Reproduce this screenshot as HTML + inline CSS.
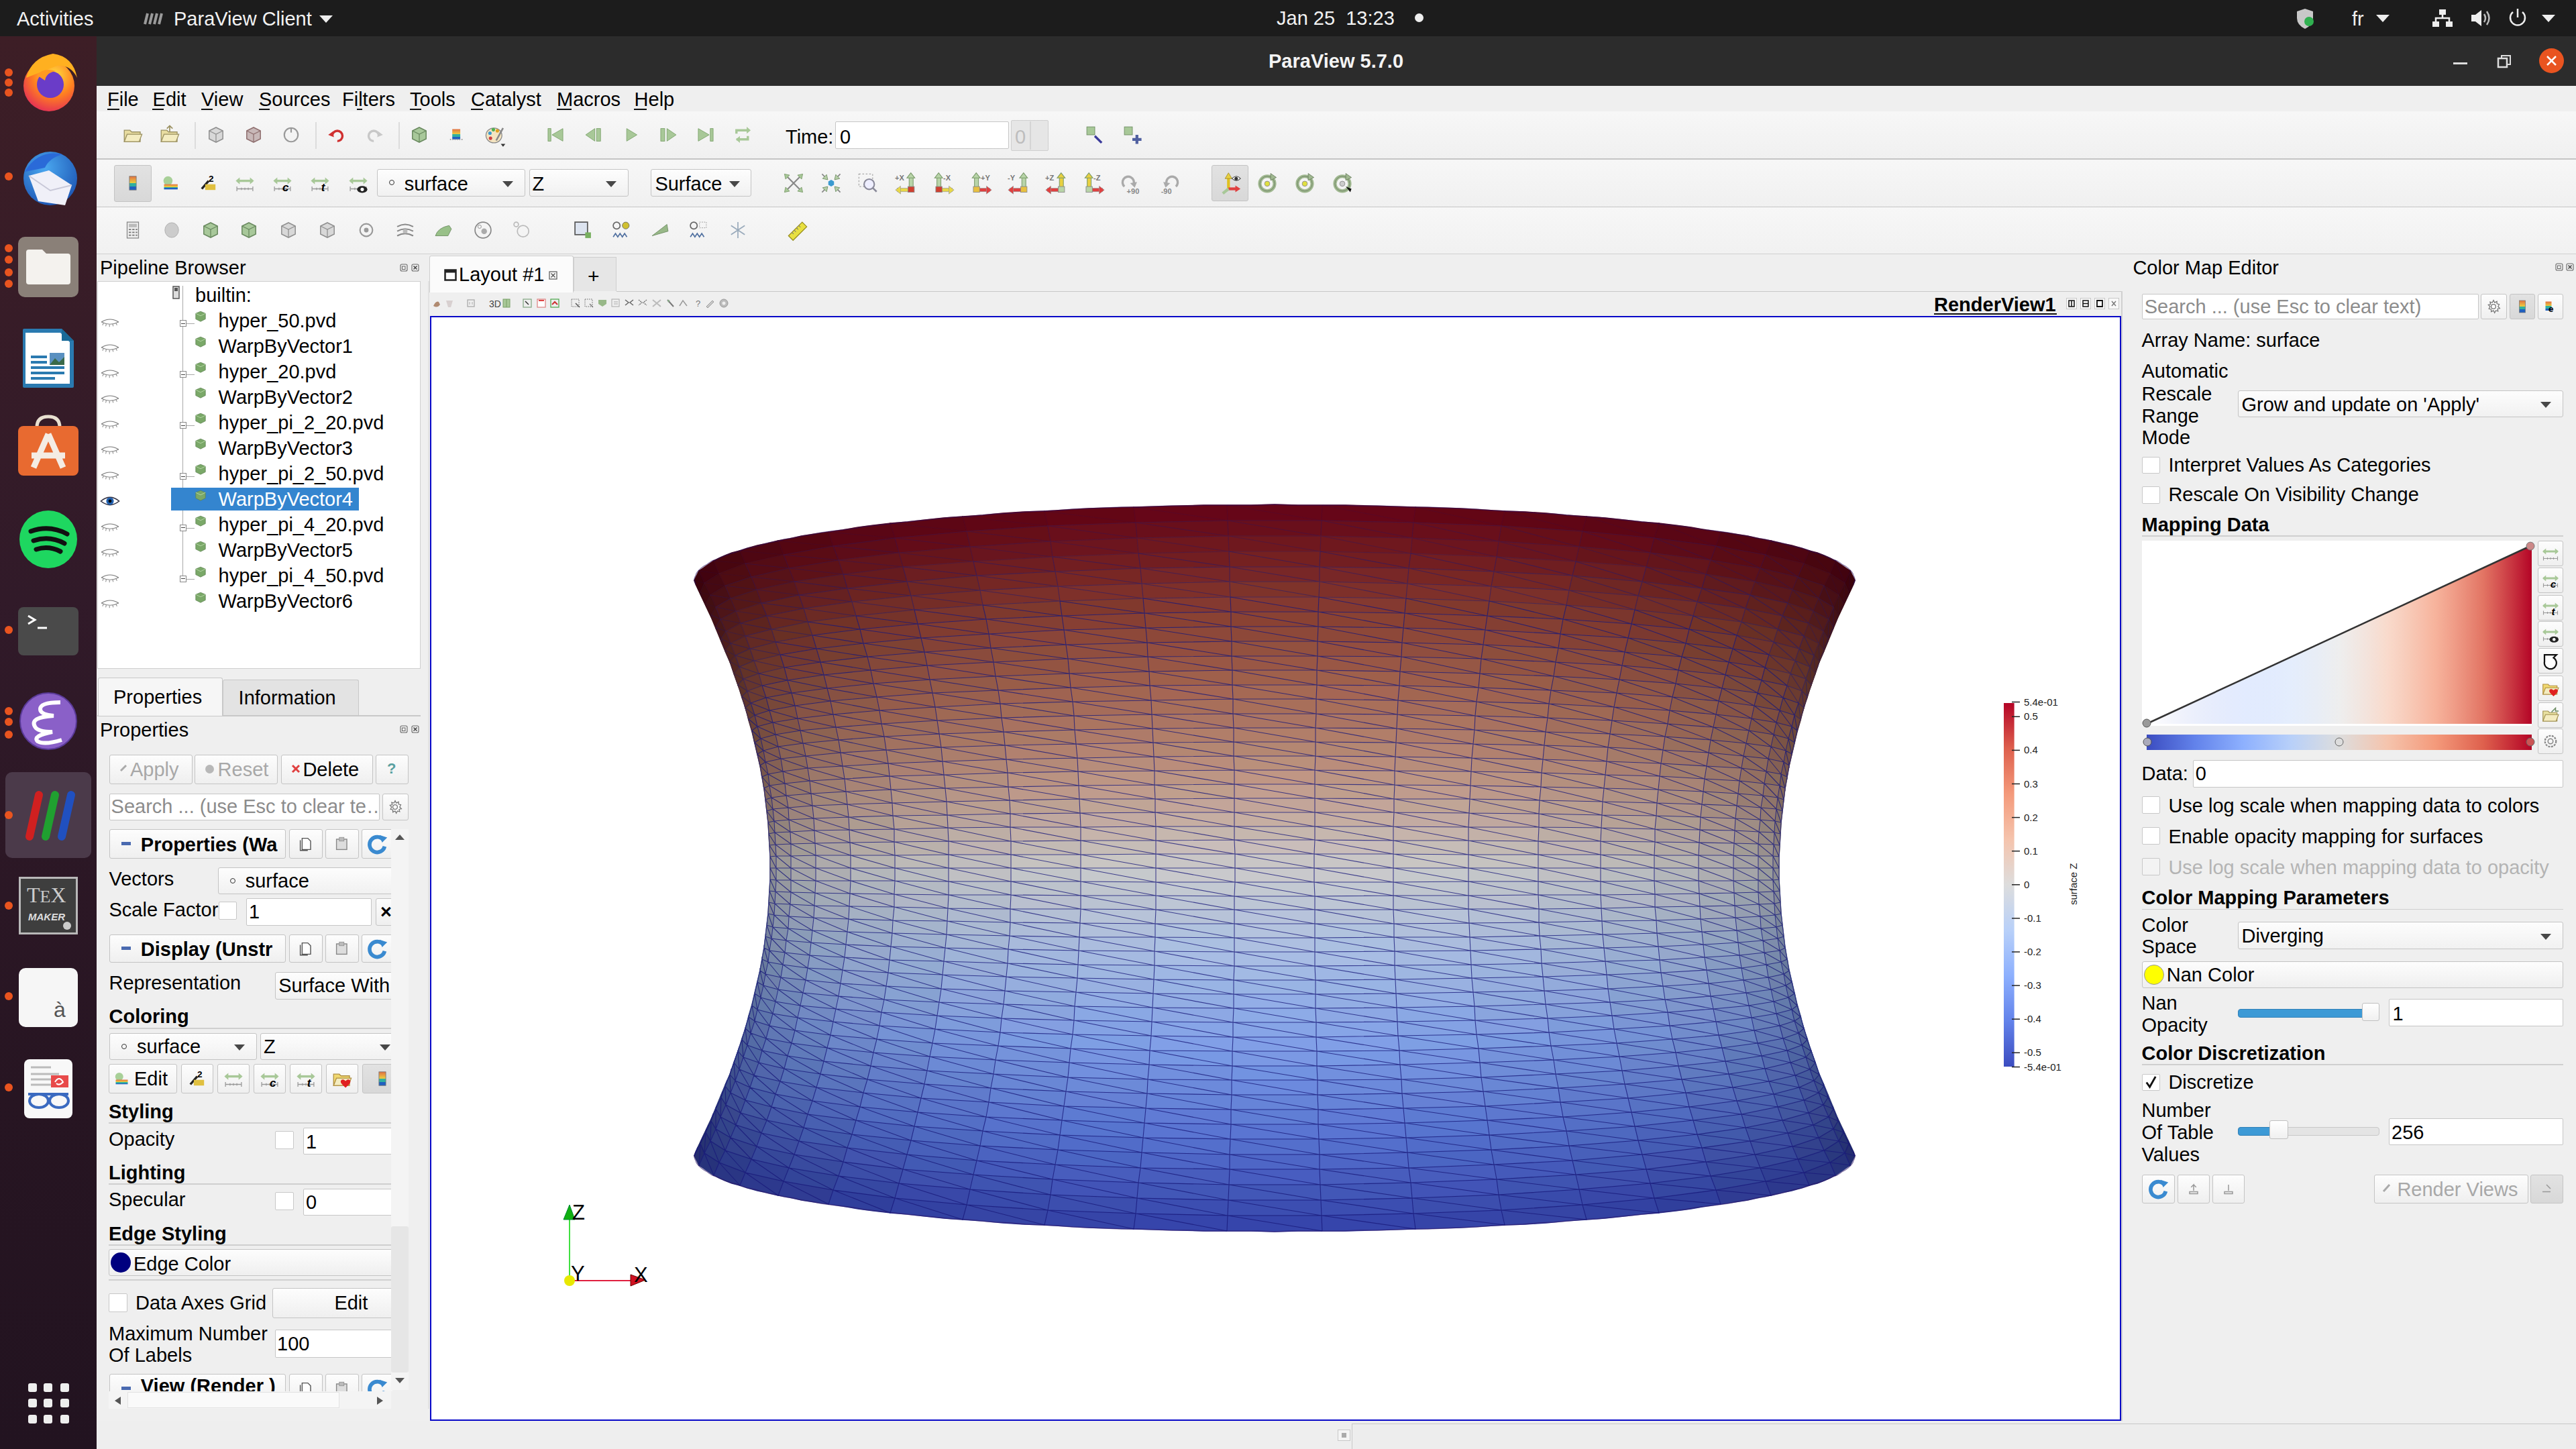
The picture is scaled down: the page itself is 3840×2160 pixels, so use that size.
<!DOCTYPE html>
<html><head><meta charset="utf-8">
<style>
*{box-sizing:border-box;margin:0;padding:0}
html,body{width:3840px;height:2160px;overflow:hidden;background:#efefef;font-family:"Liberation Sans",sans-serif;font-size:29px;color:#000}
.a{position:absolute}
.t{position:absolute;white-space:nowrap;line-height:1}
svg{overflow:visible}
</style></head><body>
<div class="a" style="left:0.0px;top:0.0px;width:3840.0px;height:54.0px;background:#1c1c1c"></div>
<div class="t" style="left:25.0px;top:13.5px;color:#f2f2f2">Activities</div>
<svg class="a" style="left:214.0px;top:18.0px" width="34" height="20" viewBox="0 0 34 20"><path d="M6 2 l-4 16 M13 2 l-4 16 M20 2 l-4 16 M27 2 l-4 16" stroke="#9a9a9a" stroke-width="4"/></svg>
<div class="t" style="left:259.0px;top:13.5px;color:#f2f2f2">ParaView Client</div>
<div class="a" style="left:476px;top:23px;border-left:10px solid transparent;border-right:10px solid transparent;border-top:11px solid #eee"></div>
<div class="t" style="left:1903.0px;top:12.5px;color:#f2f2f2">Jan 25&nbsp; 13:23</div>
<div class="a" style="left:2109.0px;top:20.0px;width:13.0px;height:13.0px;background:#eee;border-radius:50%"></div>
<svg class="a" style="left:3420.0px;top:10.0px" width="36" height="36" viewBox="0 0 36 36"><path d="M16 3 l12 4 v10 q0 10 -12 16 q-12 -6 -12 -16 v-10z" fill="#c8c8c8"/><circle cx="22" cy="22" r="7" fill="#30b050"/></svg>
<div class="t" style="left:3506.0px;top:13.5px;color:#eee">fr</div>
<div class="a" style="left:3542px;top:22px;border-left:10px solid transparent;border-right:10px solid transparent;border-top:11px solid #eee"></div>
<svg class="a" style="left:3625.0px;top:12.0px" width="32" height="30" viewBox="0 0 32 30"><rect x="11" y="2" width="10" height="8" fill="#eee"/><rect x="1" y="20" width="10" height="8" fill="#eee"/><rect x="21" y="20" width="10" height="8" fill="#eee"/><path d="M16 10 v5 M6 20 v-5 h20 v5" stroke="#eee" stroke-width="2.5" fill="none"/></svg>
<svg class="a" style="left:3682.0px;top:12.0px" width="32" height="30" viewBox="0 0 32 30"><path d="M2 10 h6 l9 -7 v24 l-9 -7 h-6z" fill="#eee"/><path d="M21 9 q4 6 0 12 M25 5 q7 10 0 20" fill="none" stroke="#bbb" stroke-width="2.5"/></svg>
<svg class="a" style="left:3737.0px;top:10.0px" width="32" height="32" viewBox="0 0 32 32"><path d="M9 8 a11 11 0 1 0 14 0" fill="none" stroke="#eee" stroke-width="2.5"/><path d="M16 3 v13" stroke="#eee" stroke-width="2.5"/></svg>
<div class="a" style="left:3789px;top:22px;border-left:10px solid transparent;border-right:10px solid transparent;border-top:11px solid #eee"></div>
<div class="a" style="left:0.0px;top:54.0px;width:144.0px;height:2106.0px;background:linear-gradient(180deg,#3d1e26 0%,#311a29 40%,#271522 75%,#221320 100%)"></div>
<div class="a" style="left:7.0px;top:102.0px;width:12.0px;height:12.0px;background:#e9541f;border-radius:50%"></div>
<div class="a" style="left:7.0px;top:116.5px;width:12.0px;height:12.0px;background:#e9541f;border-radius:50%"></div>
<div class="a" style="left:7.0px;top:132.0px;width:12.0px;height:12.0px;background:#e9541f;border-radius:50%"></div>
<svg class="a" style="left:29.0px;top:76.0px" width="88" height="92" viewBox="0 0 88 92"><defs><radialGradient id="ff1" cx="0.6" cy="0.3" r="0.8"><stop offset="0" stop-color="#ffe040"/><stop offset="0.5" stop-color="#ff8020"/><stop offset="1" stop-color="#e02060"/></radialGradient></defs><circle cx="44" cy="52" r="38" fill="url(#ff1)"/><path d="M10 40 q8 -30 40 -36 q30 4 36 36 q-10 -20 -30 -18" fill="#ffb020"/><circle cx="46" cy="50" r="20" fill="#6a3cc8"/><path d="M26 36 q10 -12 28 -6 q-14 2 -16 14z" fill="#ff9a20"/></svg>
<div class="a" style="left:7.0px;top:257.0px;width:12.0px;height:12.0px;background:#e9541f;border-radius:50%"></div>
<svg class="a" style="left:27.0px;top:216.0px" width="92" height="96" viewBox="0 0 92 96"><defs><radialGradient id="tb1" cx="0.4" cy="0.3" r="0.8"><stop offset="0" stop-color="#4aa8f0"/><stop offset="1" stop-color="#1a50b0"/></radialGradient></defs><circle cx="48" cy="50" r="40" fill="url(#tb1)"/><path d="M10 40 q20 -34 56 -26 q-20 6 -26 20z" fill="#2a6ad8"/><path d="M16 46 l30 -8 l34 22 l-10 30 l-40 -6z" fill="#f0f0f8"/><path d="M16 46 l32 22 l32 -8" fill="none" stroke="#c8c8d8" stroke-width="2"/></svg>
<div class="a" style="left:7.0px;top:364.0px;width:12.0px;height:12.0px;background:#e9541f;border-radius:50%"></div>
<div class="a" style="left:7.0px;top:381.0px;width:12.0px;height:12.0px;background:#e9541f;border-radius:50%"></div>
<div class="a" style="left:7.0px;top:400.0px;width:12.0px;height:12.0px;background:#e9541f;border-radius:50%"></div>
<div class="a" style="left:7.0px;top:417.0px;width:12.0px;height:12.0px;background:#e9541f;border-radius:50%"></div>
<div class="a" style="left:27.0px;top:353.0px;width:90.0px;height:90.0px;background:#8a8078;border-radius:10px"></div>
<svg class="a" style="left:37.0px;top:370.0px" width="70" height="56" viewBox="0 0 70 56"><path d="M2 6 q0 -4 4 -4 h20 l6 6 h32 q4 0 4 4 v38 q0 4 -4 4 h-58 q-4 0 -4 -4z" fill="#f4f2ee"/></svg>
<svg class="a" style="left:32.0px;top:488.0px" width="80" height="92" viewBox="0 0 80 92"><path d="M2 4 q0 -2 2 -2 h56 l18 18 v68 q0 2 -2 2 h-72 q-2 0 -2 -2z" fill="#2a7ab0"/><path d="M6 8 h52 l14 14 v62 h-66z" fill="#fff"/><path d="M60 2 l18 18 h-18z" fill="#1a6a98"/><path d="M14 44 h24 M14 52 h24 M14 60 h50 M14 68 h50 M14 76 h36" stroke="#2a7ab0" stroke-width="4"/><rect x="42" y="38" width="22" height="18" fill="#5a90c0"/><path d="M42 56 l8 -10 l6 6 l8 -8 v12z" fill="#3a6a4a"/></svg>
<svg class="a" style="left:27.0px;top:615.0px" width="90" height="96" viewBox="0 0 90 96"><path d="M28 22 q0 -16 17 -16 q17 0 17 16" fill="none" stroke="#e8e0d0" stroke-width="5"/><rect x="0" y="20" width="90" height="74" rx="8" fill="#e86a30"/><path d="M45 32 l-22 50 M45 32 l22 50 M20 64 h50" stroke="#f4ece4" stroke-width="9"/></svg>
<svg class="a" style="left:28.0px;top:760.0px" width="88" height="88" viewBox="0 0 88 88"><circle cx="44" cy="44" r="43" fill="#1ed760"/><path d="M18 32 q28 -10 54 4 M22 46 q24 -8 46 4 M26 59 q18 -6 36 3" fill="none" stroke="#111" stroke-width="7" stroke-linecap="round"/></svg>
<div class="a" style="left:7.0px;top:933.0px;width:12.0px;height:12.0px;background:#e9541f;border-radius:50%"></div>
<div class="a" style="left:27.0px;top:905.0px;width:90.0px;height:72.0px;background:#4a4a4a;border-radius:8px"></div>
<svg class="a" style="left:40.0px;top:914.0px" width="40" height="30" viewBox="0 0 40 30"><path d="M2 4 l10 6 l-10 6" fill="none" stroke="#fff" stroke-width="3"/><path d="M16 22 h14" stroke="#fff" stroke-width="3"/></svg>
<div class="a" style="left:7.0px;top:1054.0px;width:12.0px;height:12.0px;background:#e9541f;border-radius:50%"></div>
<div class="a" style="left:7.0px;top:1070.0px;width:12.0px;height:12.0px;background:#e9541f;border-radius:50%"></div>
<div class="a" style="left:7.0px;top:1089.0px;width:12.0px;height:12.0px;background:#e9541f;border-radius:50%"></div>
<svg class="a" style="left:28.0px;top:1031.0px" width="88" height="88" viewBox="0 0 88 88"><circle cx="44" cy="44" r="42" fill="#8a60c8"/><circle cx="44" cy="44" r="42" fill="none" stroke="#5a3a98" stroke-width="2"/><path d="M62 16 q-30 0 -30 10 q0 8 20 10 q-36 2 -28 16 q4 8 26 8 q-30 6 -22 14 q10 6 36 -2" fill="none" stroke="#fff" stroke-width="6"/></svg>
<div class="a" style="left:8.0px;top:1151.0px;width:128.0px;height:128.0px;background:#4b3a4a;border-radius:10px"></div>
<div class="a" style="left:7.0px;top:1209.0px;width:12.0px;height:12.0px;background:#e9541f;border-radius:50%"></div>
<svg class="a" style="left:30.0px;top:1175.0px" width="84" height="80" viewBox="0 0 84 80"><path d="M14 72 l14 -62" stroke="#d02020" stroke-width="12" stroke-linecap="round"/><path d="M38 72 l14 -62" stroke="#20a030" stroke-width="12" stroke-linecap="round"/><path d="M62 72 l14 -62" stroke="#2050c0" stroke-width="12" stroke-linecap="round"/></svg>
<div class="a" style="left:7.0px;top:1344.0px;width:12.0px;height:12.0px;background:#e9541f;border-radius:50%"></div>
<div class="a" style="left:28.0px;top:1307.0px;width:88.0px;height:86.0px;background:#3e3e3e;border:3px solid #b8b8b8"></div>
<div class="t" style="left:40.0px;top:1317.9px;font-size:32px;color:#ccc;font-family:Liberation Serif">T<span style="font-size:26px">E</span>X</div>
<div class="t" style="left:42.0px;top:1359.3px;font-size:15px;font-weight:bold;color:#ddd;font-style:italic">MAKER</div>
<div class="a" style="left:94.0px;top:1374.0px;width:12.0px;height:12.0px;background:#ccc;border-radius:50%"></div>
<div class="a" style="left:7.0px;top:1479.0px;width:12.0px;height:12.0px;background:#e9541f;border-radius:50%"></div>
<div class="a" style="left:28.0px;top:1443.0px;width:88.0px;height:88.0px;background:#f6f6f6;border-radius:10px"></div>
<div class="t" style="left:80.0px;top:1488.9px;font-size:32px;color:#555">à</div>
<div class="a" style="left:7.0px;top:1615.0px;width:12.0px;height:12.0px;background:#e9541f;border-radius:50%"></div>
<div class="a" style="left:36.0px;top:1579.0px;width:72.0px;height:88.0px;background:#f8f8f8;border-radius:8px"></div>
<svg class="a" style="left:36.0px;top:1579.0px" width="72" height="88" viewBox="0 0 72 88"><path d="M10 12 h30 M10 22 h42 M10 30 h30 M10 38 h30" stroke="#bbb" stroke-width="3"/><rect x="40" y="24" width="26" height="18" fill="#e84a4a"/><path d="M46 34 q6 -10 12 0 q-6 6 -10 2" fill="none" stroke="#fff" stroke-width="2"/><path d="M6 52 h60" stroke="#3a6ac0" stroke-width="4"/><ellipse cx="22" cy="62" rx="14" ry="10" fill="none" stroke="#3a6ac0" stroke-width="4"/><ellipse cx="52" cy="62" rx="14" ry="10" fill="none" stroke="#3a6ac0" stroke-width="4"/></svg>
<div class="a" style="left:41.8px;top:2061.5px;width:13.0px;height:13.0px;background:#eee;border-radius:3px"></div>
<div class="a" style="left:65.3px;top:2061.5px;width:13.0px;height:13.0px;background:#eee;border-radius:3px"></div>
<div class="a" style="left:89.5px;top:2061.5px;width:13.0px;height:13.0px;background:#eee;border-radius:3px"></div>
<div class="a" style="left:41.8px;top:2085.1px;width:13.0px;height:13.0px;background:#eee;border-radius:3px"></div>
<div class="a" style="left:65.3px;top:2085.1px;width:13.0px;height:13.0px;background:#eee;border-radius:3px"></div>
<div class="a" style="left:89.5px;top:2085.1px;width:13.0px;height:13.0px;background:#eee;border-radius:3px"></div>
<div class="a" style="left:41.8px;top:2109.0px;width:13.0px;height:13.0px;background:#eee;border-radius:3px"></div>
<div class="a" style="left:65.3px;top:2109.0px;width:13.0px;height:13.0px;background:#eee;border-radius:3px"></div>
<div class="a" style="left:89.5px;top:2109.0px;width:13.0px;height:13.0px;background:#eee;border-radius:3px"></div>
<div class="a" style="left:144.0px;top:54.0px;width:3696.0px;height:74.0px;background:#2c2c2c"></div>
<div class="t" style="left:1891.0px;top:76.5px;font-weight:bold;color:#f4f4f4">ParaView 5.7.0</div>
<div class="a" style="left:3657.0px;top:93.0px;width:21.0px;height:3.0px;background:#ddd"></div>
<svg class="a" style="left:3722.0px;top:80.0px" width="24" height="24" viewBox="0 0 24 24"><rect x="2" y="7" width="13" height="13" fill="none" stroke="#ddd" stroke-width="2.5"/><path d="M7 7 v-4 h13 v13 h-5" fill="none" stroke="#ddd" stroke-width="2"/></svg>
<div class="a" style="left:3785.0px;top:72.0px;width:37.0px;height:37.0px;background:#e95420;border-radius:50%"></div>
<svg class="a" style="left:3792.0px;top:79.0px" width="23" height="23" viewBox="0 0 23 23"><path d="M5 5 l13 13 M18 5 l-13 13" stroke="#fff" stroke-width="2.5"/></svg>
<div class="a" style="left:144.0px;top:128.0px;width:3696.0px;height:2032.0px;background:#efefef"></div>
<div class="a" style="left:144.0px;top:128.0px;width:3696.0px;height:38.0px;background:#efefef"></div>
<div class="t" style="left:160.0px;top:133.5px">File</div>
<div class="t" style="left:227.6px;top:133.5px">Edit</div>
<div class="t" style="left:300.0px;top:133.5px">View</div>
<div class="t" style="left:386.0px;top:133.5px">Sources</div>
<div class="t" style="left:510.0px;top:133.5px">Filters</div>
<div class="t" style="left:611.0px;top:133.5px">Tools</div>
<div class="t" style="left:702.0px;top:133.5px">Catalyst</div>
<div class="t" style="left:830.0px;top:133.5px">Macros</div>
<div class="t" style="left:945.6px;top:133.5px">Help</div>
<div class="a" style="left:160.0px;top:162.0px;width:18.0px;height:1.8px;background:#111"></div>
<div class="a" style="left:227.0px;top:162.0px;width:17.0px;height:1.8px;background:#111"></div>
<div class="a" style="left:300.0px;top:162.0px;width:17.0px;height:1.8px;background:#111"></div>
<div class="a" style="left:386.0px;top:162.0px;width:16.0px;height:1.8px;background:#111"></div>
<div class="a" style="left:532.0px;top:162.0px;width:8.0px;height:1.8px;background:#111"></div>
<div class="a" style="left:611.0px;top:162.0px;width:17.0px;height:1.8px;background:#111"></div>
<div class="a" style="left:702.0px;top:162.0px;width:18.0px;height:1.8px;background:#111"></div>
<div class="a" style="left:830.0px;top:162.0px;width:22.0px;height:1.8px;background:#111"></div>
<div class="a" style="left:945.0px;top:162.0px;width:19.0px;height:1.8px;background:#111"></div>
<div class="a" style="left:144.0px;top:166.0px;width:3696.0px;height:71.0px;background:linear-gradient(#f7f7f7,#f0f0f0)"></div>
<div class="a" style="left:144.0px;top:236.0px;width:3696.0px;height:1.5px;background:#c5c5c5"></div>
<div class="a" style="left:144.0px;top:237.5px;width:3696.0px;height:70.5px;background:linear-gradient(#f7f7f7,#f0f0f0)"></div>
<div class="a" style="left:144.0px;top:307.5px;width:3696.0px;height:1.5px;background:#c5c5c5"></div>
<div class="a" style="left:144.0px;top:309.0px;width:3696.0px;height:69.0px;background:linear-gradient(#f7f7f7,#f1f1f1)"></div>
<svg width="0" height="0" style="position:absolute"><defs><linearGradient id="cbg" x1="0" y1="1" x2="0" y2="0"><stop offset="0" stop-color="#2060c0"/><stop offset="0.25" stop-color="#2060c0"/><stop offset="0.25" stop-color="#30b0a0"/><stop offset="0.5" stop-color="#30b0a0"/><stop offset="0.5" stop-color="#e8d040"/><stop offset="0.75" stop-color="#e8a040"/><stop offset="1" stop-color="#e07040"/></linearGradient></defs></svg>
<svg class="a" style="left:180.5px;top:184.0px" width="34" height="34" viewBox="0 0 40 40"><path d="M5 12 h10 l3 3 h15 v17 h-28z" fill="#e8dca0" stroke="#9a9060" stroke-width="1.5"/><path d="M5 32 l5 -13 h26 l-5 13z" fill="#f4ecc0" stroke="#9a9060" stroke-width="1.5"/></svg>
<svg class="a" style="left:236.0px;top:184.0px" width="34" height="34" viewBox="0 0 40 40"><path d="M5 12 h10 l3 3 h15 v17 h-28z" fill="#e8dca0" stroke="#9a9060" stroke-width="1.5"/><path d="M5 32 l5 -13 h26 l-5 13z" fill="#f4ecc0" stroke="#9a9060" stroke-width="1.5"/><path d="M20 4 v10 M15 9 l5 -5 l5 5" stroke="#9a9060" stroke-width="2" fill="none"/></svg>
<div class="a" style="left:290.0px;top:182.0px;width:1.5px;height:40.0px;background:#dcdcdc"></div>
<svg class="a" style="left:305.0px;top:184.0px" width="34" height="34" viewBox="0 0 40 40"><path d="M8 13 l12 -6 l12 6 v14 l-12 6 l-12 -6z" fill="#d8d8d8" stroke="#909090" stroke-width="1.8"/><path d="M8 13 l12 6 l12 -6 M20 19 v14" fill="none" stroke="#909090" stroke-width="1.5"/></svg>
<svg class="a" style="left:361.0px;top:184.0px" width="34" height="34" viewBox="0 0 40 40"><path d="M8 13 l12 -6 l12 6 v14 l-12 6 l-12 -6z" fill="#c8b8b8" stroke="#907070" stroke-width="1.8"/><path d="M8 13 l12 6 l12 -6 M20 19 v14" fill="none" stroke="#907070" stroke-width="1.5"/></svg>
<svg class="a" style="left:416.5px;top:184.0px" width="34" height="34" viewBox="0 0 40 40"><circle cx="20" cy="20" r="12" fill="none" stroke="#999" stroke-width="2.5"/><path d="M20 8 v8" stroke="#999" stroke-width="2.5"/></svg>
<div class="a" style="left:470.0px;top:182.0px;width:1.5px;height:40.0px;background:#dcdcdc"></div>
<svg class="a" style="left:485.0px;top:184.0px" width="34" height="34" viewBox="0 0 40 40"><path d="M12 22 a9 9 0 1 1 9 9" fill="none" stroke="#d03030" stroke-width="4"/><path d="M5 20 l8 -6 l2 10z" fill="#d03030"/></svg>
<svg class="a" style="left:541.0px;top:184.0px" width="34" height="34" viewBox="0 0 40 40"><path d="M28 22 a9 9 0 1 0 -9 9" fill="none" stroke="#c8c8c8" stroke-width="4"/><path d="M35 20 l-8 -6 l-2 10z" fill="#c8c8c8"/></svg>
<div class="a" style="left:594.0px;top:182.0px;width:1.5px;height:40.0px;background:#dcdcdc"></div>
<svg class="a" style="left:608.0px;top:184.0px" width="34" height="34" viewBox="0 0 40 40"><path d="M8 13 l12 -6 l12 6 v14 l-12 6 l-12 -6z" fill="#a8c89a" stroke="#6a8a60" stroke-width="1.8"/><path d="M8 13 l12 6 l12 -6 M20 19 v14" fill="none" stroke="#6a8a60" stroke-width="1.5"/></svg>
<svg class="a" style="left:664.0px;top:184.0px" width="34" height="34" viewBox="0 0 40 40"><rect x="12" y="10" width="14" height="18" fill="url(#cbg)"/><path d="M8 28 h22" stroke="#999" stroke-dasharray="2 2" stroke-width="2"/></svg>
<svg class="a" style="left:721.0px;top:184.0px" width="34" height="34" viewBox="0 0 40 40"><ellipse cx="18" cy="21" rx="14" ry="13" fill="#f4e4c0" stroke="#888" stroke-width="1.5"/><circle cx="11" cy="17" r="3" fill="#3a9ad0"/><circle cx="17" cy="11" r="3" fill="#50b050"/><circle cx="24" cy="13" r="3" fill="#e0a020"/><circle cx="12" cy="26" r="3" fill="#d04040"/><path d="M22 30 l12 -22" stroke="#888" stroke-width="3"/><path d="M30 36 l8 0 l-4 5z" fill="#333"/></svg>
<svg class="a" style="left:811.0px;top:184.0px" width="34" height="34" viewBox="0 0 40 40"><rect x="7" y="9" width="5" height="22" fill="#a8c898" stroke="#78a068"/><path d="M33 9 v22 l-19 -11z" fill="#a8c898" stroke="#78a068"/></svg>
<svg class="a" style="left:867.5px;top:184.0px" width="34" height="34" viewBox="0 0 40 40"><path d="M22 9 v22 l-16 -11z" fill="#a8c898" stroke="#78a068"/><rect x="25" y="9" width="7" height="22" fill="#a8c898" stroke="#78a068"/></svg>
<svg class="a" style="left:923.6px;top:184.0px" width="34" height="34" viewBox="0 0 40 40"><path d="M12 9 v22 l18 -11z" fill="#a8c898" stroke="#78a068"/></svg>
<svg class="a" style="left:979.0px;top:184.0px" width="34" height="34" viewBox="0 0 40 40"><rect x="7" y="9" width="7" height="22" fill="#a8c898" stroke="#78a068"/><path d="M18 9 v22 l16 -11z" fill="#a8c898" stroke="#78a068"/></svg>
<svg class="a" style="left:1035.0px;top:184.0px" width="34" height="34" viewBox="0 0 40 40"><path d="M7 9 v22 l19 -11z" fill="#a8c898" stroke="#78a068"/><rect x="28" y="9" width="5" height="22" fill="#a8c898" stroke="#78a068"/></svg>
<svg class="a" style="left:1090.6px;top:184.0px" width="34" height="34" viewBox="0 0 40 40"><path d="M8 18 v-6 h20 M28 22 v6 h-20" fill="none" stroke="#a8c898" stroke-width="4"/><path d="M26 6 l7 6 l-7 6z M14 22 l-7 6 l7 6z" fill="#a8c898"/></svg>
<div class="t" style="left:1171.0px;top:189.5px">Time:</div>
<div class="a" style="left:1244.5px;top:181.4px;width:259.5px;height:41.0px;background:#fff;border:1.5px solid #c6c6c6;border-radius:2px"></div>
<div class="t" style="left:1252.0px;top:189.5px">0</div>
<div class="a" style="left:1507.0px;top:179.0px;width:56.0px;height:46.0px;background:#e6e6e6;border:1.5px solid #cfcfcf;border-radius:2px"></div>
<div class="a" style="left:1535.0px;top:181.0px;width:1.5px;height:42.0px;background:#d5d5d5"></div>
<div class="t" style="left:1513.0px;top:189.5px;color:#bdbdbd">0</div>
<svg class="a" style="left:1615.0px;top:184.0px" width="34" height="34" viewBox="0 0 40 40"><rect x="6" y="6" width="14" height="14" fill="#a8c898" stroke="#6a8a60"/><path d="M20 22 l12 12" stroke="#3a3a9a" stroke-width="4"/></svg>
<svg class="a" style="left:1671.0px;top:184.0px" width="34" height="34" viewBox="0 0 40 40"><rect x="6" y="6" width="14" height="14" fill="#a8c898" stroke="#6a8a60"/><path d="M28 20 v16 M20 28 h16" stroke="#5060a0" stroke-width="5"/></svg>
<div class="a" style="left:170.0px;top:246.0px;width:55.6px;height:54.6px;background:linear-gradient(#e2e2e2,#d8d8d8);border:1.5px solid #c4c4c4;border-radius:3px"></div>
<svg class="a" style="left:180.5px;top:256.0px" width="34" height="34" viewBox="0 0 40 40"><rect x="14" y="8" width="12" height="24" fill="url(#cbg)" stroke="#777" stroke-width="1"/></svg>
<svg class="a" style="left:236.0px;top:256.0px" width="34" height="34" viewBox="0 0 40 40"><circle cx="17" cy="16" r="8" fill="#a8d098"/><rect x="10" y="22" width="24" height="9" fill="url(#cbg)"/></svg>
<svg class="a" style="left:293.6px;top:256.0px" width="34" height="34" viewBox="0 0 40 40"><path d="M8 30 l12 -14" stroke="#222" stroke-width="4"/><rect x="14" y="22" width="18" height="10" fill="#e0c040"/><text x="20" y="18" font-size="16" font-weight="bold" font-family="Liberation Sans">2</text></svg>
<svg class="a" style="left:348.0px;top:256.0px" width="34" height="34" viewBox="0 0 40 40"><path d="M6 16 h28" stroke="#a8c898" stroke-width="4"/><path d="M4 16 l7 -6 v12z M36 16 l-7 -6 v12z" fill="#a8c898"/><path d="M6 30 h28 M6 26 v8 M34 26 v8 M14 28 v4 M20 28 v4 M26 28 v4" stroke="#999" stroke-width="1.5"/></svg>
<svg class="a" style="left:404.0px;top:256.0px" width="34" height="34" viewBox="0 0 40 40"><path d="M6 16 h28" stroke="#a8c898" stroke-width="4"/><path d="M4 16 l7 -6 v12z M36 16 l-7 -6 v12z" fill="#a8c898"/><path d="M6 30 h28 M6 26 v8 M34 26 v8 M14 28 v4 M20 28 v4 M26 28 v4" stroke="#999" stroke-width="1.5"/><text x="20" y="34" font-size="20" font-weight="bold" font-style="italic" font-family="Liberation Sans">c</text></svg>
<svg class="a" style="left:460.0px;top:256.0px" width="34" height="34" viewBox="0 0 40 40"><path d="M6 16 h28" stroke="#a8c898" stroke-width="4"/><path d="M4 16 l7 -6 v12z M36 16 l-7 -6 v12z" fill="#a8c898"/><path d="M6 30 h28 M6 26 v8 M34 26 v8 M14 28 v4 M20 28 v4 M26 28 v4" stroke="#999" stroke-width="1.5"/><text x="22" y="34" font-size="20" font-weight="bold" font-style="italic" font-family="Liberation Sans">t</text></svg>
<svg class="a" style="left:517.0px;top:256.0px" width="34" height="34" viewBox="0 0 40 40"><path d="M6 16 h28" stroke="#a8c898" stroke-width="4"/><path d="M4 16 l7 -6 v12z M36 16 l-7 -6 v12z" fill="#a8c898"/><path d="M6 30 h28 M6 26 v8 M34 26 v8 M14 28 v4 M20 28 v4 M26 28 v4" stroke="#999" stroke-width="1.5"/><ellipse cx="27" cy="31" rx="9" ry="6" fill="#222"/><circle cx="27" cy="31" r="3" fill="#fff"/></svg>
<div class="a" style="left:562.0px;top:252.0px;width:220.6px;height:41.0px;background:linear-gradient(#fdfdfd,#f1f1f1);border:1.5px solid #c4c4c4;border-radius:3px"></div>
<div class="a" style="left:748.6px;top:269.5px;border-left:8px solid transparent;border-right:8px solid transparent;border-top:9px solid #484848"></div>
<div class="a" style="left:580.0px;top:268.0px;width:8.0px;height:8.0px;border:1.5px solid #333;border-radius:50%"></div>
<div class="t" style="left:602.7px;top:259.5px">surface</div>
<div class="a" style="left:788.6px;top:252.0px;width:148.0px;height:41.0px;background:linear-gradient(#fdfdfd,#f1f1f1);border:1.5px solid #c4c4c4;border-radius:3px"></div>
<div class="a" style="left:902.6px;top:269.5px;border-left:8px solid transparent;border-right:8px solid transparent;border-top:9px solid #484848"></div>
<div class="t" style="left:793.5px;top:259.5px">Z</div>
<div class="a" style="left:970.4px;top:252.0px;width:150.1px;height:41.0px;background:linear-gradient(#fdfdfd,#f1f1f1);border:1.5px solid #c4c4c4;border-radius:3px"></div>
<div class="a" style="left:1086.5px;top:269.5px;border-left:8px solid transparent;border-right:8px solid transparent;border-top:9px solid #484848"></div>
<div class="t" style="left:976.4px;top:259.5px">Surface</div>
<svg class="a" style="left:1166.0px;top:256.0px" width="34" height="34" viewBox="0 0 40 40"><path d="M8 8 l24 24 M32 8 l-24 24" stroke="#888" stroke-width="2.5"/><path d="M4 4 l9 2 l-7 7z M36 4 l-9 2 l7 7z M4 36 l2 -9 l7 7z M36 36 l-2 -9 l-7 7z" fill="#a8c898" stroke="#789868"/></svg>
<svg class="a" style="left:1222.0px;top:256.0px" width="34" height="34" viewBox="0 0 40 40"><path d="M20 20 L20 20" /><polygon points="20,14 25,17 25,23 20,26 15,23 15,17" fill="#3a9ad0"/><path d="M4 4 L13 13 M36 4 L27 13 M4 36 L13 27 M36 36 L27 27" stroke="#888" stroke-width="2"/><path d="M14 14 L5 12 L12 5z M26 14 L35 12 L28 5z M14 26 L5 28 L12 35z M26 26 L35 28 L28 35z" fill="#b8d0a8" stroke="#6a8a60" stroke-width="1"/></svg>
<svg class="a" style="left:1277.0px;top:256.0px" width="34" height="34" viewBox="0 0 40 40"><rect x="4" y="4" width="24" height="22" fill="none" stroke="#aaa" stroke-dasharray="3 3" stroke-width="1.5"/><circle cx="22" cy="22" r="9" fill="#eef" stroke="#8a8a9a" stroke-width="2.5"/><path d="M28 28 l7 7" stroke="#8a8a9a" stroke-width="3"/></svg>
<svg class="a" style="left:1334.0px;top:256.0px" width="34" height="34" viewBox="0 0 40 40"><rect x="25" y="9" width="7" height="19" fill="#b8d4a8" stroke="#7a9a6a" stroke-width="1.2"/><path d="M21 11 L28 2 L35 11z" fill="#b8d4a8" stroke="#7a9a6a" stroke-width="1.2"/><rect x="4" y="29" width="20" height="6" fill="#e8d848" stroke="#999" stroke-width="0.8"/><path d="M1 32 L10 25 L10 39z" fill="#e8d848" stroke="#999" stroke-width="0.8"/><rect x="23" y="26" width="11" height="10" fill="#d04030" stroke="#888" stroke-width="1"/><text x="0" y="15" font-size="13" font-family="Liberation Sans" font-weight="bold" fill="#777">+X</text></svg>
<svg class="a" style="left:1389.0px;top:256.0px" width="34" height="34" viewBox="0 0 40 40"><rect x="9" y="9" width="7" height="19" fill="#b8d4a8" stroke="#7a9a6a" stroke-width="1.2"/><path d="M5 11 L12 2 L19 11z" fill="#b8d4a8" stroke="#7a9a6a" stroke-width="1.2"/><rect x="16" y="29" width="20" height="6" fill="#e8d848" stroke="#999" stroke-width="0.8"/><path d="M39 32 L30 25 L30 39z" fill="#e8d848" stroke="#999" stroke-width="0.8"/><rect x="7" y="26" width="11" height="10" fill="#d04030" stroke="#888" stroke-width="1"/><text x="20" y="15" font-size="13" font-family="Liberation Sans" font-weight="bold" fill="#777">-X</text></svg>
<svg class="a" style="left:1445.0px;top:256.0px" width="34" height="34" viewBox="0 0 40 40"><rect x="9" y="9" width="7" height="19" fill="#b8d4a8" stroke="#7a9a6a" stroke-width="1.2"/><path d="M5 11 L12 2 L19 11z" fill="#b8d4a8" stroke="#7a9a6a" stroke-width="1.2"/><rect x="16" y="29" width="20" height="6" fill="#e04040" stroke="#999" stroke-width="0.8"/><path d="M39 32 L30 25 L30 39z" fill="#e04040" stroke="#999" stroke-width="0.8"/><rect x="7" y="26" width="11" height="10" fill="#e8c040" stroke="#888" stroke-width="1"/><text x="20" y="15" font-size="13" font-family="Liberation Sans" font-weight="bold" fill="#777">+Y</text></svg>
<svg class="a" style="left:1502.0px;top:256.0px" width="34" height="34" viewBox="0 0 40 40"><rect x="25" y="9" width="7" height="19" fill="#b8d4a8" stroke="#7a9a6a" stroke-width="1.2"/><path d="M21 11 L28 2 L35 11z" fill="#b8d4a8" stroke="#7a9a6a" stroke-width="1.2"/><rect x="4" y="29" width="20" height="6" fill="#e04040" stroke="#999" stroke-width="0.8"/><path d="M1 32 L10 25 L10 39z" fill="#e04040" stroke="#999" stroke-width="0.8"/><rect x="23" y="26" width="11" height="10" fill="#e8c040" stroke="#888" stroke-width="1"/><text x="0" y="15" font-size="13" font-family="Liberation Sans" font-weight="bold" fill="#777">-Y</text></svg>
<svg class="a" style="left:1558.0px;top:256.0px" width="34" height="34" viewBox="0 0 40 40"><rect x="25" y="9" width="7" height="19" fill="#e8d040" stroke="#7a9a6a" stroke-width="1.2"/><path d="M21 11 L28 2 L35 11z" fill="#e8d040" stroke="#7a9a6a" stroke-width="1.2"/><rect x="4" y="29" width="20" height="6" fill="#e04040" stroke="#999" stroke-width="0.8"/><path d="M1 32 L10 25 L10 39z" fill="#e04040" stroke="#999" stroke-width="0.8"/><rect x="23" y="26" width="11" height="10" fill="#b8d4a8" stroke="#888" stroke-width="1"/><text x="0" y="15" font-size="13" font-family="Liberation Sans" font-weight="bold" fill="#777">+Z</text></svg>
<svg class="a" style="left:1612.6px;top:256.0px" width="34" height="34" viewBox="0 0 40 40"><rect x="9" y="9" width="7" height="19" fill="#e8d040" stroke="#7a9a6a" stroke-width="1.2"/><path d="M5 11 L12 2 L19 11z" fill="#e8d040" stroke="#7a9a6a" stroke-width="1.2"/><rect x="16" y="29" width="20" height="6" fill="#e04040" stroke="#999" stroke-width="0.8"/><path d="M39 32 L30 25 L30 39z" fill="#e04040" stroke="#999" stroke-width="0.8"/><rect x="7" y="26" width="11" height="10" fill="#b8d4a8" stroke="#888" stroke-width="1"/><text x="20" y="15" font-size="13" font-family="Liberation Sans" font-weight="bold" fill="#777">-Z</text></svg>
<svg class="a" style="left:1666.0px;top:256.0px" width="34" height="34" viewBox="0 0 40 40"><path d="M12 26 a10 10 0 1 1 16 -4" fill="none" stroke="#aaa" stroke-width="4"/><path d="M22 20 L34 18 L30 28z" fill="#aaa"/><text x="16" y="39" font-size="13" font-family="Liberation Sans" font-weight="bold" fill="#888">+90</text></svg>
<svg class="a" style="left:1729.0px;top:256.0px" width="34" height="34" viewBox="0 0 40 40"><path d="M28 26 a10 10 0 1 0 -16 -4" fill="none" stroke="#aaa" stroke-width="4"/><path d="M18 20 L6 18 L10 28z" fill="#aaa"/><text x="2" y="39" font-size="13" font-family="Liberation Sans" font-weight="bold" fill="#888">-90</text></svg>
<div class="a" style="left:1805.7px;top:246.0px;width:55.1px;height:54.0px;background:linear-gradient(#e2e2e2,#d8d8d8);border:1.5px solid #c4c4c4;border-radius:3px"></div>
<svg class="a" style="left:1816.0px;top:256.0px" width="34" height="34" viewBox="0 0 40 40"><path d="M18 30 V10" stroke="#e0c020" stroke-width="5"/><path d="M12 12 L18 2 L24 12z" fill="#e8d040" stroke="#a08a20"/><path d="M18 30 H32" stroke="#e04040" stroke-width="5"/><path d="M30 24 L39 30 L30 36z" fill="#e04040"/><path d="M18 30 L8 38" stroke="#a8c898" stroke-width="5"/><path d="M24 12 q8 -8 15 0 q-7 7 -15 0z" fill="#fff" stroke="#444" stroke-width="1.2"/><circle cx="31.5" cy="12" r="3" fill="#333"/></svg>
<svg class="a" style="left:1871.8px;top:256.0px" width="34" height="34" viewBox="0 0 40 40"><circle cx="20" cy="21" r="13" fill="none" stroke="#a0b890" stroke-width="6"/><circle cx="20" cy="21" r="13" fill="none" stroke="#6a8060" stroke-width="1"/><path d="M26 3 L36 10 L26 15z" fill="#a0b890" stroke="#6a8060"/><circle cx="20" cy="21" r="4.5" fill="#e0e040" stroke="#888"/></svg>
<svg class="a" style="left:1927.7px;top:256.0px" width="34" height="34" viewBox="0 0 40 40"><circle cx="20" cy="21" r="13" fill="none" stroke="#a0b890" stroke-width="6"/><circle cx="20" cy="21" r="13" fill="none" stroke="#6a8060" stroke-width="1"/><path d="M26 3 L36 10 L26 15z" fill="#a0b890" stroke="#6a8060"/><circle cx="20" cy="21" r="4.5" fill="#e0e040" stroke="#888"/></svg>
<svg class="a" style="left:1983.6px;top:256.0px" width="34" height="34" viewBox="0 0 40 40"><circle cx="20" cy="21" r="13" fill="none" stroke="#a0b890" stroke-width="6"/><circle cx="20" cy="21" r="13" fill="none" stroke="#6a8060" stroke-width="1"/><path d="M26 3 L36 10 L26 15z" fill="#a0b890" stroke="#6a8060"/><circle cx="20" cy="21" r="4.5" fill="#ccc" stroke="#888"/><path d="M26 26 l8 10 l2 -6z" fill="#111"/></svg>
<svg class="a" style="left:180.5px;top:326.0px" width="34" height="34" viewBox="0 0 40 40"><rect x="10" y="6" width="20" height="28" fill="#eee" stroke="#888" stroke-width="1.5"/><rect x="13" y="9" width="14" height="6" fill="#bbb"/><path d="M13 19 h4 M19 19 h4 M25 19 h3 M13 24 h4 M19 24 h4 M25 24 h3 M13 29 h4 M19 29 h4 M25 29 h3" stroke="#777" stroke-width="2"/></svg>
<svg class="a" style="left:239.0px;top:326.0px" width="34" height="34" viewBox="0 0 40 40"><ellipse cx="20" cy="20" rx="12" ry="13" fill="#ccc" stroke="#aaa"/></svg>
<svg class="a" style="left:296.5px;top:326.0px" width="34" height="34" viewBox="0 0 40 40"><path d="M8 13 l12 -6 l12 6 v14 l-12 6 l-12 -6z" fill="#a8c89a" stroke="#6a8a60" stroke-width="1.8"/><path d="M8 13 l12 6 l12 -6 M20 19 v14" fill="none" stroke="#6a8a60" stroke-width="1.5"/></svg>
<svg class="a" style="left:354.0px;top:326.0px" width="34" height="34" viewBox="0 0 40 40"><path d="M8 13 l12 -6 l12 6 v14 l-12 6 l-12 -6z" fill="#a8c89a" stroke="#6a8a60" stroke-width="1.8"/><path d="M8 13 l12 6 l12 -6 M20 19 v14" fill="none" stroke="#6a8a60" stroke-width="1.5"/></svg>
<svg class="a" style="left:413.0px;top:326.0px" width="34" height="34" viewBox="0 0 40 40"><path d="M8 13 l12 -6 l12 6 v14 l-12 6 l-12 -6z" fill="#d8d8d8" stroke="#909090" stroke-width="1.8"/><path d="M8 13 l12 6 l12 -6 M20 19 v14" fill="none" stroke="#909090" stroke-width="1.5"/></svg>
<svg class="a" style="left:470.5px;top:326.0px" width="34" height="34" viewBox="0 0 40 40"><path d="M8 13 l12 -6 l12 6 v14 l-12 6 l-12 -6z" fill="#d8d8d8" stroke="#909090" stroke-width="1.8"/><path d="M8 13 l12 6 l12 -6 M20 19 v14" fill="none" stroke="#909090" stroke-width="1.5"/></svg>
<svg class="a" style="left:529.0px;top:326.0px" width="34" height="34" viewBox="0 0 40 40"><circle cx="20" cy="20" r="11" fill="none" stroke="#999" stroke-width="2.5"/><circle cx="20" cy="20" r="4" fill="#999"/></svg>
<svg class="a" style="left:587.0px;top:326.0px" width="34" height="34" viewBox="0 0 40 40"><path d="M6 14 q14 -8 28 0 M6 22 q14 -8 28 0 M6 30 q14 -8 28 0" fill="none" stroke="#888" stroke-width="2.5"/><circle cx="20" cy="22" r="4" fill="#bbb"/></svg>
<svg class="a" style="left:644.0px;top:326.0px" width="34" height="34" viewBox="0 0 40 40"><path d="M6 30 q4 -14 24 -18 l4 6 l-6 12z" fill="#98c088" stroke="#6a8a60"/></svg>
<svg class="a" style="left:702.5px;top:326.0px" width="34" height="34" viewBox="0 0 40 40"><circle cx="20" cy="20" r="14" fill="none" stroke="#888" stroke-width="2"/><circle cx="22" cy="22" r="5" fill="#aaa"/><circle cx="14" cy="14" r="3" fill="none" stroke="#888"/></svg>
<svg class="a" style="left:761.0px;top:326.0px" width="34" height="34" viewBox="0 0 40 40"><circle cx="22" cy="22" r="10" fill="none" stroke="#bbb" stroke-width="2"/><circle cx="10" cy="10" r="4" fill="none" stroke="#bbb" stroke-width="2"/></svg>
<svg class="a" style="left:851.6px;top:326.0px" width="34" height="34" viewBox="0 0 40 40"><rect x="6" y="6" width="22" height="22" fill="#dde4f0" stroke="#555" stroke-width="2"/><rect x="24" y="24" width="10" height="10" fill="#78b060"/></svg>
<svg class="a" style="left:908.7px;top:326.0px" width="34" height="34" viewBox="0 0 40 40"><circle cx="12" cy="12" r="6" fill="none" stroke="#666" stroke-width="2"/><circle cx="28" cy="12" r="6" fill="#d0c030" stroke="#666"/><path d="M6 32 l4 -6 l4 6 l4 -6 l4 6 l4 -6 l4 6" fill="none" stroke="#5070a0" stroke-width="2"/></svg>
<svg class="a" style="left:967.0px;top:326.0px" width="34" height="34" viewBox="0 0 40 40"><path d="M6 30 l26 -20 l2 12z" fill="#98b888" stroke="#6a8a60"/></svg>
<svg class="a" style="left:1024.0px;top:326.0px" width="34" height="34" viewBox="0 0 40 40"><circle cx="12" cy="12" r="6" fill="none" stroke="#666" stroke-width="2"/><rect x="22" y="6" width="12" height="10" fill="none" stroke="#888" stroke-dasharray="2 2"/><path d="M6 32 l4 -6 l4 6 l4 -6 l4 6 l4 -6 l4 6" fill="none" stroke="#5070a0" stroke-width="2"/></svg>
<svg class="a" style="left:1082.6px;top:326.0px" width="34" height="34" viewBox="0 0 40 40"><path d="M20 6 v28 M8 12 l24 16 M8 28 l24 -16" stroke="#9ab" stroke-width="2"/></svg>
<svg class="a" style="left:1172.0px;top:326.0px" width="34" height="34" viewBox="0 0 40 40"><path d="M4 30 l24 -24 l8 8 l-24 24z" fill="#e8e040" stroke="#9a9020" stroke-width="1.5"/><path d="M10 24 l3 3 M14 20 l3 3 M18 16 l3 3 M22 12 l3 3" stroke="#777" stroke-width="1.2"/></svg>
<div class="t" style="left:149.0px;top:385.0px">Pipeline Browser</div>
<svg class="a" style="left:596.0px;top:393.0px" width="12" height="12" viewBox="0 0 12 12"><rect x="1" y="1" width="10" height="10" rx="2" fill="none" stroke="#666" stroke-width="1.1"/><rect x="3.5" y="4" width="4.5" height="4.5" fill="none" stroke="#666" stroke-width="1"/></svg>
<svg class="a" style="left:613.0px;top:393.0px" width="12" height="12" viewBox="0 0 12 12"><rect x="1" y="1" width="10" height="10" rx="2" fill="none" stroke="#666" stroke-width="1.1"/><path d="M3.5 3.5 l5 5 M8.5 3.5 l-5 5" stroke="#444" stroke-width="1.5"/></svg>
<div class="a" style="left:145.0px;top:419.0px;width:482.0px;height:578.0px;background:#fff;border:1.5px solid #cfcfcf"></div>
<div class="a" style="left:272.0px;top:426.0px;width:1.0px;height:436.0px;background:#a9a9a9"></div>
<svg class="a" style="left:256.0px;top:425.0px" width="14" height="24" viewBox="0 0 14 24"><rect x="2" y="2" width="9" height="18" fill="#ddd" stroke="#555" stroke-width="1.5"/><rect x="4" y="4" width="5" height="5" fill="#555"/></svg>
<div class="t" style="left:291.0px;top:426.0px">builtin:</div>
<div class="t" style="left:325.6px;top:463.5px">hyper_50.pvd</div>
<svg class="a" style="left:148.0px;top:464.0px" width="32" height="32" viewBox="0 0 40 40"><path d="M4 20 q16 -10 32 0" fill="none" stroke="#777" stroke-width="1.5"/><path d="M4 20 q16 8 32 0 M8 22 l-2 4 M13 24 l-1 4 M19 25 v4 M25 24 l1 4 M31 22 l2 4" fill="none" stroke="#888" stroke-width="1.3"/></svg>
<div class="a" style="left:268.0px;top:477.0px;width:10.0px;height:10.0px;background:#fff;border:1px solid #888"></div>
<div class="a" style="left:270.0px;top:481.5px;width:6.0px;height:1.2px;background:#444"></div>
<div class="a" style="left:278.0px;top:482.0px;width:12.0px;height:1.0px;background:#a9a9a9"></div>
<svg class="a" style="left:287.0px;top:460.0px" width="24" height="24" viewBox="0 0 40 40"><path d="M8 12 l12 -5 l12 5 v14 l-12 6 l-12 -6z" fill="#7aa868" stroke="#5a8050" stroke-width="1.2"/><path d="M8 12 l12 6 l12 -6" fill="none" stroke="#b8d8a8" stroke-width="1.5"/></svg>
<div class="t" style="left:325.6px;top:501.5px">WarpByVector1</div>
<svg class="a" style="left:148.0px;top:502.1px" width="32" height="32" viewBox="0 0 40 40"><path d="M4 20 q16 -10 32 0" fill="none" stroke="#777" stroke-width="1.5"/><path d="M4 20 q16 8 32 0 M8 22 l-2 4 M13 24 l-1 4 M19 25 v4 M25 24 l1 4 M31 22 l2 4" fill="none" stroke="#888" stroke-width="1.3"/></svg>
<svg class="a" style="left:287.0px;top:498.1px" width="24" height="24" viewBox="0 0 40 40"><path d="M8 12 l12 -5 l12 5 v14 l-12 6 l-12 -6z" fill="#7aa868" stroke="#5a8050" stroke-width="1.2"/><path d="M8 12 l12 6 l12 -6" fill="none" stroke="#b8d8a8" stroke-width="1.5"/></svg>
<div class="t" style="left:325.6px;top:539.6px">hyper_20.pvd</div>
<svg class="a" style="left:148.0px;top:540.1px" width="32" height="32" viewBox="0 0 40 40"><path d="M4 20 q16 -10 32 0" fill="none" stroke="#777" stroke-width="1.5"/><path d="M4 20 q16 8 32 0 M8 22 l-2 4 M13 24 l-1 4 M19 25 v4 M25 24 l1 4 M31 22 l2 4" fill="none" stroke="#888" stroke-width="1.3"/></svg>
<div class="a" style="left:268.0px;top:553.1px;width:10.0px;height:10.0px;background:#fff;border:1px solid #888"></div>
<div class="a" style="left:270.0px;top:557.6px;width:6.0px;height:1.2px;background:#444"></div>
<div class="a" style="left:278.0px;top:558.1px;width:12.0px;height:1.0px;background:#a9a9a9"></div>
<svg class="a" style="left:287.0px;top:536.1px" width="24" height="24" viewBox="0 0 40 40"><path d="M8 12 l12 -5 l12 5 v14 l-12 6 l-12 -6z" fill="#7aa868" stroke="#5a8050" stroke-width="1.2"/><path d="M8 12 l12 6 l12 -6" fill="none" stroke="#b8d8a8" stroke-width="1.5"/></svg>
<div class="t" style="left:325.6px;top:577.7px">WarpByVector2</div>
<svg class="a" style="left:148.0px;top:578.2px" width="32" height="32" viewBox="0 0 40 40"><path d="M4 20 q16 -10 32 0" fill="none" stroke="#777" stroke-width="1.5"/><path d="M4 20 q16 8 32 0 M8 22 l-2 4 M13 24 l-1 4 M19 25 v4 M25 24 l1 4 M31 22 l2 4" fill="none" stroke="#888" stroke-width="1.3"/></svg>
<svg class="a" style="left:287.0px;top:574.2px" width="24" height="24" viewBox="0 0 40 40"><path d="M8 12 l12 -5 l12 5 v14 l-12 6 l-12 -6z" fill="#7aa868" stroke="#5a8050" stroke-width="1.2"/><path d="M8 12 l12 6 l12 -6" fill="none" stroke="#b8d8a8" stroke-width="1.5"/></svg>
<div class="t" style="left:325.6px;top:615.7px">hyper_pi_2_20.pvd</div>
<svg class="a" style="left:148.0px;top:616.3px" width="32" height="32" viewBox="0 0 40 40"><path d="M4 20 q16 -10 32 0" fill="none" stroke="#777" stroke-width="1.5"/><path d="M4 20 q16 8 32 0 M8 22 l-2 4 M13 24 l-1 4 M19 25 v4 M25 24 l1 4 M31 22 l2 4" fill="none" stroke="#888" stroke-width="1.3"/></svg>
<div class="a" style="left:268.0px;top:629.3px;width:10.0px;height:10.0px;background:#fff;border:1px solid #888"></div>
<div class="a" style="left:270.0px;top:633.8px;width:6.0px;height:1.2px;background:#444"></div>
<div class="a" style="left:278.0px;top:634.3px;width:12.0px;height:1.0px;background:#a9a9a9"></div>
<svg class="a" style="left:287.0px;top:612.3px" width="24" height="24" viewBox="0 0 40 40"><path d="M8 12 l12 -5 l12 5 v14 l-12 6 l-12 -6z" fill="#7aa868" stroke="#5a8050" stroke-width="1.2"/><path d="M8 12 l12 6 l12 -6" fill="none" stroke="#b8d8a8" stroke-width="1.5"/></svg>
<div class="t" style="left:325.6px;top:653.8px">WarpByVector3</div>
<svg class="a" style="left:148.0px;top:654.4px" width="32" height="32" viewBox="0 0 40 40"><path d="M4 20 q16 -10 32 0" fill="none" stroke="#777" stroke-width="1.5"/><path d="M4 20 q16 8 32 0 M8 22 l-2 4 M13 24 l-1 4 M19 25 v4 M25 24 l1 4 M31 22 l2 4" fill="none" stroke="#888" stroke-width="1.3"/></svg>
<svg class="a" style="left:287.0px;top:650.4px" width="24" height="24" viewBox="0 0 40 40"><path d="M8 12 l12 -5 l12 5 v14 l-12 6 l-12 -6z" fill="#7aa868" stroke="#5a8050" stroke-width="1.2"/><path d="M8 12 l12 6 l12 -6" fill="none" stroke="#b8d8a8" stroke-width="1.5"/></svg>
<div class="t" style="left:325.6px;top:691.9px">hyper_pi_2_50.pvd</div>
<svg class="a" style="left:148.0px;top:692.4px" width="32" height="32" viewBox="0 0 40 40"><path d="M4 20 q16 -10 32 0" fill="none" stroke="#777" stroke-width="1.5"/><path d="M4 20 q16 8 32 0 M8 22 l-2 4 M13 24 l-1 4 M19 25 v4 M25 24 l1 4 M31 22 l2 4" fill="none" stroke="#888" stroke-width="1.3"/></svg>
<div class="a" style="left:268.0px;top:705.4px;width:10.0px;height:10.0px;background:#fff;border:1px solid #888"></div>
<div class="a" style="left:270.0px;top:709.9px;width:6.0px;height:1.2px;background:#444"></div>
<div class="a" style="left:278.0px;top:710.4px;width:12.0px;height:1.0px;background:#a9a9a9"></div>
<svg class="a" style="left:287.0px;top:688.4px" width="24" height="24" viewBox="0 0 40 40"><path d="M8 12 l12 -5 l12 5 v14 l-12 6 l-12 -6z" fill="#7aa868" stroke="#5a8050" stroke-width="1.2"/><path d="M8 12 l12 6 l12 -6" fill="none" stroke="#b8d8a8" stroke-width="1.5"/></svg>
<div class="a" style="left:255.0px;top:727.0px;width:280.0px;height:33.6px;background:#3485cf"></div>
<div class="t" style="left:325.6px;top:729.9px;color:#fff">WarpByVector4</div>
<svg class="a" style="left:148.0px;top:730.5px" width="32" height="32" viewBox="0 0 40 40"><path d="M3 20 q17 -14 34 0 q-17 14 -34 0z" fill="#fff" stroke="#334" stroke-width="2"/><circle cx="20" cy="20" r="7" fill="#2060b0"/><circle cx="20" cy="20" r="3" fill="#000"/></svg>
<svg class="a" style="left:287.0px;top:726.5px" width="24" height="24" viewBox="0 0 40 40"><path d="M8 12 l12 -5 l12 5 v14 l-12 6 l-12 -6z" fill="#7aa868" stroke="#5a8050" stroke-width="1.2"/><path d="M8 12 l12 6 l12 -6" fill="none" stroke="#b8d8a8" stroke-width="1.5"/></svg>
<div class="t" style="left:325.6px;top:768.0px">hyper_pi_4_20.pvd</div>
<svg class="a" style="left:148.0px;top:768.6px" width="32" height="32" viewBox="0 0 40 40"><path d="M4 20 q16 -10 32 0" fill="none" stroke="#777" stroke-width="1.5"/><path d="M4 20 q16 8 32 0 M8 22 l-2 4 M13 24 l-1 4 M19 25 v4 M25 24 l1 4 M31 22 l2 4" fill="none" stroke="#888" stroke-width="1.3"/></svg>
<div class="a" style="left:268.0px;top:781.6px;width:10.0px;height:10.0px;background:#fff;border:1px solid #888"></div>
<div class="a" style="left:270.0px;top:786.1px;width:6.0px;height:1.2px;background:#444"></div>
<div class="a" style="left:278.0px;top:786.6px;width:12.0px;height:1.0px;background:#a9a9a9"></div>
<svg class="a" style="left:287.0px;top:764.6px" width="24" height="24" viewBox="0 0 40 40"><path d="M8 12 l12 -5 l12 5 v14 l-12 6 l-12 -6z" fill="#7aa868" stroke="#5a8050" stroke-width="1.2"/><path d="M8 12 l12 6 l12 -6" fill="none" stroke="#b8d8a8" stroke-width="1.5"/></svg>
<div class="t" style="left:325.6px;top:806.1px">WarpByVector5</div>
<svg class="a" style="left:148.0px;top:806.6px" width="32" height="32" viewBox="0 0 40 40"><path d="M4 20 q16 -10 32 0" fill="none" stroke="#777" stroke-width="1.5"/><path d="M4 20 q16 8 32 0 M8 22 l-2 4 M13 24 l-1 4 M19 25 v4 M25 24 l1 4 M31 22 l2 4" fill="none" stroke="#888" stroke-width="1.3"/></svg>
<svg class="a" style="left:287.0px;top:802.6px" width="24" height="24" viewBox="0 0 40 40"><path d="M8 12 l12 -5 l12 5 v14 l-12 6 l-12 -6z" fill="#7aa868" stroke="#5a8050" stroke-width="1.2"/><path d="M8 12 l12 6 l12 -6" fill="none" stroke="#b8d8a8" stroke-width="1.5"/></svg>
<div class="t" style="left:325.6px;top:844.2px">hyper_pi_4_50.pvd</div>
<svg class="a" style="left:148.0px;top:844.7px" width="32" height="32" viewBox="0 0 40 40"><path d="M4 20 q16 -10 32 0" fill="none" stroke="#777" stroke-width="1.5"/><path d="M4 20 q16 8 32 0 M8 22 l-2 4 M13 24 l-1 4 M19 25 v4 M25 24 l1 4 M31 22 l2 4" fill="none" stroke="#888" stroke-width="1.3"/></svg>
<div class="a" style="left:268.0px;top:857.7px;width:10.0px;height:10.0px;background:#fff;border:1px solid #888"></div>
<div class="a" style="left:270.0px;top:862.2px;width:6.0px;height:1.2px;background:#444"></div>
<div class="a" style="left:278.0px;top:862.7px;width:12.0px;height:1.0px;background:#a9a9a9"></div>
<svg class="a" style="left:287.0px;top:840.7px" width="24" height="24" viewBox="0 0 40 40"><path d="M8 12 l12 -5 l12 5 v14 l-12 6 l-12 -6z" fill="#7aa868" stroke="#5a8050" stroke-width="1.2"/><path d="M8 12 l12 6 l12 -6" fill="none" stroke="#b8d8a8" stroke-width="1.5"/></svg>
<div class="t" style="left:325.6px;top:882.2px">WarpByVector6</div>
<svg class="a" style="left:148.0px;top:882.8px" width="32" height="32" viewBox="0 0 40 40"><path d="M4 20 q16 -10 32 0" fill="none" stroke="#777" stroke-width="1.5"/><path d="M4 20 q16 8 32 0 M8 22 l-2 4 M13 24 l-1 4 M19 25 v4 M25 24 l1 4 M31 22 l2 4" fill="none" stroke="#888" stroke-width="1.3"/></svg>
<svg class="a" style="left:287.0px;top:878.8px" width="24" height="24" viewBox="0 0 40 40"><path d="M8 12 l12 -5 l12 5 v14 l-12 6 l-12 -6z" fill="#7aa868" stroke="#5a8050" stroke-width="1.2"/><path d="M8 12 l12 6 l12 -6" fill="none" stroke="#b8d8a8" stroke-width="1.5"/></svg>
<div class="a" style="left:145.0px;top:1066.0px;width:482.0px;height:1.5px;background:#c8c8c8"></div>
<div class="a" style="left:145.8px;top:1010.0px;width:186.2px;height:57.0px;background:#f6f6f6;border:1.5px solid #c8c8c8;border-bottom:none;border-radius:3px 3px 0 0"></div>
<div class="a" style="left:332.0px;top:1013.0px;width:203.0px;height:53.0px;background:#e3e3e3;border:1.5px solid #c8c8c8;border-bottom:none;border-radius:3px 3px 0 0"></div>
<div class="t" style="left:169.0px;top:1025.3px">Properties</div>
<div class="t" style="left:355.6px;top:1025.5px">Information</div>
<div class="t" style="left:149.0px;top:1073.5px">Properties</div>
<svg class="a" style="left:596.0px;top:1081.0px" width="12" height="12" viewBox="0 0 12 12"><rect x="1" y="1" width="10" height="10" rx="2" fill="none" stroke="#666" stroke-width="1.1"/><rect x="3.5" y="4" width="4.5" height="4.5" fill="none" stroke="#666" stroke-width="1"/></svg>
<svg class="a" style="left:613.0px;top:1081.0px" width="12" height="12" viewBox="0 0 12 12"><rect x="1" y="1" width="10" height="10" rx="2" fill="none" stroke="#666" stroke-width="1.1"/><path d="M3.5 3.5 l5 5 M8.5 3.5 l-5 5" stroke="#444" stroke-width="1.5"/></svg>
<div class="a" style="left:162.5px;top:1125.0px;width:124.5px;height:44.0px;background:linear-gradient(#fdfdfd,#efefef);border:1.5px solid #c4c4c4;border-radius:3px"></div>
<div class="a" style="left:290.0px;top:1125.0px;width:124.0px;height:44.0px;background:linear-gradient(#fdfdfd,#efefef);border:1.5px solid #c4c4c4;border-radius:3px"></div>
<div class="a" style="left:418.7px;top:1125.0px;width:136.9px;height:44.0px;background:linear-gradient(#fdfdfd,#efefef);border:1.5px solid #c4c4c4;border-radius:3px"></div>
<div class="a" style="left:560.0px;top:1125.0px;width:48.6px;height:44.0px;background:linear-gradient(#fdfdfd,#efefef);border:1.5px solid #c4c4c4;border-radius:3px"></div>
<div class="t" style="left:194.0px;top:1132.5px;color:#a8a8a8">Apply</div>
<div class="t" style="left:324.6px;top:1132.5px;color:#a8a8a8">Reset</div>
<div class="t" style="left:451.4px;top:1132.5px">Delete</div>
<svg class="a" style="left:178.0px;top:1137.0px" width="14" height="16" viewBox="0 0 14 16"><path d="M2 12 l8 -8" stroke="#aaa" stroke-width="3"/></svg>
<div class="a" style="left:306.0px;top:1140.0px;width:13.0px;height:13.0px;background:#b8b8b8;border-radius:50%"></div>
<svg class="a" style="left:434.0px;top:1139.0px" width="14" height="14" viewBox="0 0 14 14"><path d="M2 2 l10 10 M12 2 l-10 10" stroke="#e04040" stroke-width="3"/></svg>
<div class="t" style="left:577.0px;top:1135.4px;font-size:22px;font-weight:bold;color:#5aa0a0">?</div>
<div class="a" style="left:162.5px;top:1183.0px;width:403.5px;height:40.0px;background:#fff;border:1.5px solid #c6c6c6;border-radius:2px"></div>
<div class="a" style="left:164px;top:1185px;width:400px;height:36px;overflow:hidden">
<div class="t" style="left:1.6px;top:2.5px;color:#8c8c8c">Search ... (use Esc to clear te…</div>
</div>
<div class="a" style="left:570.0px;top:1183.0px;width:38.6px;height:40.0px;background:linear-gradient(#fdfdfd,#efefef);border:1.5px solid #c4c4c4;border-radius:3px"></div>
<svg class="a" style="left:572.0px;top:1186.0px" width="34" height="34" viewBox="0 0 40 40"><path d="M20 9 l2 4 l4 -2 l0 4 l4 1 l-2 4 l3 3 l-4 1 l1 4 l-4 -1 l-2 4 l-2 -4 l-4 2 l0 -4 l-4 -1 l2 -4 l-3 -3 l4 -1 l-1 -4 l4 1z" fill="#fff" stroke="#777" stroke-width="1.5"/><circle cx="20" cy="20" r="4" fill="#fff" stroke="#777" stroke-width="1.5"/></svg>
<div class="a" style="left:145px;top:1228px;width:440px;height:846px;overflow:hidden">
<div class="a" style="left:-145px;top:-1228px;width:700px;height:2200px">
<div class="a" style="left:162.5px;top:1236.0px;width:263.5px;height:43.5px;background:linear-gradient(#fdfdfd,#efefef);border:1.5px solid #c4c4c4;border-radius:3px"></div>
<div class="a" style="left:181.0px;top:1254.8px;width:14.0px;height:5.0px;background:#4a6ab0"></div>
<div class="t" style="left:209.8px;top:1244.5px;font-weight:bold">Properties (Wa</div>
<div class="a" style="left:430.6px;top:1236.0px;width:50.0px;height:43.5px;background:linear-gradient(#fdfdfd,#efefef);border:1.5px solid #c4c4c4;border-radius:3px"></div>
<div class="a" style="left:485.0px;top:1236.0px;width:49.5px;height:43.5px;background:linear-gradient(#fdfdfd,#efefef);border:1.5px solid #c4c4c4;border-radius:3px"></div>
<div class="a" style="left:539.0px;top:1236.0px;width:61.0px;height:43.5px;background:linear-gradient(#fdfdfd,#efefef);border:1.5px solid #c4c4c4;border-radius:3px"></div>
<svg class="a" style="left:441.6px;top:1243.8px" width="28" height="28" viewBox="0 0 40 40"><path d="M12 8 h12 l6 6 v18 h-18z" fill="#fff" stroke="#555" stroke-width="2"/><path d="M8 12 v22 h16" fill="none" stroke="#555" stroke-width="2"/></svg>
<svg class="a" style="left:495.8px;top:1243.8px" width="28" height="28" viewBox="0 0 40 40"><rect x="8" y="10" width="22" height="22" fill="#ddd" stroke="#888" stroke-width="2"/><rect x="14" y="6" width="10" height="8" fill="#bbb" stroke="#888"/></svg>
<svg class="a" style="left:543.0px;top:1238.8px" width="38" height="38" viewBox="0 0 40 40"><path d="M30 14 a12 12 0 1 0 2 10" fill="none" stroke="#3a8ad0" stroke-width="6"/><path d="M24 6 l12 4 l-8 8z" fill="#3a8ad0"/></svg>
<div class="t" style="left:162.5px;top:1295.5px">Vectors</div>
<div class="a" style="left:324.6px;top:1292.7px;width:275.4px;height:40.3px;background:linear-gradient(#fdfdfd,#f1f1f1);border:1.5px solid #c4c4c4;border-radius:3px"></div>
<div class="a" style="left:343.0px;top:1309.0px;width:8.0px;height:8.0px;border:1.5px solid #333;border-radius:50%"></div>
<div class="t" style="left:365.7px;top:1299.1px">surface</div>
<div class="t" style="left:162.5px;top:1342.0px">Scale Factor</div>
<div class="a" style="left:325.5px;top:1344.0px;width:27.5px;height:27.0px;background:#fff;border:1.5px solid #c8c8c8;border-radius:2px"></div>
<div class="a" style="left:366.6px;top:1338.6px;width:187.4px;height:41.1px;background:#fff;border:1.5px solid #c6c6c6;border-radius:2px"></div>
<div class="t" style="left:371.0px;top:1345.1px">1</div>
<div class="a" style="left:560.0px;top:1338.6px;width:40.0px;height:41.1px;background:linear-gradient(#fdfdfd,#efefef);border:1.5px solid #c4c4c4;border-radius:3px"></div>
<div class="t" style="left:567.0px;top:1344.5px;font-weight:bold">×</div>
<div class="a" style="left:162.5px;top:1393.0px;width:263.5px;height:42.0px;background:linear-gradient(#fdfdfd,#efefef);border:1.5px solid #c4c4c4;border-radius:3px"></div>
<div class="a" style="left:181.0px;top:1411.0px;width:14.0px;height:5.0px;background:#4a6ab0"></div>
<div class="t" style="left:209.8px;top:1400.5px;font-weight:bold">Display (Unstr</div>
<div class="a" style="left:430.6px;top:1393.0px;width:50.0px;height:42.0px;background:linear-gradient(#fdfdfd,#efefef);border:1.5px solid #c4c4c4;border-radius:3px"></div>
<div class="a" style="left:485.0px;top:1393.0px;width:49.5px;height:42.0px;background:linear-gradient(#fdfdfd,#efefef);border:1.5px solid #c4c4c4;border-radius:3px"></div>
<div class="a" style="left:539.0px;top:1393.0px;width:61.0px;height:42.0px;background:linear-gradient(#fdfdfd,#efefef);border:1.5px solid #c4c4c4;border-radius:3px"></div>
<svg class="a" style="left:441.6px;top:1400.0px" width="28" height="28" viewBox="0 0 40 40"><path d="M12 8 h12 l6 6 v18 h-18z" fill="#fff" stroke="#555" stroke-width="2"/><path d="M8 12 v22 h16" fill="none" stroke="#555" stroke-width="2"/></svg>
<svg class="a" style="left:495.8px;top:1400.0px" width="28" height="28" viewBox="0 0 40 40"><rect x="8" y="10" width="22" height="22" fill="#ddd" stroke="#888" stroke-width="2"/><rect x="14" y="6" width="10" height="8" fill="#bbb" stroke="#888"/></svg>
<svg class="a" style="left:543.0px;top:1395.0px" width="38" height="38" viewBox="0 0 40 40"><path d="M30 14 a12 12 0 1 0 2 10" fill="none" stroke="#3a8ad0" stroke-width="6"/><path d="M24 6 l12 4 l-8 8z" fill="#3a8ad0"/></svg>
<div class="t" style="left:162.5px;top:1451.1px">Representation</div>
<div class="a" style="left:410.0px;top:1449.0px;width:190.0px;height:41.0px;background:linear-gradient(#fdfdfd,#f1f1f1);border:1.5px solid #c4c4c4;border-radius:3px"></div>
<div class="t" style="left:415.2px;top:1454.5px">Surface With</div>
<div class="t" style="left:162.5px;top:1501.0px;font-weight:bold">Coloring</div>
<div class="a" style="left:162.5px;top:1532.0px;width:437.5px;height:1.5px;background:#cfcfcf"></div>
<div class="a" style="left:162.5px;top:1540.0px;width:220.9px;height:40.0px;background:linear-gradient(#fdfdfd,#f1f1f1);border:1.5px solid #c4c4c4;border-radius:3px"></div>
<div class="a" style="left:349.4px;top:1557.0px;border-left:8px solid transparent;border-right:8px solid transparent;border-top:9px solid #484848"></div>
<div class="a" style="left:181.0px;top:1556.0px;width:8.0px;height:8.0px;border:1.5px solid #333;border-radius:50%"></div>
<div class="t" style="left:204.0px;top:1546.0px">surface</div>
<div class="a" style="left:387.8px;top:1540.0px;width:212.2px;height:40.0px;background:linear-gradient(#fdfdfd,#f1f1f1);border:1.5px solid #c4c4c4;border-radius:3px"></div>
<div class="a" style="left:566.0px;top:1557.0px;border-left:8px solid transparent;border-right:8px solid transparent;border-top:9px solid #484848"></div>
<div class="t" style="left:393.0px;top:1546.0px">Z</div>
<div class="a" style="left:162.0px;top:1586.0px;width:102.0px;height:44.0px;background:linear-gradient(#fdfdfd,#efefef);border:1.5px solid #c4c4c4;border-radius:3px"></div>
<svg class="a" style="left:165.0px;top:1593.0px" width="30" height="30" viewBox="0 0 40 40"><circle cx="17" cy="16" r="8" fill="#a8d098"/><rect x="10" y="22" width="24" height="9" fill="url(#cbg)"/></svg>
<div class="t" style="left:200.0px;top:1593.5px">Edit</div>
<div class="a" style="left:270.0px;top:1586.0px;width:48.0px;height:44.0px;background:linear-gradient(#fdfdfd,#efefef);border:1.5px solid #c4c4c4;border-radius:3px"></div>
<svg class="a" style="left:277.0px;top:1591.0px" width="34" height="34" viewBox="0 0 40 40"><path d="M8 30 l12 -14" stroke="#222" stroke-width="4"/><rect x="14" y="22" width="18" height="10" fill="#e0c040"/><text x="20" y="18" font-size="16" font-weight="bold" font-family="Liberation Sans">2</text></svg>
<div class="a" style="left:323.5px;top:1586.0px;width:48.5px;height:44.0px;background:linear-gradient(#fdfdfd,#efefef);border:1.5px solid #c4c4c4;border-radius:3px"></div>
<svg class="a" style="left:330.8px;top:1591.0px" width="34" height="34" viewBox="0 0 40 40"><path d="M6 16 h28" stroke="#a8c898" stroke-width="4"/><path d="M4 16 l7 -6 v12z M36 16 l-7 -6 v12z" fill="#a8c898"/><path d="M6 30 h28 M6 26 v8 M34 26 v8 M14 28 v4 M20 28 v4 M26 28 v4" stroke="#999" stroke-width="1.5"/></svg>
<div class="a" style="left:377.5px;top:1586.0px;width:48.5px;height:44.0px;background:linear-gradient(#fdfdfd,#efefef);border:1.5px solid #c4c4c4;border-radius:3px"></div>
<svg class="a" style="left:384.8px;top:1591.0px" width="34" height="34" viewBox="0 0 40 40"><path d="M6 16 h28" stroke="#a8c898" stroke-width="4"/><path d="M4 16 l7 -6 v12z M36 16 l-7 -6 v12z" fill="#a8c898"/><path d="M6 30 h28 M6 26 v8 M34 26 v8 M14 28 v4 M20 28 v4 M26 28 v4" stroke="#999" stroke-width="1.5"/><text x="20" y="34" font-size="20" font-weight="bold" font-style="italic" font-family="Liberation Sans">c</text></svg>
<div class="a" style="left:431.5px;top:1586.0px;width:48.5px;height:44.0px;background:linear-gradient(#fdfdfd,#efefef);border:1.5px solid #c4c4c4;border-radius:3px"></div>
<svg class="a" style="left:438.8px;top:1591.0px" width="34" height="34" viewBox="0 0 40 40"><path d="M6 16 h28" stroke="#a8c898" stroke-width="4"/><path d="M4 16 l7 -6 v12z M36 16 l-7 -6 v12z" fill="#a8c898"/><path d="M6 30 h28 M6 26 v8 M34 26 v8 M14 28 v4 M20 28 v4 M26 28 v4" stroke="#999" stroke-width="1.5"/><text x="22" y="34" font-size="20" font-weight="bold" font-style="italic" font-family="Liberation Sans">t</text></svg>
<div class="a" style="left:485.6px;top:1586.0px;width:48.8px;height:44.0px;background:linear-gradient(#fdfdfd,#efefef);border:1.5px solid #c4c4c4;border-radius:3px"></div>
<svg class="a" style="left:493.0px;top:1591.0px" width="34" height="34" viewBox="0 0 40 40"><path d="M5 12 h10 l3 3 h15 v17 h-28z" fill="#f0d870" stroke="#b09040" stroke-width="1.5"/><path d="M5 32 l5 -13 h26 l-5 13z" fill="#f4ecc0" stroke="#b09040" stroke-width="1.5"/><path d="M26 24 c-6 -6 -12 0 -6 6 l6 6 l6 -6 c6 -6 0 -12 -6 -6z" fill="#e02020"/></svg>
<div class="a" style="left:539.6px;top:1586.0px;width:60.4px;height:44.0px;background:linear-gradient(#e2e2e2,#d8d8d8);border:1.5px solid #c4c4c4;border-radius:3px"></div>
<svg class="a" style="left:553.0px;top:1591.0px" width="34" height="34" viewBox="0 0 40 40"><rect x="14" y="8" width="12" height="24" fill="url(#cbg)" stroke="#777" stroke-width="1"/></svg>
<div class="t" style="left:162.0px;top:1642.8px;font-weight:bold">Styling</div>
<div class="a" style="left:162.0px;top:1673.0px;width:438.0px;height:1.5px;background:#cfcfcf"></div>
<div class="t" style="left:162.0px;top:1683.5px">Opacity</div>
<div class="a" style="left:410.0px;top:1686.0px;width:27.5px;height:27.0px;background:#fff;border:1.5px solid #c8c8c8;border-radius:2px"></div>
<div class="a" style="left:451.6px;top:1681.0px;width:148.4px;height:40.0px;background:#fff;border:1.5px solid #c6c6c6;border-radius:2px"></div>
<div class="t" style="left:456.0px;top:1687.5px">1</div>
<div class="t" style="left:162.0px;top:1733.5px;font-weight:bold">Lighting</div>
<div class="a" style="left:162.0px;top:1764.0px;width:438.0px;height:1.5px;background:#cfcfcf"></div>
<div class="t" style="left:162.0px;top:1773.5px">Specular</div>
<div class="a" style="left:410.0px;top:1777.0px;width:27.5px;height:27.0px;background:#fff;border:1.5px solid #c8c8c8;border-radius:2px"></div>
<div class="a" style="left:451.6px;top:1772.0px;width:148.4px;height:40.0px;background:#fff;border:1.5px solid #c6c6c6;border-radius:2px"></div>
<div class="t" style="left:456.0px;top:1777.5px">0</div>
<div class="t" style="left:162.0px;top:1824.5px;font-weight:bold">Edge Styling</div>
<div class="a" style="left:162.0px;top:1855.0px;width:438.0px;height:1.5px;background:#cfcfcf"></div>
<div class="a" style="left:162.0px;top:1862.0px;width:438.0px;height:40.0px;background:linear-gradient(#fdfdfd,#efefef);border:1.5px solid #c4c4c4;border-radius:3px"></div>
<div class="a" style="left:165.0px;top:1867.0px;width:30.0px;height:30.0px;background:#00007f;border-radius:50%"></div>
<div class="t" style="left:199.0px;top:1869.5px">Edge Color</div>
<div class="a" style="left:162.0px;top:1907.0px;width:438.0px;height:1.5px;background:#d0d0d0"></div>
<div class="a" style="left:162.0px;top:1928.0px;width:28.0px;height:28.0px;background:#fff;border:1.5px solid #c8c8c8;border-radius:2px"></div>
<div class="t" style="left:202.0px;top:1927.5px">Data Axes Grid</div>
<div class="a" style="left:405.5px;top:1919.5px;width:194.5px;height:45.5px;background:linear-gradient(#fdfdfd,#efefef);border:1.5px solid #c4c4c4;border-radius:3px"></div>
<div class="t" style="left:498.4px;top:1927.5px">Edit</div>
<div class="t" style="left:162.0px;top:1973.5px">Maximum Number</div>
<div class="t" style="left:162.0px;top:2005.5px">Of Labels</div>
<div class="a" style="left:409.5px;top:1982.0px;width:190.5px;height:41.6px;background:#fff;border:1.5px solid #c6c6c6;border-radius:2px"></div>
<div class="t" style="left:413.0px;top:1988.5px">100</div>
<div class="a" style="left:162.5px;top:2048.0px;width:263.5px;height:44.0px;background:linear-gradient(#fdfdfd,#efefef);border:1.5px solid #c4c4c4;border-radius:3px"></div>
<div class="a" style="left:181.0px;top:2067.0px;width:14.0px;height:5.0px;background:#4a6ab0"></div>
<div class="t" style="left:209.8px;top:2051.5px;font-weight:bold">View (Render )</div>
<div class="a" style="left:430.6px;top:2048.0px;width:50.0px;height:44.0px;background:linear-gradient(#fdfdfd,#efefef);border:1.5px solid #c4c4c4;border-radius:3px"></div>
<div class="a" style="left:485.0px;top:2048.0px;width:49.5px;height:44.0px;background:linear-gradient(#fdfdfd,#efefef);border:1.5px solid #c4c4c4;border-radius:3px"></div>
<div class="a" style="left:539.0px;top:2048.0px;width:61.0px;height:44.0px;background:linear-gradient(#fdfdfd,#efefef);border:1.5px solid #c4c4c4;border-radius:3px"></div>
<svg class="a" style="left:441.6px;top:2056.0px" width="28" height="28" viewBox="0 0 40 40"><path d="M12 8 h12 l6 6 v18 h-18z" fill="#fff" stroke="#555" stroke-width="2"/><path d="M8 12 v22 h16" fill="none" stroke="#555" stroke-width="2"/></svg>
<svg class="a" style="left:495.8px;top:2056.0px" width="28" height="28" viewBox="0 0 40 40"><rect x="8" y="10" width="22" height="22" fill="#ddd" stroke="#888" stroke-width="2"/><rect x="14" y="6" width="10" height="8" fill="#bbb" stroke="#888"/></svg>
<svg class="a" style="left:543.0px;top:2051.0px" width="38" height="38" viewBox="0 0 40 40"><path d="M30 14 a12 12 0 1 0 2 10" fill="none" stroke="#3a8ad0" stroke-width="6"/><path d="M24 6 l12 4 l-8 8z" fill="#3a8ad0"/></svg>
</div></div>
<div class="a" style="left:583.0px;top:1236.0px;width:26.0px;height:836.0px;background:#f4f4f4"></div>
<div class="a" style="left:583.0px;top:1828.0px;width:26.0px;height:218.0px;background:#e6e6e6;border-radius:3px"></div>
<svg class="a" style="left:587.0px;top:1242.0px" width="18" height="12" viewBox="0 0 18 12"><path d="M2 10 l7 -8 l7 8z" fill="#555"/></svg>
<svg class="a" style="left:587.0px;top:2052.0px" width="18" height="12" viewBox="0 0 18 12"><path d="M2 2 l7 8 l7 -8z" fill="#555"/></svg>
<div class="a" style="left:162.0px;top:2074.0px;width:421.0px;height:26.0px;background:#f4f4f4"></div>
<div class="a" style="left:190.0px;top:2075.0px;width:316.0px;height:24.0px;background:#fafafa;border:1px solid #e2e2e2"></div>
<svg class="a" style="left:168.0px;top:2080.0px" width="14" height="16" viewBox="0 0 14 16"><path d="M12 2 l-9 6 l9 6z" fill="#555"/></svg>
<svg class="a" style="left:560.0px;top:2080.0px" width="14" height="16" viewBox="0 0 14 16"><path d="M2 2 l9 6 l-9 6z" fill="#555"/></svg>
<div class="a" style="left:638.0px;top:419.0px;width:1.5px;height:1681.0px;background:#e2e2e2"></div>
<div class="a" style="left:640.0px;top:381.0px;width:215.0px;height:55.0px;background:#fbfbfb;border:1.5px solid #cfcfcf;border-bottom:none;border-radius:3px 3px 0 0"></div>
<div class="a" style="left:855.0px;top:383.0px;width:64.0px;height:51.0px;background:#e6e6e6;border:1.5px solid #cfcfcf;border-bottom:none"></div>
<div class="a" style="left:919.0px;top:433.5px;width:2243.0px;height:1.5px;background:#c8c8c8"></div>
<div class="a" style="left:144.0px;top:377.5px;width:3696.0px;height:1.2px;background:#d0d0d0"></div>
<svg class="a" style="left:662.0px;top:401.0px" width="19" height="18" viewBox="0 0 19 18"><rect x="1.5" y="1.5" width="16" height="15" fill="none" stroke="#222" stroke-width="2.5"/><rect x="1.5" y="1.5" width="16" height="4" fill="#222"/></svg>
<div class="t" style="left:684.0px;top:395.1px">Layout #1</div>
<svg class="a" style="left:818.0px;top:404.0px" width="13" height="13" viewBox="0 0 13 13"><rect x="1" y="1" width="11" height="11" fill="none" stroke="#555" stroke-width="1.2"/><path d="M3.5 3.5 l6 6 M9.5 3.5 l-6 6" stroke="#555" stroke-width="1.4"/></svg>
<div class="t" style="left:876.0px;top:396.6px;font-size:30px">+</div>
<svg class="a" style="left:643.0px;top:444.0px" width="16" height="16" viewBox="0 0 16 16"><path d="M3 12 q4 -8 8 -6 l2 4 q-4 6 -10 2z" fill="#b08a70"/></svg>
<svg class="a" style="left:661.6px;top:444.0px" width="16" height="16" viewBox="0 0 16 16"><path d="M3 4 h10 l-3 10 h-4z" fill="#d8d0d0"/></svg>
<svg class="a" style="left:694.0px;top:444.0px" width="16" height="16" viewBox="0 0 16 16"><rect x="3" y="3" width="10" height="10" fill="none" stroke="#aaa" stroke-width="1.3"/><path d="M6 6 v4 M10 6 v4" stroke="#aaa"/></svg>
<svg class="a" style="left:746.5px;top:444.0px" width="16" height="16" viewBox="0 0 16 16"><rect x="3" y="2" width="10" height="12" fill="#a8c898" stroke="#78a068"/><path d="M8 2 v12" stroke="#78a068"/></svg>
<svg class="a" style="left:778.0px;top:444.0px" width="16" height="16" viewBox="0 0 16 16"><rect x="2" y="2" width="12" height="12" fill="#eee" stroke="#8a8" stroke-width="1.3"/><path d="M5 5 l5 5" stroke="#333" stroke-width="1.5"/></svg>
<svg class="a" style="left:798.7px;top:444.0px" width="16" height="16" viewBox="0 0 16 16"><rect x="2" y="2" width="12" height="12" fill="#fff" stroke="#d88" stroke-width="1.3"/><path d="M4 4 h8" stroke="#d44" stroke-width="2"/></svg>
<svg class="a" style="left:818.6px;top:444.0px" width="16" height="16" viewBox="0 0 16 16"><rect x="2" y="2" width="12" height="12" fill="#eee" stroke="#5a5" stroke-width="1.3"/><path d="M4 10 l4 -4 l4 4" stroke="#c33" stroke-width="2" fill="none"/></svg>
<svg class="a" style="left:850.0px;top:444.0px" width="16" height="16" viewBox="0 0 16 16"><rect x="2" y="2" width="11" height="11" fill="none" stroke="#666" stroke-dasharray="1.5 1.5"/><path d="M8 8 l6 6" stroke="#555" stroke-width="1.5"/></svg>
<svg class="a" style="left:870.0px;top:444.0px" width="16" height="16" viewBox="0 0 16 16"><rect x="2" y="2" width="11" height="11" fill="none" stroke="#666" stroke-dasharray="1.5 1.5"/><path d="M9 9 l5 5" stroke="#777" stroke-width="1.3"/></svg>
<svg class="a" style="left:890.0px;top:444.0px" width="16" height="16" viewBox="0 0 16 16"><path d="M2 3 h12 v6 l-6 4 l-6 -4z" fill="#98b888"/></svg>
<svg class="a" style="left:909.5px;top:444.0px" width="16" height="16" viewBox="0 0 16 16"><rect x="2" y="2" width="11" height="11" fill="none" stroke="#aaa"/><path d="M5 6 h6 M5 9 h6" stroke="#aaa"/></svg>
<svg class="a" style="left:930.0px;top:444.0px" width="16" height="16" viewBox="0 0 16 16"><path d="M2 3 l5 4 l-5 4 M14 3 l-5 4 l5 4" fill="none" stroke="#666" stroke-width="1.5"/></svg>
<svg class="a" style="left:949.8px;top:444.0px" width="16" height="16" viewBox="0 0 16 16"><path d="M2 3 l5 4 l-5 4 M14 3 l-5 4 l5 4" fill="none" stroke="#777" stroke-width="1.3" stroke-dasharray="2 1"/></svg>
<svg class="a" style="left:971.0px;top:444.0px" width="16" height="16" viewBox="0 0 16 16"><path d="M2 3 l12 10 M14 3 l-12 10" stroke="#bbb" stroke-width="2"/></svg>
<svg class="a" style="left:991.5px;top:444.0px" width="16" height="16" viewBox="0 0 16 16"><path d="M3 3 l9 10" stroke="#777" stroke-width="2"/><path d="M3 3 l4 1 l-3 3z" fill="#8a8"/></svg>
<svg class="a" style="left:1011.4px;top:444.0px" width="16" height="16" viewBox="0 0 16 16"><path d="M2 12 l5 -8 l6 8" fill="none" stroke="#999" stroke-width="1.5"/></svg>
<svg class="a" style="left:1033.0px;top:444.0px" width="16" height="16" viewBox="0 0 16 16"><text x="4" y="13" font-size="13" font-family="Liberation Sans" fill="#777">?</text></svg>
<svg class="a" style="left:1050.4px;top:444.0px" width="16" height="16" viewBox="0 0 16 16"><path d="M3 13 l9 -9 l2 2 l-9 9z" fill="#ccc" stroke="#999"/></svg>
<svg class="a" style="left:1071.0px;top:444.0px" width="16" height="16" viewBox="0 0 16 16"><circle cx="8" cy="8" r="6" fill="#bbb" stroke="#999"/><circle cx="8" cy="8" r="2.5" fill="#eee"/></svg>
<div class="t" style="left:729.0px;top:446.1px;font-size:14px;color:#444">3D</div>
<div class="t" style="left:2883.0px;top:439.5px;font-weight:bold">RenderView1</div>
<div class="a" style="left:2883.0px;top:467.0px;width:183.0px;height:2.0px;background:#111"></div>
<div class="a" style="left:3080.0px;top:444.0px;width:16.0px;height:17.0px;background:#f8f8f8;border:1px solid #c8c8c8"></div>
<div class="a" style="left:3101.0px;top:444.0px;width:16.0px;height:17.0px;background:#f8f8f8;border:1px solid #c8c8c8"></div>
<div class="a" style="left:3122.0px;top:444.0px;width:16.0px;height:17.0px;background:#f8f8f8;border:1px solid #c8c8c8"></div>
<div class="a" style="left:3143.0px;top:444.0px;width:16.0px;height:17.0px;background:#f8f8f8;border:1px solid #c8c8c8"></div>
<svg class="a" style="left:3080.0px;top:444.0px" width="16" height="17" viewBox="0 0 16 17"><path d="M4 4 h8 v9 h-8z M8 4 v9" fill="none" stroke="#111" stroke-width="1.5"/></svg>
<svg class="a" style="left:3101.0px;top:444.0px" width="16" height="17" viewBox="0 0 16 17"><path d="M4 4 h8 v9 h-8z M4 8.5 h8" fill="none" stroke="#111" stroke-width="1.5"/></svg>
<svg class="a" style="left:3122.0px;top:444.0px" width="16" height="17" viewBox="0 0 16 17"><path d="M4 4 h8 v9 h-8z" fill="none" stroke="#111" stroke-width="1.8"/></svg>
<svg class="a" style="left:3143.0px;top:444.0px" width="16" height="17" viewBox="0 0 16 17"><path d="M5 5 l6 7 M11 5 l-6 7" stroke="#777" stroke-width="1.4"/></svg>
<div class="a" style="left:3162.0px;top:434.0px;width:1.5px;height:1688.0px;background:#d0d0d0"></div>
<div class="a" style="left:641.0px;top:471.0px;width:2521.0px;height:1647.0px;background:#fff;border:2px solid #0808c8"></div>
<div class="t" style="left:3179.4px;top:385.2px">Color Map Editor</div>
<svg class="a" style="left:3809.0px;top:392.0px" width="12" height="12" viewBox="0 0 12 12"><rect x="1" y="1" width="10" height="10" rx="2" fill="none" stroke="#666" stroke-width="1.1"/><rect x="3.5" y="4" width="4.5" height="4.5" fill="none" stroke="#666" stroke-width="1"/></svg>
<svg class="a" style="left:3825.0px;top:392.0px" width="12" height="12" viewBox="0 0 12 12"><rect x="1" y="1" width="10" height="10" rx="2" fill="none" stroke="#666" stroke-width="1.1"/><path d="M3.5 3.5 l5 5 M8.5 3.5 l-5 5" stroke="#444" stroke-width="1.5"/></svg>
<div class="a" style="left:3192.5px;top:437.6px;width:502.5px;height:38.9px;background:#fff;border:1.5px solid #c6c6c6;border-radius:2px"></div>
<div class="t" style="left:3196.7px;top:443.1px;color:#8c8c8c">Search ... (use Esc to clear text)</div>
<div class="a" style="left:3697.8px;top:437.6px;width:39.2px;height:38.9px;background:linear-gradient(#fdfdfd,#efefef);border:1.5px solid #c4c4c4;border-radius:3px"></div>
<svg class="a" style="left:3700.0px;top:440.0px" width="34" height="34" viewBox="0 0 40 40"><path d="M20 9 l2 4 l4 -2 l0 4 l4 1 l-2 4 l3 3 l-4 1 l1 4 l-4 -1 l-2 4 l-2 -4 l-4 2 l0 -4 l-4 -1 l2 -4 l-3 -3 l4 -1 l-1 -4 l4 1z" fill="#fff" stroke="#777" stroke-width="1.5"/><circle cx="20" cy="20" r="4" fill="#fff" stroke="#777" stroke-width="1.5"/></svg>
<div class="a" style="left:3741.0px;top:437.6px;width:38.0px;height:38.9px;background:linear-gradient(#e2e2e2,#d8d8d8);border:1.5px solid #c4c4c4;border-radius:3px"></div>
<svg class="a" style="left:3745.0px;top:442.0px" width="30" height="30" viewBox="0 0 40 40"><rect x="14" y="8" width="12" height="24" fill="url(#cbg)" stroke="#777" stroke-width="1"/></svg>
<div class="a" style="left:3782.8px;top:437.6px;width:38.2px;height:38.9px;background:linear-gradient(#fdfdfd,#efefef);border:1.5px solid #c4c4c4;border-radius:3px"></div>
<svg class="a" style="left:3787.0px;top:442.0px" width="30" height="30" viewBox="0 0 40 40"><rect x="10" y="10" width="12" height="18" fill="url(#cbg)"/><text x="16" y="30" font-size="18" font-weight="bold" font-family="Liberation Sans">e</text></svg>
<div class="t" style="left:3192.5px;top:492.9px">Array Name: surface</div>
<div class="t" style="left:3192.5px;top:539.1px">Automatic</div>
<div class="t" style="left:3192.5px;top:572.5px">Rescale</div>
<div class="t" style="left:3192.5px;top:605.5px">Range</div>
<div class="t" style="left:3192.5px;top:638.2px">Mode</div>
<div class="a" style="left:3336.0px;top:582.0px;width:485.0px;height:40.0px;background:linear-gradient(#fdfdfd,#f1f1f1);border:1.5px solid #c4c4c4;border-radius:3px"></div>
<div class="a" style="left:3787.0px;top:599.0px;border-left:8px solid transparent;border-right:8px solid transparent;border-top:9px solid #484848"></div>
<div class="t" style="left:3341.5px;top:588.9px">Grow and update on 'Apply'</div>
<div class="a" style="left:3192.5px;top:681.0px;width:27.5px;height:25.0px;background:#fff;border:1.5px solid #c8c8c8;border-radius:2px"></div>
<div class="t" style="left:3232.4px;top:679.1px">Interpret Values As Categories</div>
<div class="a" style="left:3192.5px;top:724.6px;width:27.5px;height:26.4px;background:#fff;border:1.5px solid #c8c8c8;border-radius:2px"></div>
<div class="t" style="left:3232.4px;top:722.7px">Rescale On Visibility Change</div>
<div class="t" style="left:3192.5px;top:768.3px;font-weight:bold">Mapping Data</div>
<div class="a" style="left:3192.5px;top:798.0px;width:628.5px;height:1.5px;background:#cfcfcf"></div>
<div class="a" style="left:3192.5px;top:806.0px;width:581.5px;height:276.0px;background:#fff"></div>
<svg class="a" style="left:3192.0px;top:806.0px" width="583" height="277" viewBox="0 0 583 277"><defs><linearGradient id="cw" x1="0" x2="1"><stop offset="0" stop-color="#3b4cc0"/><stop offset="0.125" stop-color="#6282ea"/><stop offset="0.25" stop-color="#8db0fe"/><stop offset="0.375" stop-color="#b8d0f9"/><stop offset="0.5" stop-color="#dddddd"/><stop offset="0.625" stop-color="#f5c4ad"/><stop offset="0.75" stop-color="#f49a7b"/><stop offset="0.875" stop-color="#de604d"/><stop offset="1" stop-color="#b40426"/></linearGradient><linearGradient id="op" x1="0" x2="1"><stop offset="0" stop-color="#fff" stop-opacity="1"/><stop offset="1" stop-color="#fff" stop-opacity="0"/></linearGradient></defs><path d="M8 273 L582 7 L582 273z" fill="url(#cw)"/><path d="M8 273 L582 7 L582 273z" fill="url(#op)"/><path d="M8 273 L582 7" stroke="#333" stroke-width="2.5"/><circle cx="8" cy="272" r="6" fill="#999" stroke="#555"/><circle cx="580" cy="8" r="6" fill="#c88" stroke="#777"/></svg>
<svg class="a" style="left:3198.0px;top:1094.0px" width="580" height="26" viewBox="0 0 580 26"><rect x="2" y="1" width="574" height="23" fill="url(#cw)"/><circle cx="3" cy="12" r="6" fill="#aab" stroke="#555"/><circle cx="289" cy="12" r="6" fill="#ddd" stroke="#666"/><circle cx="574" cy="12" r="6" fill="#c55" stroke="#666"/></svg>
<div class="a" style="left:3783.0px;top:806.0px;width:38.0px;height:38.0px;background:linear-gradient(#fdfdfd,#efefef);border:1.5px solid #c4c4c4;border-radius:3px"></div>
<div class="a" style="left:3783.0px;top:846.0px;width:38.0px;height:38.0px;background:linear-gradient(#fdfdfd,#efefef);border:1.5px solid #c4c4c4;border-radius:3px"></div>
<div class="a" style="left:3783.0px;top:886.6px;width:38.0px;height:38.0px;background:linear-gradient(#fdfdfd,#efefef);border:1.5px solid #c4c4c4;border-radius:3px"></div>
<div class="a" style="left:3783.0px;top:926.0px;width:38.0px;height:38.0px;background:linear-gradient(#fdfdfd,#efefef);border:1.5px solid #c4c4c4;border-radius:3px"></div>
<div class="a" style="left:3783.0px;top:966.0px;width:38.0px;height:38.0px;background:linear-gradient(#fdfdfd,#efefef);border:1.5px solid #c4c4c4;border-radius:3px"></div>
<div class="a" style="left:3783.0px;top:1007.0px;width:38.0px;height:38.0px;background:linear-gradient(#fdfdfd,#efefef);border:1.5px solid #c4c4c4;border-radius:3px"></div>
<div class="a" style="left:3783.0px;top:1046.7px;width:38.0px;height:38.0px;background:linear-gradient(#fdfdfd,#efefef);border:1.5px solid #c4c4c4;border-radius:3px"></div>
<div class="a" style="left:3783.0px;top:1086.0px;width:38.0px;height:38.0px;background:linear-gradient(#fdfdfd,#efefef);border:1.5px solid #c4c4c4;border-radius:3px"></div>
<svg class="a" style="left:3787.0px;top:810.0px" width="30" height="30" viewBox="0 0 40 40"><path d="M6 16 h28" stroke="#a8c898" stroke-width="4"/><path d="M4 16 l7 -6 v12z M36 16 l-7 -6 v12z" fill="#a8c898"/><path d="M6 30 h28 M6 26 v8 M34 26 v8 M14 28 v4 M20 28 v4 M26 28 v4" stroke="#999" stroke-width="1.5"/></svg>
<svg class="a" style="left:3787.0px;top:850.0px" width="30" height="30" viewBox="0 0 40 40"><path d="M6 16 h28" stroke="#a8c898" stroke-width="4"/><path d="M4 16 l7 -6 v12z M36 16 l-7 -6 v12z" fill="#a8c898"/><path d="M6 30 h28 M6 26 v8 M34 26 v8 M14 28 v4 M20 28 v4 M26 28 v4" stroke="#999" stroke-width="1.5"/><text x="20" y="34" font-size="20" font-weight="bold" font-style="italic" font-family="Liberation Sans">c</text></svg>
<svg class="a" style="left:3787.0px;top:890.6px" width="30" height="30" viewBox="0 0 40 40"><path d="M6 16 h28" stroke="#a8c898" stroke-width="4"/><path d="M4 16 l7 -6 v12z M36 16 l-7 -6 v12z" fill="#a8c898"/><path d="M6 30 h28 M6 26 v8 M34 26 v8 M14 28 v4 M20 28 v4 M26 28 v4" stroke="#999" stroke-width="1.5"/><text x="22" y="34" font-size="20" font-weight="bold" font-style="italic" font-family="Liberation Sans">t</text></svg>
<svg class="a" style="left:3787.0px;top:930.0px" width="30" height="30" viewBox="0 0 40 40"><path d="M6 16 h28" stroke="#a8c898" stroke-width="4"/><path d="M4 16 l7 -6 v12z M36 16 l-7 -6 v12z" fill="#a8c898"/><path d="M6 30 h28 M6 26 v8 M34 26 v8 M14 28 v4 M20 28 v4 M26 28 v4" stroke="#999" stroke-width="1.5"/><ellipse cx="27" cy="31" rx="9" ry="6" fill="#222"/><circle cx="27" cy="31" r="3" fill="#fff"/></svg>
<svg class="a" style="left:3787.0px;top:970.0px" width="30" height="30" viewBox="0 0 40 40"><path d="M8 8 h24 l-6 6 a12 12 0 1 1 -18 8z" fill="#fff" stroke="#111" stroke-width="3"/></svg>
<svg class="a" style="left:3787.0px;top:1011.0px" width="30" height="30" viewBox="0 0 40 40"><path d="M5 12 h10 l3 3 h15 v17 h-28z" fill="#f0d870" stroke="#b09040" stroke-width="1.5"/><path d="M5 32 l5 -13 h26 l-5 13z" fill="#f4ecc0" stroke="#b09040" stroke-width="1.5"/><path d="M26 24 c-6 -6 -12 0 -6 6 l6 6 l6 -6 c6 -6 0 -12 -6 -6z" fill="#e02020"/></svg>
<svg class="a" style="left:3787.0px;top:1050.7px" width="30" height="30" viewBox="0 0 40 40"><path d="M5 12 h10 l3 3 h15 v17 h-28z" fill="#e8e0a0" stroke="#a09050" stroke-width="1.5"/><path d="M5 32 l5 -13 h26 l-5 13z" fill="#f4ecc0" stroke="#a09050" stroke-width="1.5"/><path d="M22 14 l8 -8 v6 h6" fill="none" stroke="#6a8a60" stroke-width="2"/></svg>
<svg class="a" style="left:3787.0px;top:1090.0px" width="30" height="30" viewBox="0 0 40 40"><circle cx="20" cy="20" r="11" fill="none" stroke="#888" stroke-width="3" stroke-dasharray="4 2"/><circle cx="20" cy="20" r="5" fill="none" stroke="#888" stroke-width="2"/></svg>
<div class="t" style="left:3192.5px;top:1138.5px">Data:</div>
<div class="a" style="left:3269.0px;top:1132.5px;width:552.0px;height:41.0px;background:#fff;border:1.5px solid #c6c6c6;border-radius:2px"></div>
<div class="t" style="left:3272.8px;top:1138.5px">0</div>
<div class="a" style="left:3192.5px;top:1186.6px;width:27.5px;height:26.2px;background:#fff;border:1.5px solid #c8c8c8;border-radius:2px"></div>
<div class="t" style="left:3232.4px;top:1186.5px">Use log scale when mapping data to colors</div>
<div class="a" style="left:3192.5px;top:1233.0px;width:27.5px;height:26.0px;background:#fff;border:1.5px solid #c8c8c8;border-radius:2px"></div>
<div class="t" style="left:3232.4px;top:1232.9px">Enable opacity mapping for surfaces</div>
<div class="a" style="left:3192.5px;top:1279.0px;width:27.5px;height:26.0px;background:#f3f3f3;border:1.5px solid #c8c8c8;border-radius:2px"></div>
<div class="t" style="left:3232.4px;top:1279.1px;color:#b4b4b4">Use log scale when mapping data to opacity</div>
<div class="t" style="left:3192.5px;top:1323.7px;font-weight:bold">Color Mapping Parameters</div>
<div class="a" style="left:3192.5px;top:1354.5px;width:628.5px;height:1.5px;background:#cfcfcf"></div>
<div class="t" style="left:3192.5px;top:1365.1px">Color</div>
<div class="t" style="left:3192.5px;top:1396.5px">Space</div>
<div class="a" style="left:3336.0px;top:1374.0px;width:485.0px;height:41.0px;background:linear-gradient(#fdfdfd,#f1f1f1);border:1.5px solid #c4c4c4;border-radius:3px"></div>
<div class="a" style="left:3787.0px;top:1391.5px;border-left:8px solid transparent;border-right:8px solid transparent;border-top:9px solid #484848"></div>
<div class="t" style="left:3341.5px;top:1380.5px">Diverging</div>
<div class="a" style="left:3192.5px;top:1433.0px;width:628.5px;height:39.5px;background:linear-gradient(#fdfdfd,#efefef);border:1.5px solid #c4c4c4;border-radius:3px"></div>
<div class="a" style="left:3196.0px;top:1438.0px;width:30.0px;height:30.0px;background:#ffff00;border:1px solid #999;border-radius:50%"></div>
<div class="t" style="left:3229.8px;top:1439.1px">Nan Color</div>
<div class="t" style="left:3192.5px;top:1480.5px">Nan</div>
<div class="t" style="left:3192.5px;top:1513.5px">Opacity</div>
<div class="a" style="left:3336.0px;top:1504.0px;width:194.0px;height:13.0px;background:#3d9ad6;border-radius:4px;border:1px solid #3080b8"></div>
<div class="a" style="left:3521.0px;top:1494.5px;width:26.0px;height:27.5px;background:linear-gradient(#fff,#f0f0f0);border:1.5px solid #c0c0c0;border-radius:3px"></div>
<div class="a" style="left:3561.0px;top:1489.0px;width:260.0px;height:41.0px;background:#fff;border:1.5px solid #c6c6c6;border-radius:2px"></div>
<div class="t" style="left:3566.6px;top:1496.8px">1</div>
<div class="t" style="left:3192.5px;top:1555.5px;font-weight:bold">Color Discretization</div>
<div class="a" style="left:3192.5px;top:1586.0px;width:628.5px;height:1.5px;background:#cfcfcf"></div>
<div class="a" style="left:3192.5px;top:1601.0px;width:27.5px;height:25.0px;background:#fff;border:1.5px solid #c8c8c8;border-radius:2px"></div>
<svg class="a" style="left:3192.5px;top:1601.0px" width="27" height="25" viewBox="0 0 26 26"><path d="M6 13 L11 20 L20 4" fill="none" stroke="#111" stroke-width="3"/></svg>
<div class="t" style="left:3232.4px;top:1599.1px">Discretize</div>
<div class="t" style="left:3192.5px;top:1640.5px">Number</div>
<div class="t" style="left:3192.5px;top:1673.5px">Of Table</div>
<div class="t" style="left:3192.5px;top:1706.5px">Values</div>
<div class="a" style="left:3336.0px;top:1680.0px;width:211.0px;height:13.0px;background:#e4e4e4;border-radius:4px;border:1px solid #c8c8c8"></div>
<div class="a" style="left:3336.0px;top:1680.0px;width:54.0px;height:13.0px;background:#3d9ad6;border-radius:4px;border:1px solid #3080b8"></div>
<div class="a" style="left:3383.0px;top:1670.0px;width:27.8px;height:28.0px;background:linear-gradient(#fff,#f0f0f0);border:1.5px solid #c0c0c0;border-radius:3px"></div>
<div class="a" style="left:3561.0px;top:1666.6px;width:260.0px;height:40.9px;background:#fff;border:1.5px solid #c6c6c6;border-radius:2px"></div>
<div class="t" style="left:3565.0px;top:1673.5px">256</div>
<div class="a" style="left:3192.5px;top:1750.6px;width:49.5px;height:43.0px;background:linear-gradient(#fdfdfd,#efefef);border:1.5px solid #c4c4c4;border-radius:3px"></div>
<svg class="a" style="left:3198.0px;top:1753.0px" width="38" height="38" viewBox="0 0 40 40"><path d="M30 14 a12 12 0 1 0 2 10" fill="none" stroke="#3a8ad0" stroke-width="6"/><path d="M24 6 l12 4 l-8 8z" fill="#3a8ad0"/></svg>
<div class="a" style="left:3245.5px;top:1750.6px;width:48.3px;height:43.0px;background:linear-gradient(#fdfdfd,#efefef);border:1.5px solid #c4c4c4;border-radius:3px"></div>
<svg class="a" style="left:3254.6px;top:1757.0px" width="30" height="30" viewBox="0 0 40 40"><path d="M12 26 h16 v4 h-16z M20 24 v-12 l-5 5 M20 12 l5 5" fill="none" stroke="#999" stroke-width="2"/></svg>
<div class="a" style="left:3297.5px;top:1750.6px;width:48.5px;height:43.0px;background:linear-gradient(#fdfdfd,#efefef);border:1.5px solid #c4c4c4;border-radius:3px"></div>
<svg class="a" style="left:3306.7px;top:1757.0px" width="30" height="30" viewBox="0 0 40 40"><path d="M12 26 h16 v4 h-16z M20 12 v12" fill="none" stroke="#999" stroke-width="2"/></svg>
<div class="a" style="left:3538.8px;top:1750.6px;width:229.8px;height:43.0px;background:linear-gradient(#fdfdfd,#efefef);border:1.5px solid #c4c4c4;border-radius:3px"></div>
<div class="t" style="left:3573.4px;top:1758.5px;color:#a8a8a8">Render Views</div>
<svg class="a" style="left:3550.0px;top:1760.0px" width="16" height="20" viewBox="0 0 16 20"><path d="M3 16 l9 -10" stroke="#aaa" stroke-width="3"/></svg>
<div class="a" style="left:3772.3px;top:1750.6px;width:48.7px;height:43.0px;background:linear-gradient(#e2e2e2,#d8d8d8);border:1.5px solid #c4c4c4;border-radius:3px"></div>
<svg class="a" style="left:3781.0px;top:1757.0px" width="30" height="30" viewBox="0 0 40 40"><path d="M12 26 h16 M20 12 l8 8" fill="none" stroke="#999" stroke-width="2"/></svg>
<div class="a" style="left:144.0px;top:2118.0px;width:3696.0px;height:42.0px;background:#eeeeee"></div>
<div class="a" style="left:2015.0px;top:2122.0px;width:1825.0px;height:38.0px;background:#ededed;border-top:1.5px solid #c8c8c8;border-left:1.5px solid #c8c8c8"></div>
<div class="a" style="left:1994.0px;top:2131.0px;width:18.5px;height:17.0px;background:#f4f4f4;border:1px solid #c8c8c8"></div>
<div class="a" style="left:2000.0px;top:2136.0px;width:7.0px;height:7.0px;background:#aaa"></div>
<svg class="a" style="left:0;top:0" width="3840" height="2160" viewBox="0 0 3840 2160">
<path fill="#36030c" stroke="#36030c" stroke-width="1.5" d="M1037 871 1035 865 1044 883 1045 888ZM2765 865 2763 871 2755 888 2756 883Z"/>
<path fill="#3c030c" stroke="#3c030c" stroke-width="1.5" d="M1035 865 1042 851 1050 869 1044 883ZM2758 851 2765 865 2756 883 2750 869Z"/>
<path fill="#42030f" stroke="#42030f" stroke-width="1.5" d="M1042 851 1064 836 1072 855 1050 869ZM2736 836 2758 851 2750 869 2728 855Z"/>
<path fill="#48060f" stroke="#48060f" stroke-width="1.5" d="M1064 836 1072 832 1081 828 1091 824 1103 821 1111 840 1072 855ZM2697 821 2709 824 2719 828 2728 832 2736 836 2728 855 2689 840Z"/>
<path fill="#4e0612" stroke="#4e0612" stroke-width="1.5" d="M1103 821 1115 817 1129 813 1144 810 1160 806 1168 827 1111 840ZM2640 806 2656 810 2671 813 2685 817 2697 821 2689 840 2632 827Z"/>
<path fill="#540612" stroke="#540612" stroke-width="1.5" d="M1160 806 1177 803 1195 799 1214 796 1235 793 1242 814 1168 827ZM2565 793 2586 796 2605 799 2623 803 2640 806 2632 827 2558 814Z"/>
<path fill="#5a0615" stroke="#5a0615" stroke-width="1.5" d="M1235 793 1256 790 1279 786 1302 783 1327 780 1334 802 1242 814ZM2473 780 2498 783 2521 786 2544 790 2565 793 2558 814 2466 802Z"/>
<path fill="#5d0615" stroke="#5d0615" stroke-width="1.5" d="M1327 780 1353 778 1379 775 1407 772 1435 770 1441 792 1334 802ZM2365 770 2393 772 2421 775 2447 778 2473 780 2466 802 2359 792Z"/>
<path fill="#600615" stroke="#600615" stroke-width="1.5" d="M1435 770 1465 768 1495 765 1526 763 1557 762 1562 784 1441 792ZM2243 762 2274 763 2305 765 2335 768 2365 770 2359 792 2238 784Z"/>
<path fill="#630615" stroke="#630615" stroke-width="1.5" d="M1557 762 1590 760 1623 758 1656 757 1690 756 1693 779 1562 784ZM2110 756 2144 757 2177 758 2210 760 2243 762 2238 784 2107 779Z"/>
<path fill="#660618" stroke="#660618" stroke-width="1.5" d="M1690 756 1724 755 1759 754 1794 753 1829 753 1830 776 1693 779ZM1829 753 1865 753 1900 752 1935 753 1971 753 1970 776 1830 776ZM1971 753 2006 753 2041 754 2076 755 2110 756 2107 779 1970 776Z"/>
<path fill="#39090f" stroke="#39090f" stroke-width="1.5" d="M1045 888 1044 883 1052 900 1053 905ZM2756 883 2755 888 2747 905 2748 900Z"/>
<path fill="#3f090f" stroke="#3f090f" stroke-width="1.5" d="M1044 883 1050 869 1059 887 1052 900ZM2750 869 2756 883 2748 900 2741 887Z"/>
<path fill="#450912" stroke="#450912" stroke-width="1.5" d="M1050 869 1072 855 1081 873 1059 887ZM2728 855 2750 869 2741 887 2719 873Z"/>
<path fill="#4e0c12" stroke="#4e0c12" stroke-width="1.5" d="M1072 855 1111 840 1120 860 1081 873ZM2689 840 2728 855 2719 873 2680 860Z"/>
<path fill="#540c15" stroke="#540c15" stroke-width="1.5" d="M1111 840 1168 827 1176 847 1120 860ZM2632 827 2689 840 2680 860 2624 847Z"/>
<path fill="#5a0c15" stroke="#5a0c15" stroke-width="1.5" d="M1168 827 1242 814 1250 835 1176 847ZM2558 814 2632 827 2624 847 2550 835Z"/>
<path fill="#5d0c18" stroke="#5d0c18" stroke-width="1.5" d="M1242 814 1334 802 1340 824 1250 835ZM2466 802 2558 814 2550 835 2460 824Z"/>
<path fill="#630c18" stroke="#630c18" stroke-width="1.5" d="M1334 802 1441 792 1446 815 1340 824ZM2359 792 2466 802 2460 824 2354 815Z"/>
<path fill="#660f18" stroke="#660f18" stroke-width="1.5" d="M1441 792 1562 784 1566 807 1446 815ZM2238 784 2359 792 2354 815 2234 807Z"/>
<path fill="#690f1b" stroke="#690f1b" stroke-width="1.5" d="M1562 784 1693 779 1695 802 1566 807ZM1693 779 1830 776 1831 799 1695 802ZM1830 776 1970 776 1969 799 1831 799ZM1970 776 2107 779 2105 802 1969 799ZM2107 779 2238 784 2234 807 2105 802Z"/>
<path fill="#3c0c0f" stroke="#3c0c0f" stroke-width="1.5" d="M1053 905 1052 900 1060 917 1061 922ZM2748 900 2747 905 2739 922 2740 917Z"/>
<path fill="#420f12" stroke="#420f12" stroke-width="1.5" d="M1052 900 1059 887 1067 905 1060 917ZM2741 887 2748 900 2740 917 2733 905Z"/>
<path fill="#480f15" stroke="#480f15" stroke-width="1.5" d="M1059 887 1081 873 1089 892 1067 905ZM2719 873 2741 887 2733 905 2711 892Z"/>
<path fill="#511215" stroke="#511215" stroke-width="1.5" d="M1081 873 1120 860 1128 879 1089 892ZM2680 860 2719 873 2711 892 2672 879Z"/>
<path fill="#571218" stroke="#571218" stroke-width="1.5" d="M1120 860 1176 847 1184 867 1128 879ZM2624 847 2680 860 2672 879 2616 867Z"/>
<path fill="#5d1218" stroke="#5d1218" stroke-width="1.5" d="M1176 847 1250 835 1257 856 1184 867ZM2550 835 2624 847 2616 867 2543 856Z"/>
<path fill="#63151b" stroke="#63151b" stroke-width="1.5" d="M1250 835 1340 824 1346 845 1257 856ZM2460 824 2550 835 2543 856 2454 845Z"/>
<path fill="#66151b" stroke="#66151b" stroke-width="1.5" d="M1340 824 1446 815 1451 837 1346 845ZM2354 815 2460 824 2454 845 2349 837Z"/>
<path fill="#69151e" stroke="#69151e" stroke-width="1.5" d="M1446 815 1566 807 1569 830 1451 837ZM2234 807 2354 815 2349 837 2231 830Z"/>
<path fill="#6c151e" stroke="#6c151e" stroke-width="1.5" d="M1566 807 1695 802 1697 825 1569 830ZM2105 802 2234 807 2231 830 2103 825Z"/>
<path fill="#6f181e" stroke="#6f181e" stroke-width="1.5" d="M1695 802 1831 799 1832 822 1697 825ZM1831 799 1969 799 1968 822 1832 822ZM1969 799 2105 802 2103 825 1968 822Z"/>
<path fill="#3f1212" stroke="#3f1212" stroke-width="1.5" d="M1061 922 1060 917 1067 935 1068 939ZM2740 917 2739 922 2732 939 2733 935Z"/>
<path fill="#451215" stroke="#451215" stroke-width="1.5" d="M1060 917 1067 905 1074 923 1067 935ZM2733 905 2740 917 2733 935 2726 923Z"/>
<path fill="#4e1518" stroke="#4e1518" stroke-width="1.5" d="M1067 905 1089 892 1097 911 1074 923ZM2711 892 2733 905 2726 923 2703 911Z"/>
<path fill="#541818" stroke="#541818" stroke-width="1.5" d="M1089 892 1128 879 1135 899 1097 911ZM2672 879 2711 892 2703 911 2665 899Z"/>
<path fill="#5a181b" stroke="#5a181b" stroke-width="1.5" d="M1128 879 1184 867 1191 887 1135 899ZM2616 867 2672 879 2665 899 2609 887Z"/>
<path fill="#601b1e" stroke="#601b1e" stroke-width="1.5" d="M1184 867 1257 856 1263 877 1191 887ZM2543 856 2616 867 2609 887 2537 877Z"/>
<path fill="#661b1e" stroke="#661b1e" stroke-width="1.5" d="M1257 856 1346 845 1352 867 1263 877ZM2454 845 2543 856 2537 877 2448 867Z"/>
<path fill="#6c1e21" stroke="#6c1e21" stroke-width="1.5" d="M1346 845 1451 837 1456 858 1352 867ZM2349 837 2454 845 2448 867 2344 858Z"/>
<path fill="#6f1e21" stroke="#6f1e21" stroke-width="1.5" d="M1451 837 1569 830 1573 852 1456 858ZM2231 830 2349 837 2344 858 2227 852Z"/>
<path fill="#721e21" stroke="#721e21" stroke-width="1.5" d="M1569 830 1697 825 1700 847 1573 852ZM1697 825 1832 822 1833 845 1700 847ZM1968 822 2103 825 2100 847 1967 845ZM2103 825 2231 830 2227 852 2100 847Z"/>
<path fill="#752121" stroke="#752121" stroke-width="1.5" d="M1832 822 1968 822 1967 845 1833 845Z"/>
<path fill="#421515" stroke="#421515" stroke-width="1.5" d="M1068 939 1067 935 1075 952 1075 956ZM2733 935 2732 939 2725 956 2725 952Z"/>
<path fill="#481818" stroke="#481818" stroke-width="1.5" d="M1067 935 1074 923 1082 941 1075 952ZM2726 923 2733 935 2725 952 2718 941Z"/>
<path fill="#511b1b" stroke="#511b1b" stroke-width="1.5" d="M1074 923 1097 911 1104 929 1082 941ZM2703 911 2726 923 2718 941 2696 929Z"/>
<path fill="#5a1e1b" stroke="#5a1e1b" stroke-width="1.5" d="M1097 911 1135 899 1143 918 1104 929ZM2665 899 2703 911 2696 929 2657 918Z"/>
<path fill="#60211e" stroke="#60211e" stroke-width="1.5" d="M1135 899 1191 887 1198 907 1143 918ZM2609 887 2665 899 2657 918 2602 907Z"/>
<path fill="#662121" stroke="#662121" stroke-width="1.5" d="M1191 887 1263 877 1270 897 1198 907ZM2537 877 2609 887 2602 907 2530 897Z"/>
<path fill="#6c2421" stroke="#6c2421" stroke-width="1.5" d="M1263 877 1352 867 1358 888 1270 897ZM2448 867 2537 877 2530 897 2442 888Z"/>
<path fill="#6f2724" stroke="#6f2724" stroke-width="1.5" d="M1352 867 1456 858 1461 880 1358 888ZM2344 858 2448 867 2442 888 2339 880Z"/>
<path fill="#752724" stroke="#752724" stroke-width="1.5" d="M1456 858 1573 852 1577 874 1461 880ZM2227 852 2344 858 2339 880 2223 874Z"/>
<path fill="#782724" stroke="#782724" stroke-width="1.5" d="M1573 852 1700 847 1702 870 1577 874ZM2100 847 2227 852 2223 874 2098 870Z"/>
<path fill="#782727" stroke="#782727" stroke-width="1.5" d="M1700 847 1833 845 1833 867 1702 870ZM1833 845 1967 845 1967 867 1833 867ZM1967 845 2100 847 2098 870 1967 867Z"/>
<path fill="#451b18" stroke="#451b18" stroke-width="1.5" d="M1075 956 1075 952 1081 969 1082 973ZM2725 952 2725 956 2718 973 2719 969Z"/>
<path fill="#4e1e1b" stroke="#4e1e1b" stroke-width="1.5" d="M1075 952 1082 941 1089 959 1081 969ZM2718 941 2725 952 2719 969 2711 959Z"/>
<path fill="#57211e" stroke="#57211e" stroke-width="1.5" d="M1082 941 1104 929 1111 948 1089 959ZM2696 929 2718 941 2711 959 2689 948Z"/>
<path fill="#5d241e" stroke="#5d241e" stroke-width="1.5" d="M1104 929 1143 918 1150 938 1111 948ZM2657 918 2696 929 2689 948 2650 938Z"/>
<path fill="#662721" stroke="#662721" stroke-width="1.5" d="M1143 918 1198 907 1204 927 1150 938ZM2602 907 2657 918 2650 938 2596 927Z"/>
<path fill="#6c2a24" stroke="#6c2a24" stroke-width="1.5" d="M1198 907 1270 897 1276 918 1204 927ZM2530 897 2602 907 2596 927 2524 918Z"/>
<path fill="#722d27" stroke="#722d27" stroke-width="1.5" d="M1270 897 1358 888 1363 909 1276 918ZM2442 888 2530 897 2524 918 2437 909Z"/>
<path fill="#752d27" stroke="#752d27" stroke-width="1.5" d="M1358 888 1461 880 1465 902 1363 909ZM2339 880 2442 888 2437 909 2335 902Z"/>
<path fill="#7b302a" stroke="#7b302a" stroke-width="1.5" d="M1461 880 1577 874 1580 896 1465 902ZM2223 874 2339 880 2335 902 2220 896Z"/>
<path fill="#7e302a" stroke="#7e302a" stroke-width="1.5" d="M1577 874 1702 870 1704 892 1580 896ZM1702 870 1833 867 1834 890 1704 892ZM1967 867 2098 870 2096 892 1966 890ZM2098 870 2223 874 2220 896 2096 892Z"/>
<path fill="#7e332a" stroke="#7e332a" stroke-width="1.5" d="M1833 867 1967 867 1966 890 1834 890Z"/>
<path fill="#48211b" stroke="#48211b" stroke-width="1.5" d="M1082 973 1081 969 1088 986 1089 989ZM2719 969 2718 973 2711 989 2712 986Z"/>
<path fill="#51241e" stroke="#51241e" stroke-width="1.5" d="M1081 969 1089 959 1096 977 1088 986ZM2711 959 2719 969 2712 986 2704 977Z"/>
<path fill="#5a2721" stroke="#5a2721" stroke-width="1.5" d="M1089 959 1111 948 1118 967 1096 977ZM2689 948 2711 959 2704 977 2682 967Z"/>
<path fill="#632a24" stroke="#632a24" stroke-width="1.5" d="M1111 948 1150 938 1156 957 1118 967ZM2650 938 2689 948 2682 967 2644 957Z"/>
<path fill="#693024" stroke="#693024" stroke-width="1.5" d="M1150 938 1204 927 1211 947 1156 957ZM2596 927 2650 938 2644 957 2589 947Z"/>
<path fill="#723327" stroke="#723327" stroke-width="1.5" d="M1204 927 1276 918 1282 938 1211 947ZM2524 918 2596 927 2589 947 2518 938Z"/>
<path fill="#75332a" stroke="#75332a" stroke-width="1.5" d="M1276 918 1363 909 1368 930 1282 938ZM2437 909 2524 918 2518 938 2432 930Z"/>
<path fill="#7b362d" stroke="#7b362d" stroke-width="1.5" d="M1363 909 1465 902 1470 923 1368 930ZM2335 902 2437 909 2432 930 2330 923Z"/>
<path fill="#7e392d" stroke="#7e392d" stroke-width="1.5" d="M1465 902 1580 896 1583 918 1470 923ZM2220 896 2335 902 2330 923 2217 918Z"/>
<path fill="#81392d" stroke="#81392d" stroke-width="1.5" d="M1580 896 1704 892 1706 914 1583 918ZM2096 892 2220 896 2217 918 2094 914Z"/>
<path fill="#843930" stroke="#843930" stroke-width="1.5" d="M1704 892 1834 890 1835 912 1706 914ZM1834 890 1966 890 1965 912 1835 912ZM1966 890 2096 892 2094 914 1965 912Z"/>
<path fill="#4b241e" stroke="#4b241e" stroke-width="1.5" d="M1089 989 1088 986 1094 1004 1095 1006ZM2712 986 2711 989 2705 1006 2706 1004Z"/>
<path fill="#542721" stroke="#542721" stroke-width="1.5" d="M1088 986 1096 977 1102 994 1094 1004ZM2704 977 2712 986 2706 1004 2698 994Z"/>
<path fill="#5d2d24" stroke="#5d2d24" stroke-width="1.5" d="M1096 977 1118 967 1124 985 1102 994ZM2682 967 2704 977 2698 994 2676 985Z"/>
<path fill="#663027" stroke="#663027" stroke-width="1.5" d="M1118 967 1156 957 1163 976 1124 985ZM2644 957 2682 967 2676 985 2637 976Z"/>
<path fill="#6f332a" stroke="#6f332a" stroke-width="1.5" d="M1156 957 1211 947 1217 967 1163 976ZM2589 947 2644 957 2637 976 2583 967Z"/>
<path fill="#75392d" stroke="#75392d" stroke-width="1.5" d="M1211 947 1282 938 1287 959 1217 967ZM2518 938 2589 947 2583 967 2513 959Z"/>
<path fill="#7b3930" stroke="#7b3930" stroke-width="1.5" d="M1282 938 1368 930 1373 951 1287 959ZM2432 930 2518 938 2513 959 2427 951Z"/>
<path fill="#813c30" stroke="#813c30" stroke-width="1.5" d="M1368 930 1470 923 1474 945 1373 951ZM2330 923 2432 930 2427 951 2326 945Z"/>
<path fill="#843f33" stroke="#843f33" stroke-width="1.5" d="M1470 923 1583 918 1586 939 1474 945ZM2217 918 2330 923 2326 945 2214 939Z"/>
<path fill="#873f33" stroke="#873f33" stroke-width="1.5" d="M1583 918 1706 914 1708 936 1586 939ZM2094 914 2217 918 2214 939 2092 936Z"/>
<path fill="#8a4233" stroke="#8a4233" stroke-width="1.5" d="M1706 914 1835 912 1835 934 1708 936ZM1835 912 1965 912 1965 934 1835 934ZM1965 912 2094 914 2092 936 1965 934Z"/>
<path fill="#512a21" stroke="#512a21" stroke-width="1.5" d="M1095 1006 1094 1004 1100 1021 1101 1023ZM2706 1004 2705 1006 2699 1023 2700 1021Z"/>
<path fill="#572d24" stroke="#572d24" stroke-width="1.5" d="M1094 1004 1102 994 1108 1012 1100 1021ZM2698 994 2706 1004 2700 1021 2692 1012Z"/>
<path fill="#633327" stroke="#633327" stroke-width="1.5" d="M1102 994 1124 985 1131 1004 1108 1012ZM2676 985 2698 994 2692 1012 2669 1004Z"/>
<path fill="#6c362a" stroke="#6c362a" stroke-width="1.5" d="M1124 985 1163 976 1169 995 1131 1004ZM2637 976 2676 985 2669 1004 2631 995Z"/>
<path fill="#723930" stroke="#723930" stroke-width="1.5" d="M1163 976 1217 967 1223 987 1169 995ZM2583 967 2637 976 2631 995 2577 987Z"/>
<path fill="#783f30" stroke="#783f30" stroke-width="1.5" d="M1217 967 1287 959 1293 979 1223 987ZM2513 959 2583 967 2577 987 2507 979Z"/>
<path fill="#7e4233" stroke="#7e4233" stroke-width="1.5" d="M1287 959 1373 951 1378 972 1293 979ZM2427 951 2513 959 2507 979 2422 972Z"/>
<path fill="#844236" stroke="#844236" stroke-width="1.5" d="M1373 951 1474 945 1477 966 1378 972ZM2326 945 2427 951 2422 972 2323 966Z"/>
<path fill="#8a4539" stroke="#8a4539" stroke-width="1.5" d="M1474 945 1586 939 1589 961 1477 966ZM2214 939 2326 945 2323 966 2211 961Z"/>
<path fill="#8d4839" stroke="#8d4839" stroke-width="1.5" d="M1586 939 1708 936 1710 958 1589 961ZM1708 936 1835 934 1836 956 1710 958ZM1835 934 1965 934 1964 956 1836 956ZM1965 934 2092 936 2090 958 1964 956ZM2092 936 2214 939 2211 961 2090 958Z"/>
<path fill="#542d24" stroke="#542d24" stroke-width="1.5" d="M1101 1023 1100 1021 1106 1038 1106 1040ZM2700 1021 2699 1023 2694 1040 2694 1038Z"/>
<path fill="#5d3327" stroke="#5d3327" stroke-width="1.5" d="M1100 1021 1108 1012 1114 1030 1106 1038ZM2692 1012 2700 1021 2694 1038 2686 1030Z"/>
<path fill="#66362d" stroke="#66362d" stroke-width="1.5" d="M1108 1012 1131 1004 1136 1022 1114 1030ZM2669 1004 2692 1012 2686 1030 2664 1022Z"/>
<path fill="#6f3c30" stroke="#6f3c30" stroke-width="1.5" d="M1131 1004 1169 995 1174 1014 1136 1022ZM2631 995 2669 1004 2664 1022 2626 1014Z"/>
<path fill="#783f33" stroke="#783f33" stroke-width="1.5" d="M1169 995 1223 987 1228 1006 1174 1014ZM2577 987 2631 995 2626 1014 2572 1006Z"/>
<path fill="#7e4536" stroke="#7e4536" stroke-width="1.5" d="M1223 987 1293 979 1298 999 1228 1006ZM2507 979 2577 987 2572 1006 2502 999Z"/>
<path fill="#844839" stroke="#844839" stroke-width="1.5" d="M1293 979 1378 972 1382 992 1298 999ZM2422 972 2507 979 2502 999 2418 992Z"/>
<path fill="#8a4b3c" stroke="#8a4b3c" stroke-width="1.5" d="M1378 972 1477 966 1481 987 1382 992ZM2323 966 2422 972 2418 992 2319 987Z"/>
<path fill="#8d4e3c" stroke="#8d4e3c" stroke-width="1.5" d="M1477 966 1589 961 1592 982 1481 987ZM2211 961 2323 966 2319 987 2208 982Z"/>
<path fill="#904e3f" stroke="#904e3f" stroke-width="1.5" d="M1589 961 1710 958 1711 979 1592 982ZM2090 958 2211 961 2208 982 2089 979Z"/>
<path fill="#934e3f" stroke="#934e3f" stroke-width="1.5" d="M1710 958 1836 956 1836 978 1711 979ZM1964 956 2090 958 2089 979 1964 978Z"/>
<path fill="#93513f" stroke="#93513f" stroke-width="1.5" d="M1836 956 1964 956 1964 978 1836 978Z"/>
<path fill="#573327" stroke="#573327" stroke-width="1.5" d="M1106 1040 1106 1038 1111 1055 1112 1057ZM2694 1038 2694 1040 2688 1057 2689 1055Z"/>
<path fill="#60362d" stroke="#60362d" stroke-width="1.5" d="M1106 1038 1114 1030 1119 1048 1111 1055ZM2686 1030 2694 1038 2689 1055 2681 1048Z"/>
<path fill="#6c3c30" stroke="#6c3c30" stroke-width="1.5" d="M1114 1030 1136 1022 1142 1040 1119 1048ZM2664 1022 2686 1030 2681 1048 2658 1040Z"/>
<path fill="#754236" stroke="#754236" stroke-width="1.5" d="M1136 1022 1174 1014 1180 1033 1142 1040ZM2626 1014 2664 1022 2658 1040 2620 1033Z"/>
<path fill="#7b4839" stroke="#7b4839" stroke-width="1.5" d="M1174 1014 1228 1006 1233 1026 1180 1033ZM2572 1006 2626 1014 2620 1033 2567 1026Z"/>
<path fill="#844b3c" stroke="#844b3c" stroke-width="1.5" d="M1228 1006 1298 999 1302 1019 1233 1026ZM2502 999 2572 1006 2567 1026 2498 1019Z"/>
<path fill="#8a4e3f" stroke="#8a4e3f" stroke-width="1.5" d="M1298 999 1382 992 1386 1013 1302 1019ZM2418 992 2502 999 2498 1019 2414 1013Z"/>
<path fill="#905142" stroke="#905142" stroke-width="1.5" d="M1382 992 1481 987 1484 1008 1386 1013ZM2319 987 2418 992 2414 1013 2316 1008Z"/>
<path fill="#935442" stroke="#935442" stroke-width="1.5" d="M1481 987 1592 982 1594 1004 1484 1008ZM2208 982 2319 987 2316 1008 2206 1004Z"/>
<path fill="#965745" stroke="#965745" stroke-width="1.5" d="M1592 982 1711 979 1713 1001 1594 1004ZM2089 979 2208 982 2206 1004 2087 1001Z"/>
<path fill="#995745" stroke="#995745" stroke-width="1.5" d="M1711 979 1836 978 1837 999 1713 1001ZM1836 978 1964 978 1963 999 1837 999ZM1964 978 2089 979 2087 1001 1963 999Z"/>
<path fill="#5a362d" stroke="#5a362d" stroke-width="1.5" d="M1112 1057 1111 1055 1116 1072 1116 1074ZM2689 1055 2688 1057 2684 1074 2684 1072Z"/>
<path fill="#633c30" stroke="#633c30" stroke-width="1.5" d="M1111 1055 1119 1048 1125 1066 1116 1072ZM2681 1048 2689 1055 2684 1072 2675 1066Z"/>
<path fill="#6f4236" stroke="#6f4236" stroke-width="1.5" d="M1119 1048 1142 1040 1147 1059 1125 1066ZM2658 1040 2681 1048 2675 1066 2653 1059Z"/>
<path fill="#784839" stroke="#784839" stroke-width="1.5" d="M1142 1040 1180 1033 1185 1052 1147 1059ZM2620 1033 2658 1040 2653 1059 2615 1052Z"/>
<path fill="#814e3f" stroke="#814e3f" stroke-width="1.5" d="M1180 1033 1233 1026 1238 1045 1185 1052ZM2567 1026 2620 1033 2615 1052 2562 1045Z"/>
<path fill="#875142" stroke="#875142" stroke-width="1.5" d="M1233 1026 1302 1019 1307 1039 1238 1045ZM2498 1019 2567 1026 2562 1045 2493 1039Z"/>
<path fill="#905745" stroke="#905745" stroke-width="1.5" d="M1302 1019 1386 1013 1390 1033 1307 1039ZM2414 1013 2498 1019 2493 1039 2410 1033Z"/>
<path fill="#935a48" stroke="#935a48" stroke-width="1.5" d="M1386 1013 1484 1008 1488 1029 1390 1033ZM2316 1008 2414 1013 2410 1033 2312 1029Z"/>
<path fill="#995d48" stroke="#995d48" stroke-width="1.5" d="M1484 1008 1594 1004 1596 1025 1488 1029ZM2206 1004 2316 1008 2312 1029 2204 1025Z"/>
<path fill="#9c5d4b" stroke="#9c5d4b" stroke-width="1.5" d="M1594 1004 1713 1001 1714 1022 1596 1025ZM2087 1001 2206 1004 2204 1025 2086 1022Z"/>
<path fill="#9f604b" stroke="#9f604b" stroke-width="1.5" d="M1713 1001 1837 999 1837 1021 1714 1022ZM1837 999 1963 999 1963 1021 1837 1021ZM1963 999 2087 1001 2086 1022 1963 1021Z"/>
<path fill="#603c30" stroke="#603c30" stroke-width="1.5" d="M1116 1074 1116 1072 1121 1089 1121 1091ZM2684 1072 2684 1074 2679 1091 2679 1089Z"/>
<path fill="#694236" stroke="#694236" stroke-width="1.5" d="M1116 1072 1125 1066 1129 1083 1121 1089ZM2675 1066 2684 1072 2679 1089 2671 1083Z"/>
<path fill="#75483c" stroke="#75483c" stroke-width="1.5" d="M1125 1066 1147 1059 1152 1077 1129 1083ZM2653 1059 2675 1066 2671 1083 2648 1077Z"/>
<path fill="#7e4e3f" stroke="#7e4e3f" stroke-width="1.5" d="M1147 1059 1185 1052 1189 1071 1152 1077ZM2615 1052 2653 1059 2648 1077 2611 1071Z"/>
<path fill="#875445" stroke="#875445" stroke-width="1.5" d="M1185 1052 1238 1045 1242 1065 1189 1071ZM2562 1045 2615 1052 2611 1071 2558 1065Z"/>
<path fill="#8d5a48" stroke="#8d5a48" stroke-width="1.5" d="M1238 1045 1307 1039 1311 1059 1242 1065ZM2493 1039 2562 1045 2558 1065 2489 1059Z"/>
<path fill="#965d4b" stroke="#965d4b" stroke-width="1.5" d="M1307 1039 1390 1033 1394 1054 1311 1059ZM2410 1033 2493 1039 2489 1059 2406 1054Z"/>
<path fill="#99604e" stroke="#99604e" stroke-width="1.5" d="M1390 1033 1488 1029 1491 1049 1394 1054ZM2312 1029 2410 1033 2406 1054 2309 1049Z"/>
<path fill="#9f6351" stroke="#9f6351" stroke-width="1.5" d="M1488 1029 1596 1025 1599 1046 1491 1049ZM2204 1025 2312 1029 2309 1049 2201 1046Z"/>
<path fill="#a26651" stroke="#a26651" stroke-width="1.5" d="M1596 1025 1714 1022 1716 1044 1599 1046ZM2086 1022 2204 1025 2201 1046 2084 1044Z"/>
<path fill="#a56654" stroke="#a56654" stroke-width="1.5" d="M1714 1022 1837 1021 1838 1042 1716 1044ZM1963 1021 2086 1022 2084 1044 1962 1042Z"/>
<path fill="#a56954" stroke="#a56954" stroke-width="1.5" d="M1837 1021 1963 1021 1962 1042 1838 1042Z"/>
<path fill="#634236" stroke="#634236" stroke-width="1.5" d="M1121 1091 1121 1089 1125 1107 1125 1108ZM2679 1089 2679 1091 2675 1108 2675 1107Z"/>
<path fill="#6c4839" stroke="#6c4839" stroke-width="1.5" d="M1121 1089 1129 1083 1134 1101 1125 1107ZM2671 1083 2679 1089 2675 1107 2666 1101Z"/>
<path fill="#784e3f" stroke="#784e3f" stroke-width="1.5" d="M1129 1083 1152 1077 1156 1095 1134 1101ZM2648 1077 2671 1083 2666 1101 2644 1095Z"/>
<path fill="#815445" stroke="#815445" stroke-width="1.5" d="M1152 1077 1189 1071 1193 1089 1156 1095ZM2611 1071 2648 1077 2644 1095 2607 1089Z"/>
<path fill="#8a5a4b" stroke="#8a5a4b" stroke-width="1.5" d="M1189 1071 1242 1065 1246 1084 1193 1089ZM2558 1065 2611 1071 2607 1089 2554 1084Z"/>
<path fill="#93604e" stroke="#93604e" stroke-width="1.5" d="M1242 1065 1311 1059 1314 1079 1246 1084ZM2489 1059 2558 1065 2554 1084 2486 1079Z"/>
<path fill="#996351" stroke="#996351" stroke-width="1.5" d="M1311 1059 1394 1054 1397 1074 1314 1079ZM2406 1054 2489 1059 2486 1079 2403 1074Z"/>
<path fill="#9f6954" stroke="#9f6954" stroke-width="1.5" d="M1394 1054 1491 1049 1493 1070 1397 1074ZM2309 1049 2406 1054 2403 1074 2307 1070Z"/>
<path fill="#a26c57" stroke="#a26c57" stroke-width="1.5" d="M1491 1049 1599 1046 1601 1067 1493 1070ZM2201 1046 2309 1049 2307 1070 2199 1067Z"/>
<path fill="#a56c5a" stroke="#a56c5a" stroke-width="1.5" d="M1599 1046 1716 1044 1717 1065 1601 1067ZM2084 1044 2201 1046 2199 1067 2083 1065Z"/>
<path fill="#a86f5a" stroke="#a86f5a" stroke-width="1.5" d="M1716 1044 1838 1042 1838 1064 1717 1065ZM1838 1042 1962 1042 1962 1064 1838 1064ZM1962 1042 2084 1044 2083 1065 1962 1064Z"/>
<path fill="#664539" stroke="#664539" stroke-width="1.5" d="M1125 1108 1125 1107 1129 1124 1129 1125ZM2675 1107 2675 1108 2671 1125 2671 1124Z"/>
<path fill="#6f4e3f" stroke="#6f4e3f" stroke-width="1.5" d="M1125 1107 1134 1101 1138 1119 1129 1124ZM2666 1101 2675 1107 2671 1124 2662 1119Z"/>
<path fill="#7b5445" stroke="#7b5445" stroke-width="1.5" d="M1134 1101 1156 1095 1160 1113 1138 1119ZM2644 1095 2666 1101 2662 1119 2640 1113Z"/>
<path fill="#875d4b" stroke="#875d4b" stroke-width="1.5" d="M1156 1095 1193 1089 1197 1108 1160 1113ZM2607 1089 2644 1095 2640 1113 2603 1108Z"/>
<path fill="#8d6351" stroke="#8d6351" stroke-width="1.5" d="M1193 1089 1246 1084 1250 1103 1197 1108ZM2554 1084 2607 1089 2603 1108 2550 1103Z"/>
<path fill="#966654" stroke="#966654" stroke-width="1.5" d="M1246 1084 1314 1079 1318 1098 1250 1103ZM2486 1079 2554 1084 2550 1103 2482 1098Z"/>
<path fill="#9c6c5a" stroke="#9c6c5a" stroke-width="1.5" d="M1314 1079 1397 1074 1400 1094 1318 1098ZM2403 1074 2486 1079 2482 1098 2400 1094Z"/>
<path fill="#a26f5d" stroke="#a26f5d" stroke-width="1.5" d="M1397 1074 1493 1070 1496 1091 1400 1094ZM2307 1070 2403 1074 2400 1094 2304 1091Z"/>
<path fill="#a87260" stroke="#a87260" stroke-width="1.5" d="M1493 1070 1601 1067 1602 1088 1496 1091ZM2199 1067 2307 1070 2304 1091 2198 1088Z"/>
<path fill="#ab7560" stroke="#ab7560" stroke-width="1.5" d="M1601 1067 1717 1065 1718 1086 1602 1088ZM2083 1065 2199 1067 2198 1088 2082 1086Z"/>
<path fill="#ab7563" stroke="#ab7563" stroke-width="1.5" d="M1717 1065 1838 1064 1839 1085 1718 1086ZM1838 1064 1962 1064 1961 1085 1839 1085ZM1962 1064 2083 1065 2082 1086 1961 1085Z"/>
<path fill="#694b3f" stroke="#694b3f" stroke-width="1.5" d="M1129 1125 1129 1124 1133 1141 1133 1142ZM2671 1124 2671 1125 2667 1142 2667 1141Z"/>
<path fill="#755145" stroke="#755145" stroke-width="1.5" d="M1129 1124 1138 1119 1141 1136 1133 1141ZM2662 1119 2671 1124 2667 1141 2659 1136Z"/>
<path fill="#815a4e" stroke="#815a4e" stroke-width="1.5" d="M1138 1119 1160 1113 1164 1131 1141 1136ZM2640 1113 2662 1119 2659 1136 2636 1131Z"/>
<path fill="#8a6354" stroke="#8a6354" stroke-width="1.5" d="M1160 1113 1197 1108 1201 1127 1164 1131ZM2603 1108 2640 1113 2636 1131 2599 1127Z"/>
<path fill="#936957" stroke="#936957" stroke-width="1.5" d="M1197 1108 1250 1103 1253 1122 1201 1127ZM2550 1103 2603 1108 2599 1127 2547 1122Z"/>
<path fill="#996f5d" stroke="#996f5d" stroke-width="1.5" d="M1250 1103 1318 1098 1321 1118 1253 1122ZM2482 1098 2550 1103 2547 1122 2479 1118Z"/>
<path fill="#a27260" stroke="#a27260" stroke-width="1.5" d="M1318 1098 1400 1094 1403 1114 1321 1118ZM2400 1094 2482 1098 2479 1118 2397 1114Z"/>
<path fill="#a87863" stroke="#a87863" stroke-width="1.5" d="M1400 1094 1496 1091 1498 1111 1403 1114ZM2304 1091 2400 1094 2397 1114 2302 1111Z"/>
<path fill="#ab7b66" stroke="#ab7b66" stroke-width="1.5" d="M1496 1091 1602 1088 1604 1109 1498 1111ZM2198 1088 2304 1091 2302 1111 2196 1109Z"/>
<path fill="#ae7b69" stroke="#ae7b69" stroke-width="1.5" d="M1602 1088 1718 1086 1719 1107 1604 1109ZM2082 1086 2198 1088 2196 1109 2081 1107Z"/>
<path fill="#b17e69" stroke="#b17e69" stroke-width="1.5" d="M1718 1086 1839 1085 1839 1106 1719 1107ZM1839 1085 1961 1085 1961 1106 1839 1106ZM1961 1085 2082 1086 2081 1107 1961 1106Z"/>
<path fill="#6c5145" stroke="#6c5145" stroke-width="1.5" d="M1133 1142 1133 1141 1136 1158 1136 1159ZM2667 1141 2667 1142 2664 1159 2664 1158Z"/>
<path fill="#78574b" stroke="#78574b" stroke-width="1.5" d="M1133 1141 1141 1136 1145 1154 1136 1158ZM2659 1136 2667 1141 2664 1158 2655 1154Z"/>
<path fill="#846054" stroke="#846054" stroke-width="1.5" d="M1141 1136 1164 1131 1167 1150 1145 1154ZM2636 1131 2659 1136 2655 1154 2633 1150Z"/>
<path fill="#8d695a" stroke="#8d695a" stroke-width="1.5" d="M1164 1131 1201 1127 1204 1145 1167 1150ZM2599 1127 2636 1131 2633 1150 2596 1145Z"/>
<path fill="#966f60" stroke="#966f60" stroke-width="1.5" d="M1201 1127 1253 1122 1256 1142 1204 1145ZM2547 1122 2599 1127 2596 1145 2544 1142Z"/>
<path fill="#9f7566" stroke="#9f7566" stroke-width="1.5" d="M1253 1122 1321 1118 1324 1138 1256 1142ZM2479 1118 2547 1122 2544 1142 2476 1138Z"/>
<path fill="#a57b69" stroke="#a57b69" stroke-width="1.5" d="M1321 1118 1403 1114 1405 1135 1324 1138ZM2397 1114 2479 1118 2476 1138 2395 1135Z"/>
<path fill="#ab7e6c" stroke="#ab7e6c" stroke-width="1.5" d="M1403 1114 1498 1111 1500 1132 1405 1135ZM2302 1111 2397 1114 2395 1135 2300 1132Z"/>
<path fill="#b1816f" stroke="#b1816f" stroke-width="1.5" d="M1498 1111 1604 1109 1606 1130 1500 1132ZM2196 1109 2302 1111 2300 1132 2194 1130Z"/>
<path fill="#b48472" stroke="#b48472" stroke-width="1.5" d="M1604 1109 1719 1107 1720 1128 1606 1130ZM2081 1107 2196 1109 2194 1130 2080 1128Z"/>
<path fill="#b48772" stroke="#b48772" stroke-width="1.5" d="M1719 1107 1839 1106 1839 1127 1720 1128ZM1839 1106 1961 1106 1961 1127 1839 1127ZM1961 1106 2081 1107 2080 1128 1961 1127Z"/>
<path fill="#72574b" stroke="#72574b" stroke-width="1.5" d="M1136 1159 1136 1158 1139 1175 1139 1176ZM2664 1158 2664 1159 2661 1176 2661 1175Z"/>
<path fill="#7b6051" stroke="#7b6051" stroke-width="1.5" d="M1136 1158 1145 1154 1147 1171 1139 1175ZM2655 1154 2664 1158 2661 1175 2653 1171Z"/>
<path fill="#87695a" stroke="#87695a" stroke-width="1.5" d="M1145 1154 1167 1150 1170 1168 1147 1171ZM2633 1150 2655 1154 2653 1171 2630 1168Z"/>
<path fill="#936f60" stroke="#936f60" stroke-width="1.5" d="M1167 1150 1204 1145 1207 1164 1170 1168ZM2596 1145 2633 1150 2630 1168 2593 1164Z"/>
<path fill="#9c7869" stroke="#9c7869" stroke-width="1.5" d="M1204 1145 1256 1142 1259 1161 1207 1164ZM2544 1142 2596 1145 2593 1164 2541 1161Z"/>
<path fill="#a27e6c" stroke="#a27e6c" stroke-width="1.5" d="M1256 1142 1324 1138 1326 1157 1259 1161ZM2476 1138 2544 1142 2541 1161 2474 1157Z"/>
<path fill="#ab8172" stroke="#ab8172" stroke-width="1.5" d="M1324 1138 1405 1135 1407 1155 1326 1157ZM2395 1135 2476 1138 2474 1157 2393 1155Z"/>
<path fill="#b18775" stroke="#b18775" stroke-width="1.5" d="M1405 1135 1500 1132 1502 1152 1407 1155ZM2300 1132 2395 1135 2393 1155 2298 1152Z"/>
<path fill="#b48a78" stroke="#b48a78" stroke-width="1.5" d="M1500 1132 1606 1130 1607 1150 1502 1152ZM2194 1130 2300 1132 2298 1152 2193 1150Z"/>
<path fill="#b78d7b" stroke="#b78d7b" stroke-width="1.5" d="M1606 1130 1720 1128 1721 1149 1607 1150ZM2080 1128 2194 1130 2193 1150 2079 1149Z"/>
<path fill="#ba8d7b" stroke="#ba8d7b" stroke-width="1.5" d="M1720 1128 1839 1127 1840 1148 1721 1149ZM1961 1127 2080 1128 2079 1149 1960 1148Z"/>
<path fill="#ba907b" stroke="#ba907b" stroke-width="1.5" d="M1839 1127 1961 1127 1960 1148 1840 1148Z"/>
<path fill="#755d51" stroke="#755d51" stroke-width="1.5" d="M1139 1176 1139 1175 1141 1192 1141 1192ZM2661 1175 2661 1176 2659 1192 2659 1192Z"/>
<path fill="#81665a" stroke="#81665a" stroke-width="1.5" d="M1139 1175 1147 1171 1150 1189 1141 1192ZM2653 1171 2661 1175 2659 1192 2650 1189Z"/>
<path fill="#8d6f63" stroke="#8d6f63" stroke-width="1.5" d="M1147 1171 1170 1168 1172 1186 1150 1189ZM2630 1168 2653 1171 2650 1189 2628 1186Z"/>
<path fill="#967869" stroke="#967869" stroke-width="1.5" d="M1170 1168 1207 1164 1209 1183 1172 1186ZM2593 1164 2630 1168 2628 1186 2591 1183Z"/>
<path fill="#9f7e6f" stroke="#9f7e6f" stroke-width="1.5" d="M1207 1164 1259 1161 1261 1180 1209 1183ZM2541 1161 2593 1164 2591 1183 2539 1180Z"/>
<path fill="#a88475" stroke="#a88475" stroke-width="1.5" d="M1259 1161 1326 1157 1328 1177 1261 1180ZM2474 1157 2541 1161 2539 1180 2472 1177Z"/>
<path fill="#ae8a7b" stroke="#ae8a7b" stroke-width="1.5" d="M1326 1157 1407 1155 1409 1175 1328 1177ZM2393 1155 2474 1157 2472 1177 2391 1175Z"/>
<path fill="#b4907e" stroke="#b4907e" stroke-width="1.5" d="M1407 1155 1502 1152 1503 1173 1409 1175ZM2298 1152 2393 1155 2391 1175 2297 1173Z"/>
<path fill="#ba9381" stroke="#ba9381" stroke-width="1.5" d="M1502 1152 1607 1150 1608 1171 1503 1173ZM2193 1150 2298 1152 2297 1173 2192 1171Z"/>
<path fill="#bd9684" stroke="#bd9684" stroke-width="1.5" d="M1607 1150 1721 1149 1721 1170 1608 1171ZM1721 1149 1840 1148 1840 1169 1721 1170ZM1960 1148 2079 1149 2079 1170 1960 1169ZM2079 1149 2193 1150 2192 1171 2079 1170Z"/>
<path fill="#c09684" stroke="#c09684" stroke-width="1.5" d="M1840 1148 1960 1148 1960 1169 1840 1169Z"/>
<path fill="#786357" stroke="#786357" stroke-width="1.5" d="M1141 1192 1141 1192 1143 1209 1143 1209ZM2659 1192 2659 1192 2657 1209 2657 1209Z"/>
<path fill="#816c60" stroke="#816c60" stroke-width="1.5" d="M1141 1192 1150 1189 1152 1206 1143 1209ZM2650 1189 2659 1192 2657 1209 2648 1206Z"/>
<path fill="#907569" stroke="#907569" stroke-width="1.5" d="M1150 1189 1172 1186 1175 1204 1152 1206ZM2628 1186 2650 1189 2648 1206 2625 1204Z"/>
<path fill="#997e72" stroke="#997e72" stroke-width="1.5" d="M1172 1186 1209 1183 1211 1201 1175 1204ZM2591 1183 2628 1186 2625 1204 2589 1201Z"/>
<path fill="#a28778" stroke="#a28778" stroke-width="1.5" d="M1209 1183 1261 1180 1263 1199 1211 1201ZM2539 1180 2591 1183 2589 1201 2537 1199Z"/>
<path fill="#ab8d7e" stroke="#ab8d7e" stroke-width="1.5" d="M1261 1180 1328 1177 1330 1197 1263 1199ZM2472 1177 2539 1180 2537 1199 2470 1197Z"/>
<path fill="#b19384" stroke="#b19384" stroke-width="1.5" d="M1328 1177 1409 1175 1411 1195 1330 1197ZM2391 1175 2472 1177 2470 1197 2389 1195Z"/>
<path fill="#b79687" stroke="#b79687" stroke-width="1.5" d="M1409 1175 1503 1173 1505 1193 1411 1195ZM2297 1173 2391 1175 2389 1195 2295 1193Z"/>
<path fill="#bd998a" stroke="#bd998a" stroke-width="1.5" d="M1503 1173 1608 1171 1609 1191 1505 1193ZM2192 1171 2297 1173 2295 1193 2191 1191Z"/>
<path fill="#c09c8d" stroke="#c09c8d" stroke-width="1.5" d="M1608 1171 1721 1170 1722 1191 1609 1191ZM2079 1170 2192 1171 2191 1191 2078 1191Z"/>
<path fill="#c09f8d" stroke="#c09f8d" stroke-width="1.5" d="M1721 1170 1840 1169 1840 1190 1722 1191ZM1960 1169 2079 1170 2078 1191 1960 1190Z"/>
<path fill="#c39f90" stroke="#c39f90" stroke-width="1.5" d="M1840 1169 1960 1169 1960 1190 1840 1190Z"/>
<path fill="#7b6960" stroke="#7b6960" stroke-width="1.5" d="M1143 1209 1143 1209 1145 1226 1145 1226ZM2657 1209 2657 1209 2655 1226 2655 1226Z"/>
<path fill="#847269" stroke="#847269" stroke-width="1.5" d="M1143 1209 1152 1206 1154 1224 1145 1226ZM2648 1206 2657 1209 2655 1226 2646 1224Z"/>
<path fill="#937b72" stroke="#937b72" stroke-width="1.5" d="M1152 1206 1175 1204 1176 1222 1154 1224ZM2625 1204 2648 1206 2646 1224 2624 1222Z"/>
<path fill="#9c847b" stroke="#9c847b" stroke-width="1.5" d="M1175 1204 1211 1201 1213 1220 1176 1222ZM2589 1201 2625 1204 2624 1222 2587 1220Z"/>
<path fill="#a58d81" stroke="#a58d81" stroke-width="1.5" d="M1211 1201 1263 1199 1265 1218 1213 1220ZM2537 1199 2589 1201 2587 1220 2535 1218Z"/>
<path fill="#ae9387" stroke="#ae9387" stroke-width="1.5" d="M1263 1199 1330 1197 1331 1216 1265 1218ZM2470 1197 2537 1199 2535 1218 2469 1216Z"/>
<path fill="#b4998d" stroke="#b4998d" stroke-width="1.5" d="M1330 1197 1411 1195 1412 1215 1331 1216ZM2389 1195 2470 1197 2469 1216 2388 1215Z"/>
<path fill="#ba9f90" stroke="#ba9f90" stroke-width="1.5" d="M1411 1195 1505 1193 1506 1213 1412 1215ZM2295 1193 2389 1195 2388 1215 2294 1213Z"/>
<path fill="#bda293" stroke="#bda293" stroke-width="1.5" d="M1505 1193 1609 1191 1610 1212 1506 1213ZM2191 1191 2295 1193 2294 1213 2190 1212Z"/>
<path fill="#c0a596" stroke="#c0a596" stroke-width="1.5" d="M1609 1191 1722 1191 1722 1211 1610 1212ZM2078 1191 2191 1191 2190 1212 2078 1211Z"/>
<path fill="#c3a599" stroke="#c3a599" stroke-width="1.5" d="M1722 1191 1840 1190 1840 1211 1722 1211ZM1840 1190 1960 1190 1960 1211 1840 1211ZM1960 1190 2078 1191 2078 1211 1960 1211Z"/>
<path fill="#7b6c66" stroke="#7b6c66" stroke-width="1.5" d="M1145 1226 1145 1226 1146 1243 1146 1243ZM2655 1226 2655 1226 2654 1243 2654 1243Z"/>
<path fill="#87786f" stroke="#87786f" stroke-width="1.5" d="M1145 1226 1154 1224 1155 1241 1146 1243ZM2646 1224 2655 1226 2654 1243 2645 1241Z"/>
<path fill="#93847b" stroke="#93847b" stroke-width="1.5" d="M1154 1224 1176 1222 1178 1240 1155 1241ZM2624 1222 2646 1224 2645 1241 2622 1240Z"/>
<path fill="#9f8d84" stroke="#9f8d84" stroke-width="1.5" d="M1176 1222 1213 1220 1214 1238 1178 1240ZM2587 1220 2624 1222 2622 1240 2586 1238Z"/>
<path fill="#a8938a" stroke="#a8938a" stroke-width="1.5" d="M1213 1220 1265 1218 1266 1237 1214 1238ZM2535 1218 2587 1220 2586 1238 2534 1237Z"/>
<path fill="#ae9c90" stroke="#ae9c90" stroke-width="1.5" d="M1265 1218 1331 1216 1333 1236 1266 1237ZM2469 1216 2535 1218 2534 1237 2467 1236Z"/>
<path fill="#b7a296" stroke="#b7a296" stroke-width="1.5" d="M1331 1216 1412 1215 1413 1234 1333 1236ZM2388 1215 2469 1216 2467 1236 2387 1234Z"/>
<path fill="#baa59c" stroke="#baa59c" stroke-width="1.5" d="M1412 1215 1506 1213 1506 1233 1413 1234ZM2294 1213 2388 1215 2387 1234 2294 1233Z"/>
<path fill="#c0a89f" stroke="#c0a89f" stroke-width="1.5" d="M1506 1213 1610 1212 1611 1233 1506 1233ZM2190 1212 2294 1213 2294 1233 2189 1233Z"/>
<path fill="#c3aba2" stroke="#c3aba2" stroke-width="1.5" d="M1610 1212 1722 1211 1723 1232 1611 1233ZM2078 1211 2190 1212 2189 1233 2077 1232Z"/>
<path fill="#c6aea2" stroke="#c6aea2" stroke-width="1.5" d="M1722 1211 1840 1211 1840 1232 1723 1232ZM1840 1211 1960 1211 1960 1232 1840 1232ZM1960 1211 2078 1211 2077 1232 1960 1232Z"/>
<path fill="#7e726f" stroke="#7e726f" stroke-width="1.5" d="M1146 1243 1146 1243 1147 1260 1147 1260ZM2654 1243 2654 1243 2653 1260 2653 1260Z"/>
<path fill="#8a7e78" stroke="#8a7e78" stroke-width="1.5" d="M1146 1243 1155 1241 1156 1259 1147 1260ZM2645 1241 2654 1243 2653 1260 2644 1259Z"/>
<path fill="#968a84" stroke="#968a84" stroke-width="1.5" d="M1155 1241 1178 1240 1179 1258 1156 1259ZM2622 1240 2645 1241 2644 1259 2621 1258Z"/>
<path fill="#a2938d" stroke="#a2938d" stroke-width="1.5" d="M1178 1240 1214 1238 1215 1257 1179 1258ZM2586 1238 2622 1240 2621 1258 2585 1257Z"/>
<path fill="#ab9c96" stroke="#ab9c96" stroke-width="1.5" d="M1214 1238 1266 1237 1267 1256 1215 1257ZM2534 1237 2586 1238 2585 1257 2533 1256Z"/>
<path fill="#b1a29c" stroke="#b1a29c" stroke-width="1.5" d="M1266 1237 1333 1236 1333 1255 1267 1256ZM2467 1236 2534 1237 2533 1256 2467 1255Z"/>
<path fill="#b7a8a2" stroke="#b7a8a2" stroke-width="1.5" d="M1333 1236 1413 1234 1414 1254 1333 1255ZM2387 1234 2467 1236 2467 1255 2386 1254Z"/>
<path fill="#bdaea5" stroke="#bdaea5" stroke-width="1.5" d="M1413 1234 1506 1233 1507 1254 1414 1254ZM2294 1233 2387 1234 2386 1254 2293 1254Z"/>
<path fill="#c3b1a8" stroke="#c3b1a8" stroke-width="1.5" d="M1506 1233 1611 1233 1611 1253 1507 1254ZM2189 1233 2294 1233 2293 1254 2189 1253Z"/>
<path fill="#c6b4ab" stroke="#c6b4ab" stroke-width="1.5" d="M1611 1233 1723 1232 1723 1253 1611 1253ZM2077 1232 2189 1233 2189 1253 2077 1253Z"/>
<path fill="#c6b7ae" stroke="#c6b7ae" stroke-width="1.5" d="M1723 1232 1840 1232 1840 1252 1723 1253ZM1840 1232 1960 1232 1960 1252 1840 1252ZM1960 1232 2077 1232 2077 1253 1960 1252Z"/>
<path fill="#817b78" stroke="#817b78" stroke-width="1.5" d="M1147 1260 1147 1260 1148 1277 1148 1277ZM2653 1260 2653 1260 2652 1277 2652 1277Z"/>
<path fill="#8d8481" stroke="#8d8481" stroke-width="1.5" d="M1147 1260 1156 1259 1157 1276 1148 1277ZM2644 1259 2653 1260 2652 1277 2643 1276Z"/>
<path fill="#99908d" stroke="#99908d" stroke-width="1.5" d="M1156 1259 1179 1258 1179 1276 1157 1276ZM2621 1258 2644 1259 2643 1276 2621 1276Z"/>
<path fill="#a29c96" stroke="#a29c96" stroke-width="1.5" d="M1179 1258 1215 1257 1216 1275 1179 1276ZM2585 1257 2621 1258 2621 1276 2584 1275Z"/>
<path fill="#aba29f" stroke="#aba29f" stroke-width="1.5" d="M1215 1257 1267 1256 1268 1275 1216 1275ZM2533 1256 2585 1257 2584 1275 2532 1275Z"/>
<path fill="#b4aba5" stroke="#b4aba5" stroke-width="1.5" d="M1267 1256 1333 1255 1334 1275 1268 1275ZM2467 1255 2533 1256 2532 1275 2466 1275Z"/>
<path fill="#bab1ab" stroke="#bab1ab" stroke-width="1.5" d="M1333 1255 1414 1254 1414 1274 1334 1275ZM2386 1254 2467 1255 2466 1275 2386 1274Z"/>
<path fill="#c0b4b1" stroke="#c0b4b1" stroke-width="1.5" d="M1414 1254 1507 1254 1507 1274 1414 1274ZM2293 1254 2386 1254 2386 1274 2293 1274Z"/>
<path fill="#c3bab4" stroke="#c3bab4" stroke-width="1.5" d="M1507 1254 1611 1253 1611 1274 1507 1274ZM2189 1253 2293 1254 2293 1274 2189 1274Z"/>
<path fill="#c6bdb7" stroke="#c6bdb7" stroke-width="1.5" d="M1611 1253 1723 1253 1723 1273 1611 1274ZM2077 1253 2189 1253 2189 1274 2077 1273Z"/>
<path fill="#c9bdba" stroke="#c9bdba" stroke-width="1.5" d="M1723 1253 1840 1252 1841 1273 1723 1273ZM1840 1252 1960 1252 1959 1273 1841 1273ZM1960 1252 2077 1253 2077 1273 1959 1273Z"/>
<path fill="#84817e" stroke="#84817e" stroke-width="1.5" d="M1148 1277 1148 1277 1148 1294 1148 1294ZM2652 1277 2652 1277 2652 1294 2652 1294Z"/>
<path fill="#8d8a8a" stroke="#8d8a8a" stroke-width="1.5" d="M1148 1277 1157 1276 1157 1294 1148 1294ZM2643 1276 2652 1277 2652 1294 2643 1294Z"/>
<path fill="#9c9996" stroke="#9c9996" stroke-width="1.5" d="M1157 1276 1179 1276 1179 1294 1157 1294ZM2621 1276 2643 1276 2643 1294 2621 1294Z"/>
<path fill="#a5a2a2" stroke="#a5a2a2" stroke-width="1.5" d="M1179 1276 1216 1275 1216 1294 1179 1294ZM2584 1275 2621 1276 2621 1294 2584 1294Z"/>
<path fill="#aeabab" stroke="#aeabab" stroke-width="1.5" d="M1216 1275 1268 1275 1268 1294 1216 1294ZM2532 1275 2584 1275 2584 1294 2532 1294Z"/>
<path fill="#b7b4b1" stroke="#b7b4b1" stroke-width="1.5" d="M1268 1275 1334 1275 1334 1294 1268 1294ZM2466 1275 2532 1275 2532 1294 2466 1294Z"/>
<path fill="#bdbab7" stroke="#bdbab7" stroke-width="1.5" d="M1334 1275 1414 1274 1414 1294 1334 1294ZM2386 1274 2466 1275 2466 1294 2386 1294Z"/>
<path fill="#c0bdbd" stroke="#c0bdbd" stroke-width="1.5" d="M1414 1274 1507 1274 1507 1294 1414 1294ZM2293 1274 2386 1274 2386 1294 2293 1294Z"/>
<path fill="#c6c3c0" stroke="#c6c3c0" stroke-width="1.5" d="M1507 1274 1611 1274 1611 1294 1507 1294ZM2189 1274 2293 1274 2293 1294 2189 1294Z"/>
<path fill="#c9c6c3" stroke="#c9c6c3" stroke-width="1.5" d="M1611 1274 1723 1273 1723 1294 1611 1294ZM2077 1273 2189 1274 2189 1294 2077 1294Z"/>
<path fill="#c9c6c6" stroke="#c9c6c6" stroke-width="1.5" d="M1723 1273 1841 1273 1841 1294 1723 1294ZM1841 1273 1959 1273 1959 1294 1841 1294ZM1959 1273 2077 1273 2077 1294 1959 1294Z"/>
<path fill="#818484" stroke="#818484" stroke-width="1.5" d="M1148 1294 1148 1294 1148 1311 1148 1311ZM2652 1294 2652 1294 2652 1311 2652 1311Z"/>
<path fill="#8d8d90" stroke="#8d8d90" stroke-width="1.5" d="M1148 1294 1157 1294 1157 1312 1148 1311ZM2643 1294 2652 1294 2652 1311 2643 1312Z"/>
<path fill="#999c9c" stroke="#999c9c" stroke-width="1.5" d="M1157 1294 1179 1294 1179 1312 1157 1312ZM2621 1294 2643 1294 2643 1312 2621 1312Z"/>
<path fill="#a5a5a8" stroke="#a5a5a8" stroke-width="1.5" d="M1179 1294 1216 1294 1216 1313 1179 1312ZM2584 1294 2621 1294 2621 1312 2584 1313Z"/>
<path fill="#aeaeb1" stroke="#aeaeb1" stroke-width="1.5" d="M1216 1294 1268 1294 1268 1313 1216 1313ZM2532 1294 2584 1294 2584 1313 2532 1313Z"/>
<path fill="#b4b7ba" stroke="#b4b7ba" stroke-width="1.5" d="M1268 1294 1334 1294 1334 1313 1268 1313ZM2466 1294 2532 1294 2532 1313 2466 1313Z"/>
<path fill="#babdc0" stroke="#babdc0" stroke-width="1.5" d="M1334 1294 1414 1294 1414 1314 1334 1313ZM2386 1294 2466 1294 2466 1313 2386 1314Z"/>
<path fill="#c0c0c3" stroke="#c0c0c3" stroke-width="1.5" d="M1414 1294 1507 1294 1507 1314 1414 1314ZM2293 1294 2386 1294 2386 1314 2293 1314Z"/>
<path fill="#c3c6c9" stroke="#c3c6c9" stroke-width="1.5" d="M1507 1294 1611 1294 1611 1314 1507 1314ZM2189 1294 2293 1294 2293 1314 2189 1314Z"/>
<path fill="#c6c9cc" stroke="#c6c9cc" stroke-width="1.5" d="M1611 1294 1723 1294 1723 1315 1611 1314ZM2077 1294 2189 1294 2189 1314 2077 1315Z"/>
<path fill="#c9c9cc" stroke="#c9c9cc" stroke-width="1.5" d="M1723 1294 1841 1294 1841 1315 1723 1315ZM1841 1294 1959 1294 1959 1315 1841 1315ZM1959 1294 2077 1294 2077 1315 1959 1315Z"/>
<path fill="#7e8187" stroke="#7e8187" stroke-width="1.5" d="M1148 1311 1148 1311 1147 1328 1147 1328ZM2652 1311 2652 1311 2653 1328 2653 1328Z"/>
<path fill="#878d93" stroke="#878d93" stroke-width="1.5" d="M1148 1311 1157 1312 1156 1329 1147 1328ZM2643 1312 2652 1311 2653 1328 2644 1329Z"/>
<path fill="#96999f" stroke="#96999f" stroke-width="1.5" d="M1157 1312 1179 1312 1179 1330 1156 1329ZM2621 1312 2643 1312 2644 1329 2621 1330Z"/>
<path fill="#9fa5ab" stroke="#9fa5ab" stroke-width="1.5" d="M1179 1312 1216 1313 1215 1331 1179 1330ZM2584 1313 2621 1312 2621 1330 2585 1331Z"/>
<path fill="#a8abb4" stroke="#a8abb4" stroke-width="1.5" d="M1216 1313 1268 1313 1267 1332 1215 1331ZM2532 1313 2584 1313 2585 1331 2533 1332Z"/>
<path fill="#aeb4bd" stroke="#aeb4bd" stroke-width="1.5" d="M1268 1313 1334 1313 1333 1333 1267 1332ZM2466 1313 2532 1313 2533 1332 2467 1333Z"/>
<path fill="#b4bac3" stroke="#b4bac3" stroke-width="1.5" d="M1334 1313 1414 1314 1414 1334 1333 1333ZM2386 1314 2466 1313 2467 1333 2386 1334Z"/>
<path fill="#bac0c9" stroke="#bac0c9" stroke-width="1.5" d="M1414 1314 1507 1314 1507 1334 1414 1334ZM2293 1314 2386 1314 2386 1334 2293 1334Z"/>
<path fill="#bdc3cc" stroke="#bdc3cc" stroke-width="1.5" d="M1507 1314 1611 1314 1611 1335 1507 1334ZM2189 1314 2293 1314 2293 1334 2189 1335Z"/>
<path fill="#c0c6cf" stroke="#c0c6cf" stroke-width="1.5" d="M1611 1314 1723 1315 1723 1335 1611 1335ZM2077 1315 2189 1314 2189 1335 2077 1335Z"/>
<path fill="#c3c9d2" stroke="#c3c9d2" stroke-width="1.5" d="M1723 1315 1841 1315 1840 1336 1723 1335ZM1841 1315 1959 1315 1960 1336 1840 1336ZM1959 1315 2077 1315 2077 1335 1960 1336Z"/>
<path fill="#787e8a" stroke="#787e8a" stroke-width="1.5" d="M1147 1328 1147 1328 1146 1345 1146 1345ZM2653 1328 2653 1328 2654 1345 2654 1345Z"/>
<path fill="#848a96" stroke="#848a96" stroke-width="1.5" d="M1147 1328 1156 1329 1155 1347 1146 1345ZM2644 1329 2653 1328 2654 1345 2645 1347Z"/>
<path fill="#9096a2" stroke="#9096a2" stroke-width="1.5" d="M1156 1329 1179 1330 1178 1348 1155 1347ZM2621 1330 2644 1329 2645 1347 2622 1348Z"/>
<path fill="#99a2ae" stroke="#99a2ae" stroke-width="1.5" d="M1179 1330 1215 1331 1214 1350 1178 1348ZM2585 1331 2621 1330 2622 1348 2586 1350Z"/>
<path fill="#a2abb7" stroke="#a2abb7" stroke-width="1.5" d="M1215 1331 1267 1332 1266 1351 1214 1350ZM2533 1332 2585 1331 2586 1350 2534 1351Z"/>
<path fill="#abb1c0" stroke="#abb1c0" stroke-width="1.5" d="M1267 1332 1333 1333 1333 1352 1266 1351ZM2467 1333 2533 1332 2534 1351 2467 1352Z"/>
<path fill="#b1b7c6" stroke="#b1b7c6" stroke-width="1.5" d="M1333 1333 1414 1334 1413 1354 1333 1352ZM2386 1334 2467 1333 2467 1352 2387 1354Z"/>
<path fill="#b4bdcc" stroke="#b4bdcc" stroke-width="1.5" d="M1414 1334 1507 1334 1506 1355 1413 1354ZM2293 1334 2386 1334 2387 1354 2294 1355Z"/>
<path fill="#bac0cf" stroke="#bac0cf" stroke-width="1.5" d="M1507 1334 1611 1335 1611 1355 1506 1355ZM2189 1335 2293 1334 2294 1355 2189 1355Z"/>
<path fill="#bac3d2" stroke="#bac3d2" stroke-width="1.5" d="M1611 1335 1723 1335 1723 1356 1611 1355ZM2077 1335 2189 1335 2189 1355 2077 1356Z"/>
<path fill="#bdc6d5" stroke="#bdc6d5" stroke-width="1.5" d="M1723 1335 1840 1336 1840 1356 1723 1356ZM1840 1336 1960 1336 1960 1356 1840 1356ZM1960 1336 2077 1335 2077 1356 1960 1356Z"/>
<path fill="#757e8a" stroke="#757e8a" stroke-width="1.5" d="M1146 1345 1146 1345 1145 1362 1145 1362ZM2654 1345 2654 1345 2655 1362 2655 1362Z"/>
<path fill="#818796" stroke="#818796" stroke-width="1.5" d="M1146 1345 1155 1347 1154 1364 1145 1362ZM2645 1347 2654 1345 2655 1362 2646 1364Z"/>
<path fill="#8d96a5" stroke="#8d96a5" stroke-width="1.5" d="M1155 1347 1178 1348 1176 1366 1154 1364ZM2622 1348 2645 1347 2646 1364 2624 1366Z"/>
<path fill="#969fb1" stroke="#969fb1" stroke-width="1.5" d="M1178 1348 1214 1350 1213 1368 1176 1366ZM2586 1350 2622 1348 2624 1366 2587 1368Z"/>
<path fill="#9fa8ba" stroke="#9fa8ba" stroke-width="1.5" d="M1214 1350 1266 1351 1265 1370 1213 1368ZM2534 1351 2586 1350 2587 1368 2535 1370Z"/>
<path fill="#a5b1c3" stroke="#a5b1c3" stroke-width="1.5" d="M1266 1351 1333 1352 1331 1372 1265 1370ZM2467 1352 2534 1351 2535 1370 2469 1372Z"/>
<path fill="#abb7c9" stroke="#abb7c9" stroke-width="1.5" d="M1333 1352 1413 1354 1412 1373 1331 1372ZM2387 1354 2467 1352 2469 1372 2388 1373Z"/>
<path fill="#aebacf" stroke="#aebacf" stroke-width="1.5" d="M1413 1354 1506 1355 1506 1375 1412 1373ZM2294 1355 2387 1354 2388 1373 2294 1375Z"/>
<path fill="#b4c0d5" stroke="#b4c0d5" stroke-width="1.5" d="M1506 1355 1611 1355 1610 1376 1506 1375ZM2189 1355 2294 1355 2294 1375 2190 1376Z"/>
<path fill="#b7c3d8" stroke="#b7c3d8" stroke-width="1.5" d="M1611 1355 1723 1356 1722 1377 1610 1376ZM1723 1356 1840 1356 1840 1377 1722 1377ZM1960 1356 2077 1356 2078 1377 1960 1377ZM2077 1356 2189 1355 2190 1376 2078 1377Z"/>
<path fill="#b7c3db" stroke="#b7c3db" stroke-width="1.5" d="M1840 1356 1960 1356 1960 1377 1840 1377Z"/>
<path fill="#727b8d" stroke="#727b8d" stroke-width="1.5" d="M1145 1362 1145 1362 1143 1379 1143 1379ZM2655 1362 2655 1362 2657 1379 2657 1379Z"/>
<path fill="#7b8799" stroke="#7b8799" stroke-width="1.5" d="M1145 1362 1154 1364 1152 1382 1143 1379ZM2646 1364 2655 1362 2657 1379 2648 1382Z"/>
<path fill="#8793a8" stroke="#8793a8" stroke-width="1.5" d="M1154 1364 1176 1366 1175 1384 1152 1382ZM2624 1366 2646 1364 2648 1382 2625 1384Z"/>
<path fill="#909cb4" stroke="#909cb4" stroke-width="1.5" d="M1176 1366 1213 1368 1211 1387 1175 1384ZM2587 1368 2624 1366 2625 1384 2589 1387Z"/>
<path fill="#99a5bd" stroke="#99a5bd" stroke-width="1.5" d="M1213 1368 1265 1370 1263 1389 1211 1387ZM2535 1370 2587 1368 2589 1387 2537 1389Z"/>
<path fill="#9faec6" stroke="#9faec6" stroke-width="1.5" d="M1265 1370 1331 1372 1330 1391 1263 1389ZM2469 1372 2535 1370 2537 1389 2470 1391Z"/>
<path fill="#a5b4cc" stroke="#a5b4cc" stroke-width="1.5" d="M1331 1372 1412 1373 1411 1393 1330 1391ZM2388 1373 2469 1372 2470 1391 2389 1393Z"/>
<path fill="#abbad2" stroke="#abbad2" stroke-width="1.5" d="M1412 1373 1506 1375 1505 1395 1411 1393ZM2294 1375 2388 1373 2389 1393 2295 1395Z"/>
<path fill="#aebdd8" stroke="#aebdd8" stroke-width="1.5" d="M1506 1375 1610 1376 1609 1397 1505 1395ZM2190 1376 2294 1375 2295 1395 2191 1397Z"/>
<path fill="#b1c0db" stroke="#b1c0db" stroke-width="1.5" d="M1610 1376 1722 1377 1722 1397 1609 1397ZM2078 1377 2190 1376 2191 1397 2078 1397Z"/>
<path fill="#b1c3de" stroke="#b1c3de" stroke-width="1.5" d="M1722 1377 1840 1377 1840 1398 1722 1397ZM1960 1377 2078 1377 2078 1397 1960 1398Z"/>
<path fill="#b4c3de" stroke="#b4c3de" stroke-width="1.5" d="M1840 1377 1960 1377 1960 1398 1840 1398Z"/>
<path fill="#6c7b8d" stroke="#6c7b8d" stroke-width="1.5" d="M1143 1379 1143 1379 1141 1396 1141 1396ZM2657 1379 2657 1379 2659 1396 2659 1396Z"/>
<path fill="#78849c" stroke="#78849c" stroke-width="1.5" d="M1143 1379 1152 1382 1150 1399 1141 1396ZM2648 1382 2657 1379 2659 1396 2650 1399Z"/>
<path fill="#8190ab" stroke="#8190ab" stroke-width="1.5" d="M1152 1382 1175 1384 1172 1402 1150 1399ZM2625 1384 2648 1382 2650 1399 2628 1402Z"/>
<path fill="#8a9cb7" stroke="#8a9cb7" stroke-width="1.5" d="M1175 1384 1211 1387 1209 1405 1172 1402ZM2589 1387 2625 1384 2628 1402 2591 1405Z"/>
<path fill="#93a5c0" stroke="#93a5c0" stroke-width="1.5" d="M1211 1387 1263 1389 1261 1408 1209 1405ZM2537 1389 2589 1387 2591 1405 2539 1408Z"/>
<path fill="#99abc9" stroke="#99abc9" stroke-width="1.5" d="M1263 1389 1330 1391 1328 1411 1261 1408ZM2470 1391 2537 1389 2539 1408 2472 1411Z"/>
<path fill="#9fb1cf" stroke="#9fb1cf" stroke-width="1.5" d="M1330 1391 1411 1393 1409 1413 1328 1411ZM2389 1393 2470 1391 2472 1411 2391 1413Z"/>
<path fill="#a5b7d5" stroke="#a5b7d5" stroke-width="1.5" d="M1411 1393 1505 1395 1503 1415 1409 1413ZM2295 1395 2389 1393 2391 1413 2297 1415Z"/>
<path fill="#a8badb" stroke="#a8badb" stroke-width="1.5" d="M1505 1395 1609 1397 1608 1417 1503 1415ZM2191 1397 2295 1395 2297 1415 2192 1417Z"/>
<path fill="#abbdde" stroke="#abbdde" stroke-width="1.5" d="M1609 1397 1722 1397 1721 1418 1608 1417ZM2078 1397 2191 1397 2192 1417 2079 1418Z"/>
<path fill="#abc0e1" stroke="#abc0e1" stroke-width="1.5" d="M1722 1397 1840 1398 1840 1419 1721 1418ZM1960 1398 2078 1397 2079 1418 1960 1419Z"/>
<path fill="#aec0e1" stroke="#aec0e1" stroke-width="1.5" d="M1840 1398 1960 1398 1960 1419 1840 1419Z"/>
<path fill="#697890" stroke="#697890" stroke-width="1.5" d="M1141 1396 1141 1396 1139 1413 1139 1412ZM2659 1396 2659 1396 2661 1412 2661 1413Z"/>
<path fill="#72819c" stroke="#72819c" stroke-width="1.5" d="M1141 1396 1150 1399 1147 1417 1139 1413ZM2650 1399 2659 1396 2661 1413 2653 1417Z"/>
<path fill="#7e8dab" stroke="#7e8dab" stroke-width="1.5" d="M1150 1399 1172 1402 1170 1420 1147 1417ZM2628 1402 2650 1399 2653 1417 2630 1420Z"/>
<path fill="#8799b7" stroke="#8799b7" stroke-width="1.5" d="M1172 1402 1209 1405 1207 1424 1170 1420ZM2591 1405 2628 1402 2630 1420 2593 1424Z"/>
<path fill="#8da2c3" stroke="#8da2c3" stroke-width="1.5" d="M1209 1405 1261 1408 1259 1427 1207 1424ZM2539 1408 2591 1405 2593 1424 2541 1427Z"/>
<path fill="#96a8cc" stroke="#96a8cc" stroke-width="1.5" d="M1261 1408 1328 1411 1326 1431 1259 1427ZM2472 1411 2539 1408 2541 1427 2474 1431Z"/>
<path fill="#99aed2" stroke="#99aed2" stroke-width="1.5" d="M1328 1411 1409 1413 1407 1433 1326 1431ZM2391 1413 2472 1411 2474 1431 2393 1433Z"/>
<path fill="#9fb4d8" stroke="#9fb4d8" stroke-width="1.5" d="M1409 1413 1503 1415 1502 1436 1407 1433ZM2297 1415 2391 1413 2393 1433 2298 1436Z"/>
<path fill="#a2b7de" stroke="#a2b7de" stroke-width="1.5" d="M1503 1415 1608 1417 1607 1438 1502 1436ZM2192 1417 2297 1415 2298 1436 2193 1438Z"/>
<path fill="#a5bae1" stroke="#a5bae1" stroke-width="1.5" d="M1608 1417 1721 1418 1721 1439 1607 1438ZM2079 1418 2192 1417 2193 1438 2079 1439Z"/>
<path fill="#a8bde4" stroke="#a8bde4" stroke-width="1.5" d="M1721 1418 1840 1419 1840 1440 1721 1439ZM1840 1419 1960 1419 1960 1440 1840 1440ZM1960 1419 2079 1418 2079 1439 1960 1440Z"/>
<path fill="#667590" stroke="#667590" stroke-width="1.5" d="M1139 1412 1139 1413 1136 1430 1136 1429ZM2661 1413 2661 1412 2664 1429 2664 1430Z"/>
<path fill="#6f7e9c" stroke="#6f7e9c" stroke-width="1.5" d="M1139 1413 1147 1417 1145 1434 1136 1430ZM2653 1417 2661 1413 2664 1430 2655 1434Z"/>
<path fill="#788aab" stroke="#788aab" stroke-width="1.5" d="M1147 1417 1170 1420 1167 1438 1145 1434ZM2630 1420 2653 1417 2655 1434 2633 1438Z"/>
<path fill="#8193b7" stroke="#8193b7" stroke-width="1.5" d="M1170 1420 1207 1424 1204 1443 1167 1438ZM2593 1424 2630 1420 2633 1438 2596 1443Z"/>
<path fill="#879cc3" stroke="#879cc3" stroke-width="1.5" d="M1207 1424 1259 1427 1256 1446 1204 1443ZM2541 1427 2593 1424 2596 1443 2544 1446Z"/>
<path fill="#90a5cc" stroke="#90a5cc" stroke-width="1.5" d="M1259 1427 1326 1431 1324 1450 1256 1446ZM2474 1431 2541 1427 2544 1446 2476 1450Z"/>
<path fill="#93abd2" stroke="#93abd2" stroke-width="1.5" d="M1326 1431 1407 1433 1405 1453 1324 1450ZM2393 1433 2474 1431 2476 1450 2395 1453Z"/>
<path fill="#99aed8" stroke="#99aed8" stroke-width="1.5" d="M1407 1433 1502 1436 1500 1456 1405 1453ZM2298 1436 2393 1433 2395 1453 2300 1456Z"/>
<path fill="#9cb4de" stroke="#9cb4de" stroke-width="1.5" d="M1502 1436 1607 1438 1606 1458 1500 1456ZM2193 1438 2298 1436 2300 1456 2194 1458Z"/>
<path fill="#9fb7e1" stroke="#9fb7e1" stroke-width="1.5" d="M1607 1438 1721 1439 1720 1460 1606 1458ZM2079 1439 2193 1438 2194 1458 2080 1460Z"/>
<path fill="#9fb7e4" stroke="#9fb7e4" stroke-width="1.5" d="M1721 1439 1840 1440 1839 1461 1720 1460ZM1960 1440 2079 1439 2080 1460 1961 1461Z"/>
<path fill="#a2bae4" stroke="#a2bae4" stroke-width="1.5" d="M1840 1440 1960 1440 1961 1461 1839 1461Z"/>
<path fill="#606f90" stroke="#606f90" stroke-width="1.5" d="M1136 1429 1136 1430 1133 1447 1133 1446ZM2664 1430 2664 1429 2667 1446 2667 1447Z"/>
<path fill="#697b9c" stroke="#697b9c" stroke-width="1.5" d="M1136 1430 1145 1434 1141 1452 1133 1447ZM2655 1434 2664 1430 2667 1447 2659 1452Z"/>
<path fill="#7287ab" stroke="#7287ab" stroke-width="1.5" d="M1145 1434 1167 1438 1164 1457 1141 1452ZM2633 1438 2655 1434 2659 1452 2636 1457Z"/>
<path fill="#7b90b7" stroke="#7b90b7" stroke-width="1.5" d="M1167 1438 1204 1443 1201 1461 1164 1457ZM2596 1443 2633 1438 2636 1457 2599 1461Z"/>
<path fill="#8199c3" stroke="#8199c3" stroke-width="1.5" d="M1204 1443 1256 1446 1253 1466 1201 1461ZM2544 1446 2596 1443 2599 1461 2547 1466Z"/>
<path fill="#8a9fcc" stroke="#8a9fcc" stroke-width="1.5" d="M1256 1446 1324 1450 1321 1470 1253 1466ZM2476 1450 2544 1446 2547 1466 2479 1470Z"/>
<path fill="#8da5d2" stroke="#8da5d2" stroke-width="1.5" d="M1324 1450 1405 1453 1403 1474 1321 1470ZM2395 1453 2476 1450 2479 1470 2397 1474Z"/>
<path fill="#93abdb" stroke="#93abdb" stroke-width="1.5" d="M1405 1453 1500 1456 1498 1477 1403 1474ZM2300 1456 2395 1453 2397 1474 2302 1477Z"/>
<path fill="#96aede" stroke="#96aede" stroke-width="1.5" d="M1500 1456 1606 1458 1604 1479 1498 1477ZM2194 1458 2300 1456 2302 1477 2196 1479Z"/>
<path fill="#99b1e1" stroke="#99b1e1" stroke-width="1.5" d="M1606 1458 1720 1460 1719 1481 1604 1479ZM2080 1460 2194 1458 2196 1479 2081 1481Z"/>
<path fill="#99b4e4" stroke="#99b4e4" stroke-width="1.5" d="M1720 1460 1839 1461 1839 1482 1719 1481ZM1839 1461 1961 1461 1961 1482 1839 1482ZM1961 1461 2080 1460 2081 1481 1961 1482Z"/>
<path fill="#5d6c90" stroke="#5d6c90" stroke-width="1.5" d="M1133 1446 1133 1447 1129 1464 1129 1463ZM2667 1447 2667 1446 2671 1463 2671 1464Z"/>
<path fill="#63759c" stroke="#63759c" stroke-width="1.5" d="M1133 1447 1141 1452 1138 1469 1129 1464ZM2659 1452 2667 1447 2671 1464 2662 1469Z"/>
<path fill="#6f81ab" stroke="#6f81ab" stroke-width="1.5" d="M1141 1452 1164 1457 1160 1475 1138 1469ZM2636 1457 2659 1452 2662 1469 2640 1475Z"/>
<path fill="#758ab7" stroke="#758ab7" stroke-width="1.5" d="M1164 1457 1201 1461 1197 1480 1160 1475ZM2599 1461 2636 1457 2640 1475 2603 1480Z"/>
<path fill="#7e93c3" stroke="#7e93c3" stroke-width="1.5" d="M1201 1461 1253 1466 1250 1485 1197 1480ZM2547 1466 2599 1461 2603 1480 2550 1485Z"/>
<path fill="#849ccc" stroke="#849ccc" stroke-width="1.5" d="M1253 1466 1321 1470 1318 1490 1250 1485ZM2479 1470 2547 1466 2550 1485 2482 1490Z"/>
<path fill="#87a2d2" stroke="#87a2d2" stroke-width="1.5" d="M1321 1470 1403 1474 1400 1494 1318 1490ZM2397 1474 2479 1470 2482 1490 2400 1494Z"/>
<path fill="#8da5db" stroke="#8da5db" stroke-width="1.5" d="M1403 1474 1498 1477 1496 1497 1400 1494ZM2302 1477 2397 1474 2400 1494 2304 1497Z"/>
<path fill="#90abde" stroke="#90abde" stroke-width="1.5" d="M1498 1477 1604 1479 1602 1500 1496 1497ZM2196 1479 2302 1477 2304 1497 2198 1500Z"/>
<path fill="#93aee4" stroke="#93aee4" stroke-width="1.5" d="M1604 1479 1719 1481 1718 1502 1602 1500ZM1719 1481 1839 1482 1839 1503 1718 1502ZM1961 1482 2081 1481 2082 1502 1961 1503ZM2081 1481 2196 1479 2198 1500 2082 1502Z"/>
<path fill="#93aee7" stroke="#93aee7" stroke-width="1.5" d="M1839 1482 1961 1482 1961 1503 1839 1503Z"/>
<path fill="#57698d" stroke="#57698d" stroke-width="1.5" d="M1129 1463 1129 1464 1125 1481 1125 1480ZM2671 1464 2671 1463 2675 1480 2675 1481Z"/>
<path fill="#60729c" stroke="#60729c" stroke-width="1.5" d="M1129 1464 1138 1469 1134 1487 1125 1481ZM2662 1469 2671 1464 2675 1481 2666 1487Z"/>
<path fill="#697eab" stroke="#697eab" stroke-width="1.5" d="M1138 1469 1160 1475 1156 1493 1134 1487ZM2640 1475 2662 1469 2666 1487 2644 1493Z"/>
<path fill="#6f87b7" stroke="#6f87b7" stroke-width="1.5" d="M1160 1475 1197 1480 1193 1499 1156 1493ZM2603 1480 2640 1475 2644 1493 2607 1499Z"/>
<path fill="#7890c3" stroke="#7890c3" stroke-width="1.5" d="M1197 1480 1250 1485 1246 1504 1193 1499ZM2550 1485 2603 1480 2607 1499 2554 1504Z"/>
<path fill="#7e96cc" stroke="#7e96cc" stroke-width="1.5" d="M1250 1485 1318 1490 1314 1509 1246 1504ZM2482 1490 2550 1485 2554 1504 2486 1509Z"/>
<path fill="#819cd2" stroke="#819cd2" stroke-width="1.5" d="M1318 1490 1400 1494 1397 1514 1314 1509ZM2400 1494 2482 1490 2486 1509 2403 1514Z"/>
<path fill="#87a2db" stroke="#87a2db" stroke-width="1.5" d="M1400 1494 1496 1497 1493 1518 1397 1514ZM2304 1497 2400 1494 2403 1514 2307 1518Z"/>
<path fill="#8aa5de" stroke="#8aa5de" stroke-width="1.5" d="M1496 1497 1602 1500 1601 1521 1493 1518ZM2198 1500 2304 1497 2307 1518 2199 1521Z"/>
<path fill="#8aa8e4" stroke="#8aa8e4" stroke-width="1.5" d="M1602 1500 1718 1502 1717 1523 1601 1521ZM2082 1502 2198 1500 2199 1521 2083 1523Z"/>
<path fill="#8da8e4" stroke="#8da8e4" stroke-width="1.5" d="M1718 1502 1839 1503 1838 1524 1717 1523ZM1961 1503 2082 1502 2083 1523 1962 1524Z"/>
<path fill="#8dabe7" stroke="#8dabe7" stroke-width="1.5" d="M1839 1503 1961 1503 1962 1524 1838 1524Z"/>
<path fill="#54668d" stroke="#54668d" stroke-width="1.5" d="M1125 1480 1125 1481 1121 1499 1121 1497ZM2675 1481 2675 1480 2679 1497 2679 1499Z"/>
<path fill="#5a6f9c" stroke="#5a6f9c" stroke-width="1.5" d="M1125 1481 1134 1487 1129 1505 1121 1499ZM2666 1487 2675 1481 2679 1499 2671 1505Z"/>
<path fill="#637bab" stroke="#637bab" stroke-width="1.5" d="M1134 1487 1156 1493 1152 1511 1129 1505ZM2644 1493 2666 1487 2671 1505 2648 1511Z"/>
<path fill="#6c84b7" stroke="#6c84b7" stroke-width="1.5" d="M1156 1493 1193 1499 1189 1517 1152 1511ZM2607 1499 2644 1493 2648 1511 2611 1517Z"/>
<path fill="#728ac3" stroke="#728ac3" stroke-width="1.5" d="M1193 1499 1246 1504 1242 1523 1189 1517ZM2554 1504 2607 1499 2611 1517 2558 1523Z"/>
<path fill="#7890cc" stroke="#7890cc" stroke-width="1.5" d="M1246 1504 1314 1509 1311 1529 1242 1523ZM2486 1509 2554 1504 2558 1523 2489 1529Z"/>
<path fill="#7b96d5" stroke="#7b96d5" stroke-width="1.5" d="M1314 1509 1397 1514 1394 1534 1311 1529ZM2403 1514 2486 1509 2489 1529 2406 1534Z"/>
<path fill="#7e9cdb" stroke="#7e9cdb" stroke-width="1.5" d="M1397 1514 1493 1518 1491 1539 1394 1534ZM2307 1518 2403 1514 2406 1534 2309 1539Z"/>
<path fill="#849fe1" stroke="#849fe1" stroke-width="1.5" d="M1493 1518 1601 1521 1599 1542 1491 1539ZM2199 1521 2307 1518 2309 1539 2201 1542Z"/>
<path fill="#84a2e4" stroke="#84a2e4" stroke-width="1.5" d="M1601 1521 1717 1523 1716 1544 1599 1542ZM2083 1523 2199 1521 2201 1542 2084 1544Z"/>
<path fill="#87a5e7" stroke="#87a5e7" stroke-width="1.5" d="M1717 1523 1838 1524 1838 1546 1716 1544ZM1838 1524 1962 1524 1962 1546 1838 1546ZM1962 1524 2083 1523 2084 1544 1962 1546Z"/>
<path fill="#4e638d" stroke="#4e638d" stroke-width="1.5" d="M1121 1497 1121 1499 1116 1516 1116 1514ZM2679 1499 2679 1497 2684 1514 2684 1516Z"/>
<path fill="#576c9c" stroke="#576c9c" stroke-width="1.5" d="M1121 1499 1129 1505 1125 1522 1116 1516ZM2671 1505 2679 1499 2684 1516 2675 1522Z"/>
<path fill="#5d75ab" stroke="#5d75ab" stroke-width="1.5" d="M1129 1505 1152 1511 1147 1529 1125 1522ZM2648 1511 2671 1505 2675 1522 2653 1529Z"/>
<path fill="#667eb7" stroke="#667eb7" stroke-width="1.5" d="M1152 1511 1189 1517 1185 1536 1147 1529ZM2611 1517 2648 1511 2653 1529 2615 1536Z"/>
<path fill="#6c87c3" stroke="#6c87c3" stroke-width="1.5" d="M1189 1517 1242 1523 1238 1543 1185 1536ZM2558 1523 2611 1517 2615 1536 2562 1543Z"/>
<path fill="#728dcc" stroke="#728dcc" stroke-width="1.5" d="M1242 1523 1311 1529 1307 1549 1238 1543ZM2489 1529 2558 1523 2562 1543 2493 1549Z"/>
<path fill="#7593d5" stroke="#7593d5" stroke-width="1.5" d="M1311 1529 1394 1534 1390 1555 1307 1549ZM2406 1534 2489 1529 2493 1549 2410 1555Z"/>
<path fill="#7896db" stroke="#7896db" stroke-width="1.5" d="M1394 1534 1491 1539 1488 1559 1390 1555ZM2309 1539 2406 1534 2410 1555 2312 1559Z"/>
<path fill="#7b9ce1" stroke="#7b9ce1" stroke-width="1.5" d="M1491 1539 1599 1542 1596 1563 1488 1559ZM2201 1542 2309 1539 2312 1559 2204 1563Z"/>
<path fill="#7e9fe4" stroke="#7e9fe4" stroke-width="1.5" d="M1599 1542 1716 1544 1714 1566 1596 1563ZM2084 1544 2201 1542 2204 1563 2086 1566Z"/>
<path fill="#819fe7" stroke="#819fe7" stroke-width="1.5" d="M1716 1544 1838 1546 1837 1567 1714 1566ZM1838 1546 1962 1546 1963 1567 1837 1567ZM1962 1546 2084 1544 2086 1566 1963 1567Z"/>
<path fill="#4b5d8a" stroke="#4b5d8a" stroke-width="1.5" d="M1116 1514 1116 1516 1111 1533 1112 1531ZM2684 1516 2684 1514 2688 1531 2689 1533Z"/>
<path fill="#516699" stroke="#516699" stroke-width="1.5" d="M1116 1516 1125 1522 1119 1540 1111 1533ZM2675 1522 2684 1516 2689 1533 2681 1540Z"/>
<path fill="#5a6fa8" stroke="#5a6fa8" stroke-width="1.5" d="M1125 1522 1147 1529 1142 1548 1119 1540ZM2653 1529 2675 1522 2681 1540 2658 1548Z"/>
<path fill="#6078b4" stroke="#6078b4" stroke-width="1.5" d="M1147 1529 1185 1536 1180 1555 1142 1548ZM2615 1536 2653 1529 2658 1548 2620 1555Z"/>
<path fill="#6681bd" stroke="#6681bd" stroke-width="1.5" d="M1185 1536 1238 1543 1233 1562 1180 1555ZM2562 1543 2615 1536 2620 1555 2567 1562Z"/>
<path fill="#6c87c9" stroke="#6c87c9" stroke-width="1.5" d="M1238 1543 1307 1549 1302 1569 1233 1562ZM2493 1549 2562 1543 2567 1562 2498 1569Z"/>
<path fill="#6f8dcf" stroke="#6f8dcf" stroke-width="1.5" d="M1307 1549 1390 1555 1386 1575 1302 1569ZM2410 1555 2493 1549 2498 1569 2414 1575Z"/>
<path fill="#7290d8" stroke="#7290d8" stroke-width="1.5" d="M1390 1555 1488 1559 1484 1580 1386 1575ZM2312 1559 2410 1555 2414 1575 2316 1580Z"/>
<path fill="#7593db" stroke="#7593db" stroke-width="1.5" d="M1488 1559 1596 1563 1594 1584 1484 1580ZM2204 1563 2312 1559 2316 1580 2206 1584Z"/>
<path fill="#7896e1" stroke="#7896e1" stroke-width="1.5" d="M1596 1563 1714 1566 1713 1587 1594 1584ZM2086 1566 2204 1563 2206 1584 2087 1587Z"/>
<path fill="#7899e4" stroke="#7899e4" stroke-width="1.5" d="M1714 1566 1837 1567 1837 1589 1713 1587ZM1963 1567 2086 1566 2087 1587 1963 1589Z"/>
<path fill="#7b99e4" stroke="#7b99e4" stroke-width="1.5" d="M1837 1567 1963 1567 1963 1589 1837 1589Z"/>
<path fill="#455a87" stroke="#455a87" stroke-width="1.5" d="M1112 1531 1111 1533 1106 1550 1106 1548ZM2689 1533 2688 1531 2694 1548 2694 1550Z"/>
<path fill="#4e6096" stroke="#4e6096" stroke-width="1.5" d="M1111 1533 1119 1540 1114 1558 1106 1550ZM2681 1540 2689 1533 2694 1550 2686 1558Z"/>
<path fill="#546ca5" stroke="#546ca5" stroke-width="1.5" d="M1119 1540 1142 1548 1136 1566 1114 1558ZM2658 1548 2681 1540 2686 1558 2664 1566Z"/>
<path fill="#5a72b1" stroke="#5a72b1" stroke-width="1.5" d="M1142 1548 1180 1555 1174 1574 1136 1566ZM2620 1555 2658 1548 2664 1566 2626 1574Z"/>
<path fill="#607bba" stroke="#607bba" stroke-width="1.5" d="M1180 1555 1233 1562 1228 1582 1174 1574ZM2567 1562 2620 1555 2626 1574 2572 1582Z"/>
<path fill="#6681c6" stroke="#6681c6" stroke-width="1.5" d="M1233 1562 1302 1569 1298 1589 1228 1582ZM2498 1569 2567 1562 2572 1582 2502 1589Z"/>
<path fill="#6984cc" stroke="#6984cc" stroke-width="1.5" d="M1302 1569 1386 1575 1382 1596 1298 1589ZM2414 1575 2498 1569 2502 1589 2418 1596Z"/>
<path fill="#6c8ad5" stroke="#6c8ad5" stroke-width="1.5" d="M1386 1575 1484 1580 1481 1601 1382 1596ZM2316 1580 2414 1575 2418 1596 2319 1601Z"/>
<path fill="#6f8dd8" stroke="#6f8dd8" stroke-width="1.5" d="M1484 1580 1594 1584 1592 1606 1481 1601ZM2206 1584 2316 1580 2319 1601 2208 1606Z"/>
<path fill="#7290de" stroke="#7290de" stroke-width="1.5" d="M1594 1584 1713 1587 1711 1609 1592 1606ZM1713 1587 1837 1589 1836 1610 1711 1609ZM1963 1589 2087 1587 2089 1609 1964 1610ZM2087 1587 2206 1584 2208 1606 2089 1609Z"/>
<path fill="#7293e1" stroke="#7293e1" stroke-width="1.5" d="M1837 1589 1963 1589 1964 1610 1836 1610Z"/>
<path fill="#425487" stroke="#425487" stroke-width="1.5" d="M1106 1548 1106 1550 1100 1567 1101 1565ZM2694 1550 2694 1548 2699 1565 2700 1567Z"/>
<path fill="#485d93" stroke="#485d93" stroke-width="1.5" d="M1106 1550 1114 1558 1108 1576 1100 1567ZM2686 1558 2694 1550 2700 1567 2692 1576Z"/>
<path fill="#4e66a2" stroke="#4e66a2" stroke-width="1.5" d="M1114 1558 1136 1566 1131 1584 1108 1576ZM2664 1566 2686 1558 2692 1576 2669 1584Z"/>
<path fill="#546cae" stroke="#546cae" stroke-width="1.5" d="M1136 1566 1174 1574 1169 1593 1131 1584ZM2626 1574 2664 1566 2669 1584 2631 1593Z"/>
<path fill="#5a75b7" stroke="#5a75b7" stroke-width="1.5" d="M1174 1574 1228 1582 1223 1601 1169 1593ZM2572 1582 2626 1574 2631 1593 2577 1601Z"/>
<path fill="#607bc0" stroke="#607bc0" stroke-width="1.5" d="M1228 1582 1298 1589 1293 1609 1223 1601ZM2502 1589 2572 1582 2577 1601 2507 1609Z"/>
<path fill="#637ec9" stroke="#637ec9" stroke-width="1.5" d="M1298 1589 1382 1596 1378 1616 1293 1609ZM2418 1596 2502 1589 2507 1609 2422 1616Z"/>
<path fill="#6684cf" stroke="#6684cf" stroke-width="1.5" d="M1382 1596 1481 1601 1477 1622 1378 1616ZM2319 1601 2418 1596 2422 1616 2323 1622Z"/>
<path fill="#6987d5" stroke="#6987d5" stroke-width="1.5" d="M1481 1601 1592 1606 1589 1627 1477 1622ZM2208 1606 2319 1601 2323 1622 2211 1627Z"/>
<path fill="#6c8ad8" stroke="#6c8ad8" stroke-width="1.5" d="M1592 1606 1711 1609 1710 1630 1589 1627ZM2089 1609 2208 1606 2211 1627 2090 1630Z"/>
<path fill="#6c8adb" stroke="#6c8adb" stroke-width="1.5" d="M1711 1609 1836 1610 1836 1632 1710 1630ZM1964 1610 2089 1609 2090 1630 1964 1632Z"/>
<path fill="#6c8ade" stroke="#6c8ade" stroke-width="1.5" d="M1836 1610 1964 1610 1964 1632 1836 1632Z"/>
<path fill="#3f5184" stroke="#3f5184" stroke-width="1.5" d="M1101 1565 1100 1567 1094 1584 1095 1582ZM2700 1567 2699 1565 2705 1582 2706 1584Z"/>
<path fill="#455790" stroke="#455790" stroke-width="1.5" d="M1100 1567 1108 1576 1102 1594 1094 1584ZM2692 1576 2700 1567 2706 1584 2698 1594Z"/>
<path fill="#4b609f" stroke="#4b609f" stroke-width="1.5" d="M1108 1576 1131 1584 1124 1603 1102 1594ZM2669 1584 2692 1576 2698 1594 2676 1603Z"/>
<path fill="#5166ab" stroke="#5166ab" stroke-width="1.5" d="M1131 1584 1169 1593 1163 1612 1124 1603ZM2631 1593 2669 1584 2676 1603 2637 1612Z"/>
<path fill="#546fb4" stroke="#546fb4" stroke-width="1.5" d="M1169 1593 1223 1601 1217 1621 1163 1612ZM2577 1601 2631 1593 2637 1612 2583 1621Z"/>
<path fill="#5a75bd" stroke="#5a75bd" stroke-width="1.5" d="M1223 1601 1293 1609 1287 1629 1217 1621ZM2507 1609 2577 1601 2583 1621 2513 1629Z"/>
<path fill="#5d78c6" stroke="#5d78c6" stroke-width="1.5" d="M1293 1609 1378 1616 1373 1637 1287 1629ZM2422 1616 2507 1609 2513 1629 2427 1637Z"/>
<path fill="#607bcc" stroke="#607bcc" stroke-width="1.5" d="M1378 1616 1477 1622 1474 1643 1373 1637ZM2323 1622 2422 1616 2427 1637 2326 1643Z"/>
<path fill="#6381d2" stroke="#6381d2" stroke-width="1.5" d="M1477 1622 1589 1627 1586 1649 1474 1643ZM2211 1627 2323 1622 2326 1643 2214 1649Z"/>
<path fill="#6681d5" stroke="#6681d5" stroke-width="1.5" d="M1589 1627 1710 1630 1708 1652 1586 1649ZM2090 1630 2211 1627 2214 1649 2092 1652Z"/>
<path fill="#6684d8" stroke="#6684d8" stroke-width="1.5" d="M1710 1630 1836 1632 1835 1654 1708 1652ZM1836 1632 1964 1632 1965 1654 1835 1654ZM1964 1632 2090 1630 2092 1652 1965 1654Z"/>
<path fill="#394b81" stroke="#394b81" stroke-width="1.5" d="M1095 1582 1094 1584 1088 1602 1089 1599ZM2706 1584 2705 1582 2711 1599 2712 1602Z"/>
<path fill="#3f518d" stroke="#3f518d" stroke-width="1.5" d="M1094 1584 1102 1594 1096 1611 1088 1602ZM2698 1594 2706 1584 2712 1602 2704 1611Z"/>
<path fill="#455a9c" stroke="#455a9c" stroke-width="1.5" d="M1102 1594 1124 1603 1118 1621 1096 1611ZM2676 1603 2698 1594 2704 1611 2682 1621Z"/>
<path fill="#4b63a8" stroke="#4b63a8" stroke-width="1.5" d="M1124 1603 1163 1612 1156 1631 1118 1621ZM2637 1612 2676 1603 2682 1621 2644 1631Z"/>
<path fill="#5169b1" stroke="#5169b1" stroke-width="1.5" d="M1163 1612 1217 1621 1211 1641 1156 1631ZM2583 1621 2637 1612 2644 1631 2589 1641Z"/>
<path fill="#546cba" stroke="#546cba" stroke-width="1.5" d="M1217 1621 1287 1629 1282 1650 1211 1641ZM2513 1629 2583 1621 2589 1641 2518 1650Z"/>
<path fill="#5772c3" stroke="#5772c3" stroke-width="1.5" d="M1287 1629 1373 1637 1368 1658 1282 1650ZM2427 1637 2513 1629 2518 1650 2432 1658Z"/>
<path fill="#5a75c9" stroke="#5a75c9" stroke-width="1.5" d="M1373 1637 1474 1643 1470 1665 1368 1658ZM2326 1643 2427 1637 2432 1658 2330 1665Z"/>
<path fill="#5d78cf" stroke="#5d78cf" stroke-width="1.5" d="M1474 1643 1586 1649 1583 1670 1470 1665ZM2214 1649 2326 1643 2330 1665 2217 1670Z"/>
<path fill="#5d7bd2" stroke="#5d7bd2" stroke-width="1.5" d="M1586 1649 1708 1652 1706 1674 1583 1670ZM2092 1652 2214 1649 2217 1670 2094 1674Z"/>
<path fill="#607bd5" stroke="#607bd5" stroke-width="1.5" d="M1708 1652 1835 1654 1835 1676 1706 1674ZM1965 1654 2092 1652 2094 1674 1965 1676Z"/>
<path fill="#607ed5" stroke="#607ed5" stroke-width="1.5" d="M1835 1654 1965 1654 1965 1676 1835 1676Z"/>
<path fill="#36487e" stroke="#36487e" stroke-width="1.5" d="M1089 1599 1088 1602 1081 1619 1082 1615ZM2712 1602 2711 1599 2718 1615 2719 1619Z"/>
<path fill="#3c4e8a" stroke="#3c4e8a" stroke-width="1.5" d="M1088 1602 1096 1611 1089 1629 1081 1619ZM2704 1611 2712 1602 2719 1619 2711 1629Z"/>
<path fill="#425499" stroke="#425499" stroke-width="1.5" d="M1096 1611 1118 1621 1111 1640 1089 1629ZM2682 1621 2704 1611 2711 1629 2689 1640Z"/>
<path fill="#455da5" stroke="#455da5" stroke-width="1.5" d="M1118 1621 1156 1631 1150 1650 1111 1640ZM2644 1631 2682 1621 2689 1640 2650 1650Z"/>
<path fill="#4b63ae" stroke="#4b63ae" stroke-width="1.5" d="M1156 1631 1211 1641 1204 1661 1150 1650ZM2589 1641 2644 1631 2650 1650 2596 1661Z"/>
<path fill="#4e66b7" stroke="#4e66b7" stroke-width="1.5" d="M1211 1641 1282 1650 1276 1670 1204 1661ZM2518 1650 2589 1641 2596 1661 2524 1670Z"/>
<path fill="#516cc0" stroke="#516cc0" stroke-width="1.5" d="M1282 1650 1368 1658 1363 1679 1276 1670ZM2432 1658 2518 1650 2524 1670 2437 1679Z"/>
<path fill="#546fc6" stroke="#546fc6" stroke-width="1.5" d="M1368 1658 1470 1665 1465 1686 1363 1679ZM2330 1665 2432 1658 2437 1679 2335 1686Z"/>
<path fill="#5772cc" stroke="#5772cc" stroke-width="1.5" d="M1470 1665 1583 1670 1580 1692 1465 1686ZM2217 1670 2330 1665 2335 1686 2220 1692Z"/>
<path fill="#5775cf" stroke="#5775cf" stroke-width="1.5" d="M1583 1670 1706 1674 1704 1696 1580 1692ZM2094 1674 2217 1670 2220 1692 2096 1696Z"/>
<path fill="#5a75d2" stroke="#5a75d2" stroke-width="1.5" d="M1706 1674 1835 1676 1834 1698 1704 1696ZM1835 1676 1965 1676 1966 1698 1834 1698ZM1965 1676 2094 1674 2096 1696 1966 1698Z"/>
<path fill="#33427b" stroke="#33427b" stroke-width="1.5" d="M1082 1615 1081 1619 1075 1636 1075 1632ZM2719 1619 2718 1615 2725 1632 2725 1636Z"/>
<path fill="#364887" stroke="#364887" stroke-width="1.5" d="M1081 1619 1089 1629 1082 1647 1075 1636ZM2711 1629 2719 1619 2725 1636 2718 1647Z"/>
<path fill="#3c4e93" stroke="#3c4e93" stroke-width="1.5" d="M1089 1629 1111 1640 1104 1659 1082 1647ZM2689 1640 2711 1629 2718 1647 2696 1659Z"/>
<path fill="#42579f" stroke="#42579f" stroke-width="1.5" d="M1111 1640 1150 1650 1143 1670 1104 1659ZM2650 1650 2689 1640 2696 1659 2657 1670Z"/>
<path fill="#455aa8" stroke="#455aa8" stroke-width="1.5" d="M1150 1650 1204 1661 1198 1681 1143 1670ZM2596 1661 2650 1650 2657 1670 2602 1681Z"/>
<path fill="#4860b1" stroke="#4860b1" stroke-width="1.5" d="M1204 1661 1276 1670 1270 1691 1198 1681ZM2524 1670 2596 1661 2602 1681 2530 1691Z"/>
<path fill="#4b63ba" stroke="#4b63ba" stroke-width="1.5" d="M1276 1670 1363 1679 1358 1700 1270 1691ZM2437 1679 2524 1670 2530 1691 2442 1700Z"/>
<path fill="#4e69c0" stroke="#4e69c0" stroke-width="1.5" d="M1363 1679 1465 1686 1461 1708 1358 1700ZM2335 1686 2437 1679 2442 1700 2339 1708Z"/>
<path fill="#516cc6" stroke="#516cc6" stroke-width="1.5" d="M1465 1686 1580 1692 1577 1714 1461 1708ZM2220 1692 2335 1686 2339 1708 2223 1714Z"/>
<path fill="#516cc9" stroke="#516cc9" stroke-width="1.5" d="M1580 1692 1704 1696 1702 1718 1577 1714ZM2096 1696 2220 1692 2223 1714 2098 1718Z"/>
<path fill="#546fcc" stroke="#546fcc" stroke-width="1.5" d="M1704 1696 1834 1698 1833 1721 1702 1718ZM1834 1698 1966 1698 1967 1721 1833 1721ZM1966 1698 2096 1696 2098 1718 1967 1721Z"/>
<path fill="#2d3c75" stroke="#2d3c75" stroke-width="1.5" d="M1075 1632 1075 1636 1067 1653 1068 1649ZM2725 1636 2725 1632 2732 1649 2733 1653Z"/>
<path fill="#334281" stroke="#334281" stroke-width="1.5" d="M1075 1636 1082 1647 1074 1665 1067 1653ZM2718 1647 2725 1636 2733 1653 2726 1665Z"/>
<path fill="#39488d" stroke="#39488d" stroke-width="1.5" d="M1082 1647 1104 1659 1097 1677 1074 1665ZM2696 1659 2718 1647 2726 1665 2703 1677Z"/>
<path fill="#3c4e99" stroke="#3c4e99" stroke-width="1.5" d="M1104 1659 1143 1670 1135 1689 1097 1677ZM2657 1670 2696 1659 2703 1677 2665 1689Z"/>
<path fill="#3f54a2" stroke="#3f54a2" stroke-width="1.5" d="M1143 1670 1198 1681 1191 1701 1135 1689ZM2602 1681 2657 1670 2665 1689 2609 1701Z"/>
<path fill="#425aab" stroke="#425aab" stroke-width="1.5" d="M1198 1681 1270 1691 1263 1711 1191 1701ZM2530 1691 2602 1681 2609 1701 2537 1711Z"/>
<path fill="#455db4" stroke="#455db4" stroke-width="1.5" d="M1270 1691 1358 1700 1352 1721 1263 1711ZM2442 1700 2530 1691 2537 1711 2448 1721Z"/>
<path fill="#4860ba" stroke="#4860ba" stroke-width="1.5" d="M1358 1700 1461 1708 1456 1730 1352 1721ZM2339 1708 2442 1700 2448 1721 2344 1730Z"/>
<path fill="#4b63c0" stroke="#4b63c0" stroke-width="1.5" d="M1461 1708 1577 1714 1573 1736 1456 1730ZM2223 1714 2339 1708 2344 1730 2227 1736Z"/>
<path fill="#4b66c3" stroke="#4b66c3" stroke-width="1.5" d="M1577 1714 1702 1718 1700 1741 1573 1736ZM2098 1718 2223 1714 2227 1736 2100 1741Z"/>
<path fill="#4e66c6" stroke="#4e66c6" stroke-width="1.5" d="M1702 1718 1833 1721 1833 1743 1700 1741ZM1833 1721 1967 1721 1967 1743 1833 1743ZM1967 1721 2098 1718 2100 1741 1967 1743Z"/>
<path fill="#2a3972" stroke="#2a3972" stroke-width="1.5" d="M1068 1649 1067 1653 1060 1671 1061 1666ZM2733 1653 2732 1649 2739 1666 2740 1671Z"/>
<path fill="#303c7b" stroke="#303c7b" stroke-width="1.5" d="M1067 1653 1074 1665 1067 1683 1060 1671ZM2726 1665 2733 1653 2740 1671 2733 1683Z"/>
<path fill="#33458a" stroke="#33458a" stroke-width="1.5" d="M1074 1665 1097 1677 1089 1696 1067 1683ZM2703 1677 2726 1665 2733 1683 2711 1696Z"/>
<path fill="#364893" stroke="#364893" stroke-width="1.5" d="M1097 1677 1135 1689 1128 1709 1089 1696ZM2665 1689 2703 1677 2711 1696 2672 1709Z"/>
<path fill="#3c4e9f" stroke="#3c4e9f" stroke-width="1.5" d="M1135 1689 1191 1701 1184 1721 1128 1709ZM2609 1701 2665 1689 2672 1709 2616 1721Z"/>
<path fill="#3f51a5" stroke="#3f51a5" stroke-width="1.5" d="M1191 1701 1263 1711 1257 1732 1184 1721ZM2537 1711 2609 1701 2616 1721 2543 1732Z"/>
<path fill="#4254ae" stroke="#4254ae" stroke-width="1.5" d="M1263 1711 1352 1721 1346 1743 1257 1732ZM2448 1721 2537 1711 2543 1732 2454 1743Z"/>
<path fill="#425ab4" stroke="#425ab4" stroke-width="1.5" d="M1352 1721 1456 1730 1451 1751 1346 1743ZM2344 1730 2448 1721 2454 1743 2349 1751Z"/>
<path fill="#455aba" stroke="#455aba" stroke-width="1.5" d="M1456 1730 1573 1736 1569 1758 1451 1751ZM2227 1736 2344 1730 2349 1751 2231 1758Z"/>
<path fill="#485dbd" stroke="#485dbd" stroke-width="1.5" d="M1573 1736 1700 1741 1697 1763 1569 1758ZM1700 1741 1833 1743 1832 1766 1697 1763ZM1967 1743 2100 1741 2103 1763 1968 1766ZM2100 1741 2227 1736 2231 1758 2103 1763Z"/>
<path fill="#485dc0" stroke="#485dc0" stroke-width="1.5" d="M1833 1743 1967 1743 1968 1766 1832 1766Z"/>
<path fill="#27336c" stroke="#27336c" stroke-width="1.5" d="M1061 1666 1060 1671 1052 1688 1053 1683ZM2740 1671 2739 1666 2747 1683 2748 1688Z"/>
<path fill="#2a3978" stroke="#2a3978" stroke-width="1.5" d="M1060 1671 1067 1683 1059 1701 1052 1688ZM2733 1683 2740 1671 2748 1688 2741 1701Z"/>
<path fill="#303f84" stroke="#303f84" stroke-width="1.5" d="M1067 1683 1089 1696 1081 1715 1059 1701ZM2711 1696 2733 1683 2741 1701 2719 1715Z"/>
<path fill="#33428d" stroke="#33428d" stroke-width="1.5" d="M1089 1696 1128 1709 1120 1728 1081 1715ZM2672 1709 2711 1696 2719 1715 2680 1728Z"/>
<path fill="#364899" stroke="#364899" stroke-width="1.5" d="M1128 1709 1184 1721 1176 1741 1120 1728ZM2616 1721 2672 1709 2680 1728 2624 1741Z"/>
<path fill="#394b9f" stroke="#394b9f" stroke-width="1.5" d="M1184 1721 1257 1732 1250 1753 1176 1741ZM2543 1732 2616 1721 2624 1741 2550 1753Z"/>
<path fill="#3c4ea8" stroke="#3c4ea8" stroke-width="1.5" d="M1257 1732 1346 1743 1340 1764 1250 1753ZM2454 1743 2543 1732 2550 1753 2460 1764Z"/>
<path fill="#3f51ae" stroke="#3f51ae" stroke-width="1.5" d="M1346 1743 1451 1751 1446 1773 1340 1764ZM2349 1751 2454 1743 2460 1764 2354 1773Z"/>
<path fill="#3f54b1" stroke="#3f54b1" stroke-width="1.5" d="M1451 1751 1569 1758 1566 1781 1446 1773ZM2231 1758 2349 1751 2354 1773 2234 1781Z"/>
<path fill="#4254b7" stroke="#4254b7" stroke-width="1.5" d="M1569 1758 1697 1763 1695 1786 1566 1781ZM2103 1763 2231 1758 2234 1781 2105 1786Z"/>
<path fill="#4257b7" stroke="#4257b7" stroke-width="1.5" d="M1697 1763 1832 1766 1831 1789 1695 1786ZM1832 1766 1968 1766 1969 1789 1831 1789ZM1968 1766 2103 1763 2105 1786 1969 1789Z"/>
<path fill="#242d69" stroke="#242d69" stroke-width="1.5" d="M1053 1683 1052 1688 1044 1705 1045 1700ZM2748 1688 2747 1683 2755 1700 2756 1705Z"/>
<path fill="#273372" stroke="#273372" stroke-width="1.5" d="M1052 1688 1059 1701 1050 1719 1044 1705ZM2741 1701 2748 1688 2756 1705 2750 1719Z"/>
<path fill="#2a397e" stroke="#2a397e" stroke-width="1.5" d="M1059 1701 1081 1715 1072 1733 1050 1719ZM2719 1715 2741 1701 2750 1719 2728 1733Z"/>
<path fill="#2d3c8a" stroke="#2d3c8a" stroke-width="1.5" d="M1081 1715 1120 1728 1111 1748 1072 1733ZM2680 1728 2719 1715 2728 1733 2689 1748Z"/>
<path fill="#303f93" stroke="#303f93" stroke-width="1.5" d="M1120 1728 1176 1741 1168 1761 1111 1748ZM2624 1741 2680 1728 2689 1748 2632 1761Z"/>
<path fill="#334599" stroke="#334599" stroke-width="1.5" d="M1176 1741 1250 1753 1242 1774 1168 1761ZM2550 1753 2624 1741 2632 1761 2558 1774Z"/>
<path fill="#3648a2" stroke="#3648a2" stroke-width="1.5" d="M1250 1753 1340 1764 1334 1786 1242 1774ZM2460 1764 2550 1753 2558 1774 2466 1786Z"/>
<path fill="#3948a8" stroke="#3948a8" stroke-width="1.5" d="M1340 1764 1446 1773 1441 1796 1334 1786ZM2354 1773 2460 1764 2466 1786 2359 1796Z"/>
<path fill="#394bab" stroke="#394bab" stroke-width="1.5" d="M1446 1773 1566 1781 1562 1804 1441 1796ZM2234 1781 2354 1773 2359 1796 2238 1804Z"/>
<path fill="#3c4eae" stroke="#3c4eae" stroke-width="1.5" d="M1566 1781 1695 1786 1693 1809 1562 1804ZM2105 1786 2234 1781 2238 1804 2107 1809Z"/>
<path fill="#3c4eb1" stroke="#3c4eb1" stroke-width="1.5" d="M1695 1786 1831 1789 1830 1812 1693 1809ZM1831 1789 1969 1789 1970 1812 1830 1812ZM1969 1789 2105 1786 2107 1809 1970 1812Z"/>
<path fill="#212a63" stroke="#212a63" stroke-width="1.5" d="M1045 1700 1044 1705 1035 1723 1037 1717ZM2756 1705 2755 1700 2763 1717 2765 1723Z"/>
<path fill="#242d6f" stroke="#242d6f" stroke-width="1.5" d="M1044 1705 1050 1719 1042 1737 1035 1723ZM2750 1719 2756 1705 2765 1723 2758 1737Z"/>
<path fill="#27337b" stroke="#27337b" stroke-width="1.5" d="M1050 1719 1072 1733 1064 1752 1042 1737ZM2728 1733 2750 1719 2758 1737 2736 1752Z"/>
<path fill="#2a3684" stroke="#2a3684" stroke-width="1.5" d="M1072 1733 1111 1748 1103 1767 1091 1764 1081 1760 1072 1756 1064 1752ZM2689 1748 2728 1733 2736 1752 2728 1756 2719 1760 2709 1764 2697 1767Z"/>
<path fill="#2d398d" stroke="#2d398d" stroke-width="1.5" d="M1111 1748 1168 1761 1160 1782 1144 1778 1129 1775 1115 1771 1103 1767ZM2632 1761 2689 1748 2697 1767 2685 1771 2671 1775 2656 1778 2640 1782Z"/>
<path fill="#303c93" stroke="#303c93" stroke-width="1.5" d="M1168 1761 1242 1774 1235 1795 1214 1792 1195 1789 1177 1785 1160 1782ZM2558 1774 2632 1761 2640 1782 2623 1785 2605 1789 2586 1792 2565 1795Z"/>
<path fill="#303f9c" stroke="#303f9c" stroke-width="1.5" d="M1242 1774 1334 1786 1327 1808 1302 1805 1279 1802 1256 1798 1235 1795ZM2466 1786 2558 1774 2565 1795 2544 1798 2521 1802 2498 1805 2473 1808Z"/>
<path fill="#3342a2" stroke="#3342a2" stroke-width="1.5" d="M1334 1786 1441 1796 1435 1818 1407 1816 1379 1813 1353 1810 1327 1808ZM2359 1796 2466 1786 2473 1808 2447 1810 2421 1813 2393 1816 2365 1818Z"/>
<path fill="#3645a5" stroke="#3645a5" stroke-width="1.5" d="M1441 1796 1562 1804 1557 1826 1526 1825 1495 1823 1465 1820 1435 1818ZM2238 1804 2359 1796 2365 1818 2335 1820 2305 1823 2274 1825 2243 1826Z"/>
<path fill="#3645a8" stroke="#3645a8" stroke-width="1.5" d="M1562 1804 1693 1809 1690 1832 1656 1831 1623 1830 1590 1828 1557 1826ZM2107 1809 2238 1804 2243 1826 2210 1828 2177 1830 2144 1831 2110 1832Z"/>
<path fill="#3645ab" stroke="#3645ab" stroke-width="1.5" d="M1693 1809 1830 1812 1829 1835 1794 1835 1759 1834 1724 1833 1690 1832ZM1830 1812 1970 1812 1971 1835 1935 1835 1900 1836 1865 1835 1829 1835ZM1970 1812 2107 1809 2110 1832 2076 1833 2041 1834 2006 1835 1971 1835Z"/>
<path fill="none" stroke="#2a1060" stroke-opacity="0.55" stroke-width="1.4" d="M1037 871 1036 868 1035 866 1035 863 1036 860 1037 858 1038 855 1040 852 1042 850 1045 847 1049 844 1053 842 1057 839 1062 836 1068 834 1074 831 1081 828 1089 825 1097 823 1105 820 1114 817 1124 815 1135 812 1146 809 1157 807 1169 804 1182 802 1195 799 1209 797 1224 794 1239 792 1255 790 1271 788 1288 785 1305 783 1323 781 1341 779 1360 777 1380 775 1400 773 1420 771 1441 770 1462 768 1484 766 1506 765 1529 763 1552 762 1575 761 1599 759 1623 758 1647 757 1672 756 1696 756 1721 755 1747 754 1772 754 1797 753 1823 753 1849 753 1874 753 1900 752 1926 753 1951 753 1977 753 2003 753 2028 754 2053 754 2079 755 2104 756 2128 756 2153 757 2177 758 2201 759 2225 761 2248 762 2271 763 2294 765 2316 766 2338 768 2359 770 2380 771 2400 773 2420 775 2440 777 2459 779 2477 781 2495 783 2512 785 2529 788 2545 790 2561 792 2576 794 2591 797 2605 799 2618 802 2631 804 2643 807 2654 809 2665 812 2676 815 2686 817 2695 820 2703 823 2711 825 2719 828 2726 831 2732 834 2738 836 2743 839 2747 842 2751 844 2755 847 2758 850 2760 852 2762 855 2763 858 2764 860 2765 863 2765 866 2764 868 2763 871"/>
<path fill="none" stroke="#2a1060" stroke-opacity="0.55" stroke-width="1.4" d="M1037 1717 1036 1720 1035 1722 1035 1725 1036 1728 1037 1730 1038 1733 1040 1736 1042 1738 1045 1741 1049 1744 1053 1746 1057 1749 1062 1752 1068 1754 1074 1757 1081 1760 1089 1763 1097 1765 1105 1768 1114 1771 1124 1773 1135 1776 1146 1779 1157 1781 1169 1784 1182 1786 1195 1789 1209 1791 1224 1794 1239 1796 1255 1798 1271 1800 1288 1803 1305 1805 1323 1807 1341 1809 1360 1811 1380 1813 1400 1815 1420 1817 1441 1818 1462 1820 1484 1822 1506 1823 1529 1825 1552 1826 1575 1827 1599 1829 1623 1830 1647 1831 1672 1832 1696 1832 1721 1833 1747 1834 1772 1834 1797 1835 1823 1835 1849 1835 1874 1835 1900 1836 1926 1835 1951 1835 1977 1835 2003 1835 2028 1834 2053 1834 2079 1833 2104 1832 2128 1832 2153 1831 2177 1830 2201 1829 2225 1827 2248 1826 2271 1825 2294 1823 2316 1822 2338 1820 2359 1818 2380 1817 2400 1815 2420 1813 2440 1811 2459 1809 2477 1807 2495 1805 2512 1803 2529 1800 2545 1798 2561 1796 2576 1794 2591 1791 2605 1789 2618 1786 2631 1784 2643 1781 2654 1779 2665 1776 2676 1773 2686 1771 2695 1768 2703 1765 2711 1763 2719 1760 2726 1757 2732 1754 2738 1752 2743 1749 2747 1746 2751 1744 2755 1741 2758 1738 2760 1736 2762 1733 2763 1730 2764 1728 2765 1725 2765 1722 2764 1720 2763 1717"/>
<path fill="none" stroke="#18187a" stroke-opacity="0.12" stroke-width="1.1" d="M1042 881 1044 883M1035 865 1044 883M1035 865 1050 869M1042 851 1050 869M1042 851 1072 855M1064 836 1072 855M1064 836 1111 840M1103 821 1111 840M1103 821 1168 827M1160 806 1168 827M1160 806 1242 814M1235 793 1242 814M1235 793 1334 802M1327 780 1334 802M1327 780 1441 792M1435 770 1441 792M1435 770 1562 784M1557 762 1562 784M1557 762 1693 779M1690 756 1693 779M1690 756 1830 776M1829 753 1830 776M1829 753 1970 776M1971 753 1970 776M1971 753 2107 779M2110 756 2107 779M2110 756 2238 784M2243 762 2238 784M2243 762 2359 792M2365 770 2359 792M2365 770 2466 802M2473 780 2466 802M2473 780 2558 814M2565 793 2558 814M2565 793 2632 827M2640 806 2632 827M2640 806 2689 840M2697 821 2689 840M2697 821 2728 855M2736 836 2728 855M2736 836 2750 869M2758 851 2750 869M2758 851 2756 883M2765 865 2756 883M2765 865 2760 878M1045 888 1044 883M1050 898 1052 900M1044 883 1050 869M1044 883 1052 900M1044 883 1059 887M1050 869 1072 855M1050 869 1059 887M1050 869 1081 873M1072 855 1111 840M1072 855 1081 873M1072 855 1120 860M1111 840 1168 827M2632 827 2689 840 2728 855M2689 840 2719 873M2728 855 2750 869M2728 855 2719 873M2728 855 2741 887M2750 869 2756 883M2750 869 2741 887M2750 869 2748 900M2756 883 2755 888M2756 883 2748 900M2756 883 2752 894M1053 905 1052 900M1058 916 1060 917M1052 900 1059 887M1052 900 1060 917M1052 900 1067 905M1059 887 1081 873M1059 887 1067 905M2719 873 2741 887 2748 900M2741 887 2733 905M2741 887 2740 917M2748 900 2747 905M2748 900 2740 917M2748 900 2744 911M1061 922 1060 917M1066 933 1067 935M1060 917 1067 905M1060 917 1067 935M2733 905 2740 917 2739 922M2740 917 2733 935M2740 917 2737 928M1068 939 1067 935M1073 950 1075 952M2733 935 2732 939M2733 935 2729 944"/>
<path fill="none" stroke="#18187a" stroke-opacity="0.30" stroke-width="1.1" d="M1111 840 1120 860M1111 840 1176 847M1168 827 1242 814M1168 827 1176 847M1168 827 1250 835M1242 814 1334 802M1242 814 1250 835M1242 814 1340 824M1334 802 1441 792M1334 802 1340 824M1334 802 1446 815M1441 792 1562 784M1441 792 1446 815M1441 792 1566 807M1562 784 1693 779M1562 784 1566 807M1562 784 1695 802M1693 779 1830 776M1693 779 1695 802M1693 779 1831 799M1830 776 1970 776M1830 776 1831 799M1830 776 1969 799M1970 776 2107 779M1970 776 1969 799M1970 776 2105 802M2107 779 2238 784M2107 779 2105 802M2107 779 2234 807M2238 784 2359 792M2238 784 2234 807M2238 784 2354 815M2359 792 2466 802M2359 792 2354 815M2359 792 2460 824M2466 802 2558 814M2466 802 2460 824M2466 802 2550 835M2558 814 2632 827M2558 814 2550 835M2558 814 2624 847M2632 827 2624 847M2632 827 2680 860M2689 840 2680 860M1059 887 1089 892M1081 873 1120 860M1081 873 1089 892M1081 873 1128 879M1120 860 1176 847M1120 860 1128 879M1120 860 1184 867M1176 847 1250 835M1176 847 1184 867M1176 847 1257 856M1250 835 1340 824M1250 835 1257 856M1250 835 1346 845M1340 824 1446 815M1340 824 1346 845M1340 824 1451 837M1446 815 1566 807M1446 815 1451 837M1446 815 1569 830M1566 807 1695 802M1566 807 1569 830M1566 807 1697 825M1695 802 1831 799M1695 802 1697 825M1695 802 1832 822M1831 799 1969 799M1831 799 1832 822M1831 799 1968 822M1969 799 2105 802M1969 799 1968 822M1969 799 2103 825M2105 802 2234 807M2105 802 2103 825M2105 802 2231 830M2234 807 2354 815M2234 807 2231 830M2234 807 2349 837M2354 815 2460 824M2354 815 2349 837M2354 815 2454 845M2460 824 2550 835M2460 824 2454 845M2460 824 2543 856M2550 835 2624 847M2550 835 2543 856M2550 835 2616 867M2624 847 2680 860M2624 847 2616 867M2624 847 2672 879M2680 860 2719 873M2680 860 2672 879M2680 860 2711 892M2719 873 2711 892M2719 873 2733 905M1060 917 1074 923M1067 905 1089 892M1067 905 1074 923M1067 905 1097 911M1089 892 1128 879M1089 892 1097 911M1089 892 1135 899M1128 879 1184 867M1128 879 1135 899M1128 879 1191 887M1184 867 1257 856M1184 867 1191 887M1257 856 1346 845 1451 837 1569 830 1697 825 1832 822 1968 822 2103 825 2231 830 2349 837 2454 845 2543 856 2616 867 2672 879M2616 867 2609 887M2616 867 2665 899M2672 879 2711 892M2672 879 2665 899M2672 879 2703 911M2711 892 2733 905M2711 892 2703 911M2711 892 2726 923M2733 905 2726 923M2733 905 2733 935M1067 935 1074 923M1067 935 1075 952M1067 935 1082 941M1074 923 1097 911M1074 923 1082 941M1074 923 1104 929M1097 911 1135 899M1097 911 1104 929M1097 911 1143 918M2665 899 2703 911M2665 899 2696 929M2703 911 2726 923M2703 911 2696 929M2703 911 2718 941M2726 923 2733 935M2726 923 2718 941M2726 923 2725 952M2733 935 2725 952M1075 956 1075 952M1080 967 1081 969M1075 952 1082 941M1075 952 1081 969M1075 952 1089 959M1082 941 1104 929M1082 941 1089 959M1082 941 1111 948M1104 929 1111 948M2696 929 2718 941M2696 929 2689 948M2696 929 2711 959M2718 941 2725 952M2718 941 2711 959M2718 941 2719 969M2725 952 2725 956M2725 952 2719 969M2725 952 2723 961M1082 973 1081 969M1087 984 1088 986M1081 969 1089 959M1081 969 1088 986M1081 969 1096 977M1089 959 1111 948M1089 959 1096 977M2689 948 2711 959 2719 969M2711 959 2704 977M2711 959 2712 986M2719 969 2718 973M2719 969 2712 986M2719 969 2716 978M1089 989 1088 986M1093 1001 1094 1004M1088 986 1096 977M1088 986 1094 1004M1088 986 1102 994M2704 977 2712 986M2704 977 2706 1004M2712 986 2711 989M2712 986 2706 1004M2712 986 2710 995M1095 1006 1094 1004M1099 1018 1100 1021M1094 1004 1102 994M1094 1004 1100 1021M1094 1004 1108 1012M2698 994 2706 1004M2698 994 2700 1021M2706 1004 2705 1006M2706 1004 2700 1021M2706 1004 2703 1011M1101 1023 1100 1021M1105 1036 1106 1038M1100 1021 1106 1038M2700 1021 2699 1023M2700 1021 2694 1038M2700 1021 2698 1028M1106 1040 1106 1038M2694 1038 2694 1040"/>
<path fill="none" stroke="#18187a" stroke-opacity="0.50" stroke-width="1.1" d="M1184 867 1263 877M1257 856 1263 877M1257 856 1352 867M1346 845 1352 867M1346 845 1456 858M1451 837 1456 858M1451 837 1573 852M1569 830 1573 852M1569 830 1700 847M1697 825 1700 847M1697 825 1833 845M1832 822 1833 845M1832 822 1967 845M1968 822 1967 845M1968 822 2100 847M2103 825 2100 847M2103 825 2227 852M2231 830 2227 852M2231 830 2344 858M2349 837 2344 858M2349 837 2448 867M2454 845 2448 867M2454 845 2537 877M2543 856 2537 877M2543 856 2609 887M1135 899 1191 887M1135 899 1143 918M1135 899 1198 907M1191 887 1263 877M1191 887 1198 907M1191 887 1270 897M1263 877 1352 867M1263 877 1270 897M1263 877 1358 888M1352 867 1456 858M1352 867 1358 888M1352 867 1461 880M1456 858 1573 852M1456 858 1461 880M1456 858 1577 874M1573 852 1700 847M1573 852 1577 874M1573 852 1702 870M1700 847 1833 845M1700 847 1702 870M1700 847 1833 867M1833 845 1967 845M1833 845 1833 867M1833 845 1967 867M1967 845 2100 847M1967 845 1967 867M1967 845 2098 870M2100 847 2227 852M2100 847 2098 870M2100 847 2223 874M2227 852 2344 858M2227 852 2223 874M2227 852 2339 880M2344 858 2448 867M2344 858 2339 880M2344 858 2442 888M2448 867 2537 877M2448 867 2442 888M2448 867 2530 897M2537 877 2609 887M2537 877 2530 897M2537 877 2602 907M2609 887 2665 899M2609 887 2602 907M2609 887 2657 918M2665 899 2657 918M1104 929 1143 918M1104 929 1150 938M1143 918 1198 907M1143 918 1150 938M1143 918 1204 927M1198 907 1270 897M1198 907 1204 927M1198 907 1276 918M1270 897 1358 888M1270 897 1276 918M1270 897 1363 909M1358 888 1461 880M1358 888 1363 909M1358 888 1465 902M1461 880 1577 874M1461 880 1465 902M1461 880 1580 896M1577 874 1702 870M1577 874 1580 896M1577 874 1704 892M1702 870 1833 867M1702 870 1704 892M1702 870 1834 890M1833 867 1967 867M1833 867 1834 890M1833 867 1966 890M1967 867 2098 870M1967 867 1966 890M1967 867 2096 892M2098 870 2223 874M2098 870 2096 892M2098 870 2220 896M2223 874 2339 880M2223 874 2220 896M2223 874 2335 902M2339 880 2442 888M2339 880 2335 902M2339 880 2437 909M2442 888 2530 897M2442 888 2437 909M2442 888 2524 918M2530 897 2602 907M2530 897 2524 918M2530 897 2596 927M2602 907 2657 918M2602 907 2596 927M2602 907 2650 938M2657 918 2696 929M2657 918 2650 938M2657 918 2689 948M1089 959 1118 967M1111 948 1150 938M1111 948 1118 967M1111 948 1156 957M1150 938 1204 927M1150 938 1156 957M1150 938 1211 947M1204 927 1276 918M1204 927 1211 947M1276 918 1363 909 1465 902 1580 896 1704 892 1834 890 1966 890 2096 892 2220 896 2335 902 2437 909 2524 918 2596 927 2650 938M2596 927 2589 947M2596 927 2644 957M2650 938 2689 948M2650 938 2644 957M2650 938 2682 967M2689 948 2682 967M2689 948 2704 977M1096 977 1118 967M1096 977 1102 994M1096 977 1124 985M1118 967 1156 957M1118 967 1124 985M1118 967 1163 976M1156 957 1211 947M1156 957 1163 976M2589 947 2644 957 2682 967M2644 957 2637 976M2644 957 2676 985M2682 967 2704 977M2682 967 2676 985M2682 967 2698 994M2704 977 2698 994M1102 994 1124 985M1102 994 1108 1012M1102 994 1131 1004M1124 985 1163 976M1124 985 1131 1004M1124 985 1169 995M2637 976 2676 985M2637 976 2669 1004M2676 985 2698 994M2676 985 2669 1004M2676 985 2692 1012M2698 994 2692 1012M1100 1021 1108 1012M1100 1021 1114 1030M1108 1012 1131 1004M1108 1012 1114 1030M1108 1012 1136 1022M1131 1004 1169 995M1131 1004 1136 1022M2631 995 2669 1004 2692 1012M2669 1004 2664 1022M2669 1004 2686 1030M2692 1012 2700 1021M2692 1012 2686 1030M2692 1012 2694 1038M1110 1053 1111 1055M1106 1038 1114 1030M1106 1038 1111 1055M1106 1038 1119 1048M1114 1030 1136 1022M1114 1030 1119 1048M1114 1030 1142 1040M2664 1022 2686 1030M2664 1022 2681 1048M2686 1030 2694 1038M2686 1030 2681 1048M2686 1030 2689 1055M2694 1038 2689 1055M2694 1038 2692 1045M1112 1057 1111 1055M1115 1070 1116 1072M1111 1055 1119 1048M1111 1055 1116 1072M1111 1055 1125 1066M2681 1048 2689 1055M2681 1048 2684 1072M2689 1055 2688 1057M2689 1055 2684 1072M2689 1055 2687 1061M1116 1074 1116 1072M1120 1087 1121 1089M1116 1072 1125 1066M1116 1072 1121 1089M2675 1066 2684 1072 2684 1074M2684 1072 2679 1089M2684 1072 2682 1078M1121 1091 1121 1089M2679 1089 2679 1091"/>
<path fill="none" stroke="#18187a" stroke-opacity="0.78" stroke-width="1.1" d="M1204 927 1282 938M1276 918 1282 938M1276 918 1368 930M1363 909 1368 930M1363 909 1470 923M1465 902 1470 923M1465 902 1583 918M1580 896 1583 918M1580 896 1706 914M1704 892 1706 914M1704 892 1835 912M1834 890 1835 912M1834 890 1965 912M1966 890 1965 912M1966 890 2094 914M2096 892 2094 914M2096 892 2217 918M2220 896 2217 918M2220 896 2330 923M2335 902 2330 923M2335 902 2432 930M2437 909 2432 930M2437 909 2518 938M2524 918 2518 938M2524 918 2589 947M1156 957 1217 967M1211 947 1282 938M1211 947 1217 967M1211 947 1287 959M1282 938 1368 930M1282 938 1287 959M1282 938 1373 951M1368 930 1470 923M1368 930 1373 951M1368 930 1474 945M1470 923 1583 918M1470 923 1474 945M1470 923 1586 939M1583 918 1706 914M1583 918 1586 939M1583 918 1708 936M1706 914 1835 912M1706 914 1708 936M1706 914 1835 934M1835 912 1965 912M1835 912 1835 934M1835 912 1965 934M1965 912 2094 914M1965 912 1965 934M1965 912 2092 936M2094 914 2217 918M2094 914 2092 936M2094 914 2214 939M2217 918 2330 923M2217 918 2214 939M2217 918 2326 945M2330 923 2432 930M2330 923 2326 945M2330 923 2427 951M2432 930 2518 938M2432 930 2427 951M2432 930 2513 959M2518 938 2589 947M2518 938 2513 959M2518 938 2583 967M2589 947 2583 967M2589 947 2637 976M1163 976 1217 967M1163 976 1169 995M1163 976 1223 987M1217 967 1287 959M1217 967 1223 987M1217 967 1293 979M1287 959 1373 951M1287 959 1293 979M1287 959 1378 972M1373 951 1474 945M1373 951 1378 972M1373 951 1477 966M1474 945 1586 939M1474 945 1477 966M1474 945 1589 961M1586 939 1708 936M1586 939 1589 961M1586 939 1710 958M1708 936 1835 934M1708 936 1710 958M1708 936 1836 956M1835 934 1965 934M1835 934 1836 956M1835 934 1964 956M1965 934 2092 936M1965 934 1964 956M1965 934 2090 958M2092 936 2214 939M2092 936 2090 958M2092 936 2211 961M2214 939 2326 945M2214 939 2211 961M2214 939 2323 966M2326 945 2427 951M2326 945 2323 966M2326 945 2422 972M2427 951 2513 959M2427 951 2422 972M2427 951 2507 979M2513 959 2583 967M2513 959 2507 979M2513 959 2577 987M2583 967 2637 976M2583 967 2577 987M2583 967 2631 995M2637 976 2631 995M1131 1004 1174 1014M1169 995 1223 987M1169 995 1174 1014M1169 995 1228 1006M1223 987 1293 979M1223 987 1228 1006M1223 987 1298 999M1293 979 1378 972M1293 979 1298 999M1293 979 1382 992M1378 972 1477 966M1378 972 1382 992M1378 972 1481 987M1477 966 1589 961M1477 966 1481 987M1477 966 1592 982M1589 961 1710 958M1589 961 1592 982M1589 961 1711 979M1710 958 1836 956M1710 958 1711 979M1710 958 1836 978M1836 956 1964 956M1836 956 1836 978M1836 956 1964 978M1964 956 2090 958M1964 956 1964 978M1964 956 2089 979M2090 958 2211 961M2090 958 2089 979M2090 958 2208 982M2211 961 2323 966M2211 961 2208 982M2211 961 2319 987M2323 966 2422 972M2323 966 2319 987M2323 966 2418 992M2422 972 2507 979M2422 972 2418 992M2422 972 2502 999M2507 979 2577 987M2507 979 2502 999M2507 979 2572 1006M2577 987 2631 995M2577 987 2572 1006M2577 987 2626 1014M2631 995 2626 1014M2631 995 2664 1022M1136 1022 1174 1014M1136 1022 1142 1040M1136 1022 1180 1033M1174 1014 1228 1006M1174 1014 1180 1033M1174 1014 1233 1026M1228 1006 1298 999M1228 1006 1233 1026M1228 1006 1302 1019M1298 999 1382 992M1298 999 1302 1019M1298 999 1386 1013M1382 992 1481 987M1382 992 1386 1013M1382 992 1484 1008M1481 987 1592 982M1481 987 1484 1008M1481 987 1594 1004M1592 982 1711 979M1592 982 1594 1004M1592 982 1713 1001M1711 979 1836 978M1711 979 1713 1001M1711 979 1837 999M1836 978 1964 978M1836 978 1837 999M1836 978 1963 999M1964 978 2089 979M1964 978 1963 999M1964 978 2087 1001M2089 979 2208 982M2089 979 2087 1001M2089 979 2206 1004M2208 982 2319 987M2208 982 2206 1004M2208 982 2316 1008M2319 987 2418 992M2319 987 2316 1008M2319 987 2414 1013M2418 992 2502 999M2418 992 2414 1013M2418 992 2498 1019M2502 999 2572 1006M2502 999 2498 1019M2502 999 2567 1026M2572 1006 2626 1014M2572 1006 2567 1026M2572 1006 2620 1033M2626 1014 2664 1022M2626 1014 2620 1033M2626 1014 2658 1040M2664 1022 2658 1040M1119 1048 1142 1040M1119 1048 1125 1066M1119 1048 1147 1059M1142 1040 1180 1033M1142 1040 1147 1059M1142 1040 1185 1052M1180 1033 1233 1026M1180 1033 1185 1052M1180 1033 1238 1045M1233 1026 1302 1019M1233 1026 1238 1045M1233 1026 1307 1039M1302 1019 1386 1013M1302 1019 1307 1039M1302 1019 1390 1033M1386 1013 1484 1008M1386 1013 1390 1033M1386 1013 1488 1029M1484 1008 1594 1004M1484 1008 1488 1029M1484 1008 1596 1025M1594 1004 1713 1001M1594 1004 1596 1025M1594 1004 1714 1022M1713 1001 1837 999M1713 1001 1714 1022M1713 1001 1837 1021M1837 999 1963 999M1837 999 1837 1021M1837 999 1963 1021M1963 999 2087 1001M1963 999 1963 1021M1963 999 2086 1022M2087 1001 2206 1004M2087 1001 2086 1022M2087 1001 2204 1025M2206 1004 2316 1008M2206 1004 2204 1025M2206 1004 2312 1029M2316 1008 2414 1013M2316 1008 2312 1029M2316 1008 2410 1033M2414 1013 2498 1019M2414 1013 2410 1033M2414 1013 2493 1039M2498 1019 2567 1026M2498 1019 2493 1039M2498 1019 2562 1045M2567 1026 2620 1033M2567 1026 2562 1045M2567 1026 2615 1052M2620 1033 2658 1040M2620 1033 2615 1052M2620 1033 2653 1059M2658 1040 2681 1048M2658 1040 2653 1059M2658 1040 2675 1066M2681 1048 2675 1066M1116 1072 1129 1083M1125 1066 1147 1059M1125 1066 1129 1083M1125 1066 1152 1077M1147 1059 1185 1052M1147 1059 1152 1077M1147 1059 1189 1071M1185 1052 1238 1045M1185 1052 1189 1071M1185 1052 1242 1065M1238 1045 1307 1039M1238 1045 1242 1065M1238 1045 1311 1059M1307 1039 1390 1033M1307 1039 1311 1059M1307 1039 1394 1054M1390 1033 1488 1029M1390 1033 1394 1054M1390 1033 1491 1049M1488 1029 1596 1025M1488 1029 1491 1049M1488 1029 1599 1046M1596 1025 1714 1022M1596 1025 1599 1046M1596 1025 1716 1044M1714 1022 1837 1021M1714 1022 1716 1044M1714 1022 1838 1042M1837 1021 1963 1021M1837 1021 1838 1042M1837 1021 1962 1042M1963 1021 2086 1022M1963 1021 1962 1042M1963 1021 2084 1044M2086 1022 2204 1025M2086 1022 2084 1044M2086 1022 2201 1046M2204 1025 2312 1029M2204 1025 2201 1046M2204 1025 2309 1049M2312 1029 2410 1033M2312 1029 2309 1049M2312 1029 2406 1054M2410 1033 2493 1039M2410 1033 2406 1054M2410 1033 2489 1059M2493 1039 2562 1045M2493 1039 2489 1059M2493 1039 2558 1065M2562 1045 2615 1052M2562 1045 2558 1065M2562 1045 2611 1071M2615 1052 2653 1059M2615 1052 2611 1071M2615 1052 2648 1077M2653 1059 2675 1066M2653 1059 2648 1077M2653 1059 2671 1083M2675 1066 2671 1083M2675 1066 2679 1089M1124 1104 1125 1107M1121 1089 1129 1083M1121 1089 1125 1107M1121 1089 1134 1101M1129 1083 1152 1077M1129 1083 1134 1101M1129 1083 1156 1095M1152 1077 1189 1071M1152 1077 1156 1095M1152 1077 1193 1089M1189 1071 1242 1065M1189 1071 1193 1089M1189 1071 1246 1084M1242 1065 1311 1059M1242 1065 1246 1084M1242 1065 1314 1079M1311 1059 1394 1054M1311 1059 1314 1079M1311 1059 1397 1074M1394 1054 1491 1049M1394 1054 1397 1074M1394 1054 1493 1070M1491 1049 1599 1046M1491 1049 1493 1070M1491 1049 1601 1067M1599 1046 1716 1044M1599 1046 1601 1067M1599 1046 1717 1065M1716 1044 1838 1042M1716 1044 1717 1065M1716 1044 1838 1064M1838 1042 1962 1042M1838 1042 1838 1064M1838 1042 1962 1064M1962 1042 2084 1044M1962 1042 1962 1064M1962 1042 2083 1065M2084 1044 2201 1046M2084 1044 2083 1065M2084 1044 2199 1067M2201 1046 2309 1049M2201 1046 2199 1067M2201 1046 2307 1070M2309 1049 2406 1054M2309 1049 2307 1070M2309 1049 2403 1074M2406 1054 2489 1059M2406 1054 2403 1074M2406 1054 2486 1079M2489 1059 2558 1065M2489 1059 2486 1079M2489 1059 2554 1084M2558 1065 2611 1071M2558 1065 2554 1084M2558 1065 2607 1089M2611 1071 2648 1077M2611 1071 2607 1089M2611 1071 2644 1095M2648 1077 2671 1083M2648 1077 2644 1095M2648 1077 2666 1101M2671 1083 2679 1089M2671 1083 2666 1101M2671 1083 2675 1107M2679 1089 2675 1107M2679 1089 2678 1095M1125 1108 1125 1107M1128 1121 1129 1124M1125 1107 1134 1101M1125 1107 1129 1124M1125 1107 1138 1119M1134 1101 1156 1095M1134 1101 1138 1119M1134 1101 1160 1113M1156 1095 1193 1089M1156 1095 1160 1113M1156 1095 1197 1108M1193 1089 1246 1084M1193 1089 1197 1108M1193 1089 1250 1103M1246 1084 1314 1079M1246 1084 1250 1103M1246 1084 1318 1098M1314 1079 1397 1074M1314 1079 1318 1098M1314 1079 1400 1094M1397 1074 1493 1070M1397 1074 1400 1094M1397 1074 1496 1091M1493 1070 1601 1067M1493 1070 1496 1091M1493 1070 1602 1088M1601 1067 1717 1065M1601 1067 1602 1088M1601 1067 1718 1086M1717 1065 1838 1064M1717 1065 1718 1086M1717 1065 1839 1085M1838 1064 1962 1064M1838 1064 1839 1085M1838 1064 1961 1085M1962 1064 2083 1065M1962 1064 1961 1085M1962 1064 2082 1086M2083 1065 2199 1067M2083 1065 2082 1086M2083 1065 2198 1088M2199 1067 2307 1070M2199 1067 2198 1088M2199 1067 2304 1091M2307 1070 2403 1074M2307 1070 2304 1091M2307 1070 2400 1094M2403 1074 2486 1079M2403 1074 2400 1094M2403 1074 2482 1098M2486 1079 2554 1084M2486 1079 2482 1098M2486 1079 2550 1103M2554 1084 2607 1089M2554 1084 2550 1103M2554 1084 2603 1108M2607 1089 2644 1095M2607 1089 2603 1108M2607 1089 2640 1113M2644 1095 2666 1101M2644 1095 2640 1113M2644 1095 2662 1119M2666 1101 2675 1107M2666 1101 2662 1119M2666 1101 2671 1124M2675 1107 2675 1108M2675 1107 2671 1124M2675 1107 2674 1112M1129 1125 1129 1124M1132 1138 1133 1141M1129 1124 1138 1119M1129 1124 1133 1141M1129 1124 1141 1136M1138 1119 1160 1113M1138 1119 1141 1136M1138 1119 1164 1131M1160 1113 1197 1108M1160 1113 1164 1131M1160 1113 1201 1127M1197 1108 1250 1103M1197 1108 1201 1127M1197 1108 1253 1122M1250 1103 1318 1098M1250 1103 1253 1122M1250 1103 1321 1118M1318 1098 1400 1094M1318 1098 1321 1118M1318 1098 1403 1114M1400 1094 1496 1091M1400 1094 1403 1114M1400 1094 1498 1111M1496 1091 1602 1088M1496 1091 1498 1111M1496 1091 1604 1109M1602 1088 1718 1086M1602 1088 1604 1109M1602 1088 1719 1107M1718 1086 1839 1085M1718 1086 1719 1107M1718 1086 1839 1106M1839 1085 1961 1085M1839 1085 1839 1106M1839 1085 1961 1106M1961 1085 2082 1086M1961 1085 1961 1106M1961 1085 2081 1107M2082 1086 2198 1088M2082 1086 2081 1107M2082 1086 2196 1109M2198 1088 2304 1091M2198 1088 2196 1109M2198 1088 2302 1111M2304 1091 2400 1094M2304 1091 2302 1111M2304 1091 2397 1114M2400 1094 2482 1098M2400 1094 2397 1114M2400 1094 2479 1118M2482 1098 2550 1103M2482 1098 2479 1118M2482 1098 2547 1122M2550 1103 2603 1108M2550 1103 2547 1122M2550 1103 2599 1127M2603 1108 2640 1113M2603 1108 2599 1127M2603 1108 2636 1131M2640 1113 2662 1119M2640 1113 2636 1131M2640 1113 2659 1136M2662 1119 2671 1124M2662 1119 2659 1136M2662 1119 2667 1141M2671 1124 2671 1125M2671 1124 2667 1141M2671 1124 2670 1128M1133 1142 1133 1141M1135 1155 1136 1158M1133 1141 1141 1136M1133 1141 1136 1158M1133 1141 1145 1154M1141 1136 1164 1131M1141 1136 1145 1154M1141 1136 1167 1150M1164 1131 1201 1127M1164 1131 1167 1150M1164 1131 1204 1145M1201 1127 1253 1122M1201 1127 1204 1145M1201 1127 1256 1142M1253 1122 1321 1118M1253 1122 1256 1142M1253 1122 1324 1138M1321 1118 1403 1114M1321 1118 1324 1138M1321 1118 1405 1135M1403 1114 1498 1111M1403 1114 1405 1135M1403 1114 1500 1132M1498 1111 1604 1109M1498 1111 1500 1132M1498 1111 1606 1130M1604 1109 1719 1107M1604 1109 1606 1130M1604 1109 1720 1128M1719 1107 1839 1106M1719 1107 1720 1128M1719 1107 1839 1127M1839 1106 1961 1106M1839 1106 1839 1127M1839 1106 1961 1127M1961 1106 2081 1107M1961 1106 1961 1127M1961 1106 2080 1128M2081 1107 2196 1109M2081 1107 2080 1128M2081 1107 2194 1130M2196 1109 2302 1111M2196 1109 2194 1130M2196 1109 2300 1132M2302 1111 2397 1114M2302 1111 2300 1132M2302 1111 2395 1135M2397 1114 2479 1118M2397 1114 2395 1135M2397 1114 2476 1138M2479 1118 2547 1122M2479 1118 2476 1138M2479 1118 2544 1142M2547 1122 2599 1127M2547 1122 2544 1142M2547 1122 2596 1145M2599 1127 2636 1131M2599 1127 2596 1145M2599 1127 2633 1150M2636 1131 2659 1136M2636 1131 2633 1150M2636 1131 2655 1154M2659 1136 2667 1141M2659 1136 2655 1154M2659 1136 2664 1158M2667 1141 2667 1142M2667 1141 2664 1158M2667 1141 2667 1145M1136 1159 1136 1158M1138 1172 1139 1175M1136 1158 1145 1154M1136 1158 1139 1175M1136 1158 1147 1171M1145 1154 1167 1150M1145 1154 1147 1171M1145 1154 1170 1168M1167 1150 1204 1145M1167 1150 1170 1168M1167 1150 1207 1164M1204 1145 1256 1142M1204 1145 1207 1164M1204 1145 1259 1161M1256 1142 1324 1138M1256 1142 1259 1161M1256 1142 1326 1157M1324 1138 1405 1135M1324 1138 1326 1157M1324 1138 1407 1155M1405 1135 1500 1132M1405 1135 1407 1155M1405 1135 1502 1152M1500 1132 1606 1130M1500 1132 1502 1152M1500 1132 1607 1150M1606 1130 1720 1128M1606 1130 1607 1150M1606 1130 1721 1149M1720 1128 1839 1127M1720 1128 1721 1149M1720 1128 1840 1148M1839 1127 1961 1127M1839 1127 1840 1148M1839 1127 1960 1148M1961 1127 2080 1128M1961 1127 1960 1148M1961 1127 2079 1149M2080 1128 2194 1130M2080 1128 2079 1149M2080 1128 2193 1150M2194 1130 2300 1132M2194 1130 2193 1150M2194 1130 2298 1152M2300 1132 2395 1135M2300 1132 2298 1152M2300 1132 2393 1155M2395 1135 2476 1138M2395 1135 2393 1155M2395 1135 2474 1157M2476 1138 2544 1142M2476 1138 2474 1157M2476 1138 2541 1161M2544 1142 2596 1145M2544 1142 2541 1161M2544 1142 2593 1164M2596 1145 2633 1150M2596 1145 2593 1164M2596 1145 2630 1168M2633 1150 2655 1154M2633 1150 2630 1168M2633 1150 2653 1171M2655 1154 2664 1158M2655 1154 2653 1171M2655 1154 2661 1175M2664 1158 2664 1159M2664 1158 2661 1175M2664 1158 2664 1162M1139 1176 1139 1175M1141 1189 1141 1192M1139 1175 1147 1171M1139 1175 1141 1192M1139 1175 1150 1189M1147 1171 1170 1168M1147 1171 1150 1189M1147 1171 1172 1186M1170 1168 1207 1164M1170 1168 1172 1186M1170 1168 1209 1183M1207 1164 1259 1161M1207 1164 1209 1183M1207 1164 1261 1180M1259 1161 1326 1157M1259 1161 1261 1180M1259 1161 1328 1177M1326 1157 1407 1155M1326 1157 1328 1177M1326 1157 1409 1175M1407 1155 1502 1152M1407 1155 1409 1175M1407 1155 1503 1173M1502 1152 1607 1150M1502 1152 1503 1173M1502 1152 1608 1171M1607 1150 1721 1149M1607 1150 1608 1171M1607 1150 1721 1170M1721 1149 1840 1148M1721 1149 1721 1170M1721 1149 1840 1169M1840 1148 1960 1148M1840 1148 1840 1169M1840 1148 1960 1169M1960 1148 2079 1149M1960 1148 1960 1169M1960 1148 2079 1170M2079 1149 2193 1150M2079 1149 2079 1170M2079 1149 2192 1171M2193 1150 2298 1152M2193 1150 2192 1171M2193 1150 2297 1173M2298 1152 2393 1155M2298 1152 2297 1173M2298 1152 2391 1175M2393 1155 2474 1157M2393 1155 2391 1175M2393 1155 2472 1177M2474 1157 2541 1161M2474 1157 2472 1177M2474 1157 2539 1180M2541 1161 2593 1164M2541 1161 2539 1180M2541 1161 2591 1183M2593 1164 2630 1168M2593 1164 2591 1183M2593 1164 2628 1186M2630 1168 2653 1171M2630 1168 2628 1186M2630 1168 2650 1189M2653 1171 2661 1175M2653 1171 2650 1189M2653 1171 2659 1192M2661 1175 2661 1176M2661 1175 2659 1192M2661 1175 2661 1179M1141 1192 1141 1192M1143 1206 1143 1209M1141 1192 1150 1189M1141 1192 1143 1209M1141 1192 1152 1206M1150 1189 1172 1186M1150 1189 1152 1206M1150 1189 1175 1204M1172 1186 1209 1183M1172 1186 1175 1204M1172 1186 1211 1201M1209 1183 1261 1180M1209 1183 1211 1201M1209 1183 1263 1199M1261 1180 1328 1177M1261 1180 1263 1199M1261 1180 1330 1197M1328 1177 1409 1175M1328 1177 1330 1197M1328 1177 1411 1195M1409 1175 1503 1173M1409 1175 1411 1195M1409 1175 1505 1193M1503 1173 1608 1171M1503 1173 1505 1193M1503 1173 1609 1191M1608 1171 1721 1170M1608 1171 1609 1191M1608 1171 1722 1191M1721 1170 1840 1169M1721 1170 1722 1191M1721 1170 1840 1190M1840 1169 1960 1169M1840 1169 1840 1190M1840 1169 1960 1190M1960 1169 2079 1170M1960 1169 1960 1190M1960 1169 2078 1191M2079 1170 2192 1171M2079 1170 2078 1191M2079 1170 2191 1191M2192 1171 2297 1173M2192 1171 2191 1191M2192 1171 2295 1193M2297 1173 2391 1175M2297 1173 2295 1193M2297 1173 2389 1195M2391 1175 2472 1177M2391 1175 2389 1195M2391 1175 2470 1197M2472 1177 2539 1180M2472 1177 2470 1197M2472 1177 2537 1199M2539 1180 2591 1183M2539 1180 2537 1199M2539 1180 2589 1201M2591 1183 2628 1186M2591 1183 2589 1201M2591 1183 2625 1204M2628 1186 2650 1189M2628 1186 2625 1204M2628 1186 2648 1206M2650 1189 2659 1192M2650 1189 2648 1206M2650 1189 2657 1209M2659 1192 2659 1192M2659 1192 2657 1209M2659 1192 2658 1196M1143 1209 1143 1209M1145 1223 1145 1226M1143 1209 1152 1206M1143 1209 1145 1226M1143 1209 1154 1224M1152 1206 1175 1204M1152 1206 1154 1224M1152 1206 1176 1222M1175 1204 1211 1201M1175 1204 1176 1222M1175 1204 1213 1220M1211 1201 1263 1199M1211 1201 1213 1220M1211 1201 1265 1218M1263 1199 1330 1197M1263 1199 1265 1218M1263 1199 1331 1216M1330 1197 1411 1195M1330 1197 1331 1216M1330 1197 1412 1215M1411 1195 1505 1193M1411 1195 1412 1215M1411 1195 1506 1213M1505 1193 1609 1191M1505 1193 1506 1213M1505 1193 1610 1212M1609 1191 1722 1191M1609 1191 1610 1212M1609 1191 1722 1211M1722 1191 1840 1190M1722 1191 1722 1211M1722 1191 1840 1211M1840 1190 1960 1190M1840 1190 1840 1211M1840 1190 1960 1211M1960 1190 2078 1191M1960 1190 1960 1211M1960 1190 2078 1211M2078 1191 2191 1191M2078 1191 2078 1211M2078 1191 2190 1212M2191 1191 2295 1193M2191 1191 2190 1212M2191 1191 2294 1213M2295 1193 2389 1195M2295 1193 2294 1213M2295 1193 2388 1215M2389 1195 2470 1197M2389 1195 2388 1215M2389 1195 2469 1216M2470 1197 2537 1199M2470 1197 2469 1216M2470 1197 2535 1218M2537 1199 2589 1201M2537 1199 2535 1218M2537 1199 2587 1220M2589 1201 2625 1204M2589 1201 2587 1220M2589 1201 2624 1222M2625 1204 2648 1206M2625 1204 2624 1222M2625 1204 2646 1224M2648 1206 2657 1209M2648 1206 2646 1224M2648 1206 2655 1226M2657 1209 2657 1209M2657 1209 2655 1226M2657 1209 2656 1213M1145 1226 1145 1226M1146 1240 1146 1243M1145 1226 1154 1224M1145 1226 1146 1243M1145 1226 1155 1241M1154 1224 1176 1222M1154 1224 1155 1241M1154 1224 1178 1240M1176 1222 1213 1220M1176 1222 1178 1240M1176 1222 1214 1238M1213 1220 1265 1218M1213 1220 1214 1238M1213 1220 1266 1237M1265 1218 1331 1216M1265 1218 1266 1237M1265 1218 1333 1236M1331 1216 1412 1215M1331 1216 1333 1236M1331 1216 1413 1234M1412 1215 1506 1213M1412 1215 1413 1234M1412 1215 1506 1233M1506 1213 1610 1212M1506 1213 1506 1233M1506 1213 1611 1233M1610 1212 1722 1211M1610 1212 1611 1233M1610 1212 1723 1232M1722 1211 1840 1211M1722 1211 1723 1232M1722 1211 1840 1232M1840 1211 1960 1211M1840 1211 1840 1232M1840 1211 1960 1232M1960 1211 2078 1211M1960 1211 1960 1232M1960 1211 2077 1232M2078 1211 2190 1212M2078 1211 2077 1232M2078 1211 2189 1233M2190 1212 2294 1213M2190 1212 2189 1233M2190 1212 2294 1233M2294 1213 2388 1215M2294 1213 2294 1233M2294 1213 2387 1234M2388 1215 2469 1216M2388 1215 2387 1234M2388 1215 2467 1236M2469 1216 2535 1218M2469 1216 2467 1236M2469 1216 2534 1237M2535 1218 2587 1220M2535 1218 2534 1237M2535 1218 2586 1238M2587 1220 2624 1222M2587 1220 2586 1238M2587 1220 2622 1240M2624 1222 2646 1224M2624 1222 2622 1240M2624 1222 2645 1241M2646 1224 2655 1226M2646 1224 2645 1241M2646 1224 2654 1243M2655 1226 2655 1226M2655 1226 2654 1243M2655 1226 2655 1229M1146 1243 1146 1243M1147 1257 1147 1260M1146 1243 1155 1241M1146 1243 1147 1260M1146 1243 1156 1259M1155 1241 1178 1240M1155 1241 1156 1259M1155 1241 1179 1258M1178 1240 1214 1238M1178 1240 1179 1258M1178 1240 1215 1257M1214 1238 1266 1237M1214 1238 1215 1257M1214 1238 1267 1256M1266 1237 1333 1236M1266 1237 1267 1256M1266 1237 1333 1255M1333 1236 1413 1234M1333 1236 1333 1255M1333 1236 1414 1254M1413 1234 1506 1233M1413 1234 1414 1254M1413 1234 1507 1254M1506 1233 1611 1233M1506 1233 1507 1254M1506 1233 1611 1253M1611 1233 1723 1232M1611 1233 1611 1253M1611 1233 1723 1253M1723 1232 1840 1232M1723 1232 1723 1253M1723 1232 1840 1252M1840 1232 1960 1232M1840 1232 1840 1252M1840 1232 1960 1252M1960 1232 2077 1232M1960 1232 1960 1252M1960 1232 2077 1253M2077 1232 2189 1233M2077 1232 2077 1253M2077 1232 2189 1253M2189 1233 2294 1233M2189 1233 2189 1253M2189 1233 2293 1254M2294 1233 2387 1234M2294 1233 2293 1254M2294 1233 2386 1254M2387 1234 2467 1236M2387 1234 2386 1254M2387 1234 2467 1255M2467 1236 2534 1237M2467 1236 2467 1255M2467 1236 2533 1256M2534 1237 2586 1238M2534 1237 2533 1256M2534 1237 2585 1257M2586 1238 2622 1240M2586 1238 2585 1257M2586 1238 2621 1258M2622 1240 2645 1241M2622 1240 2621 1258M2622 1240 2644 1259M2645 1241 2654 1243M2645 1241 2644 1259M2645 1241 2653 1260M2654 1243 2654 1243M2654 1243 2653 1260M2654 1243 2654 1246M1147 1260 1147 1260M1148 1274 1148 1277M1147 1260 1156 1259M1147 1260 1148 1277M1147 1260 1157 1276M1156 1259 1179 1258M1156 1259 1157 1276M1156 1259 1179 1276M1179 1258 1215 1257M1179 1258 1179 1276M1179 1258 1216 1275M1215 1257 1267 1256M1215 1257 1216 1275M1215 1257 1268 1275M1267 1256 1333 1255M1267 1256 1268 1275M1267 1256 1334 1275M1333 1255 1414 1254M1333 1255 1334 1275M1333 1255 1414 1274M1414 1254 1507 1254M1414 1254 1414 1274M1414 1254 1507 1274M1507 1254 1611 1253M1507 1254 1507 1274M1507 1254 1611 1274M1611 1253 1723 1253M1611 1253 1611 1274M1611 1253 1723 1273M1723 1253 1840 1252M1723 1253 1723 1273M1723 1253 1841 1273M1840 1252 1960 1252M1840 1252 1841 1273M1840 1252 1959 1273M1960 1252 2077 1253M1960 1252 1959 1273M1960 1252 2077 1273M2077 1253 2189 1253M2077 1253 2077 1273M2077 1253 2189 1274M2189 1253 2293 1254M2189 1253 2189 1274M2189 1253 2293 1274M2293 1254 2386 1254M2293 1254 2293 1274M2293 1254 2386 1274M2386 1254 2467 1255M2386 1254 2386 1274M2386 1254 2466 1275M2467 1255 2533 1256M2467 1255 2466 1275M2467 1255 2532 1275M2533 1256 2585 1257M2533 1256 2532 1275M2533 1256 2584 1275M2585 1257 2621 1258M2585 1257 2584 1275M2585 1257 2621 1276M2621 1258 2644 1259M2621 1258 2621 1276M2621 1258 2643 1276M2644 1259 2653 1260M2644 1259 2643 1276M2644 1259 2652 1277M2653 1260 2653 1260M2653 1260 2652 1277M2653 1260 2653 1263M1148 1277 1148 1277M1148 1291 1148 1294M1148 1277 1157 1276M1148 1277 1148 1294M1148 1277 1157 1294M1157 1276 1179 1276M1157 1276 1157 1294M1157 1276 1179 1294M1179 1276 1216 1275M1179 1276 1179 1294M1179 1276 1216 1294M1216 1275 1268 1275M1216 1275 1216 1294M1216 1275 1268 1294M1268 1275 1334 1275M1268 1275 1268 1294M1268 1275 1334 1294M1334 1275 1414 1274M1334 1275 1334 1294M1334 1275 1414 1294M1414 1274 1507 1274M1414 1274 1414 1294M1414 1274 1507 1294M1507 1274 1611 1274M1507 1274 1507 1294M1507 1274 1611 1294M1611 1274 1723 1273M1611 1274 1611 1294M1611 1274 1723 1294M1723 1273 1841 1273M1723 1273 1723 1294M1723 1273 1841 1294M1841 1273 1959 1273M1841 1273 1841 1294M1841 1273 1959 1294M1959 1273 2077 1273M1959 1273 1959 1294M1959 1273 2077 1294M2077 1273 2189 1274M2077 1273 2077 1294M2077 1273 2189 1294M2189 1274 2293 1274M2189 1274 2189 1294M2189 1274 2293 1294M2293 1274 2386 1274M2293 1274 2293 1294M2293 1274 2386 1294M2386 1274 2466 1275M2386 1274 2386 1294M2386 1274 2466 1294M2466 1275 2532 1275M2466 1275 2466 1294M2466 1275 2532 1294M2532 1275 2584 1275M2532 1275 2532 1294M2532 1275 2584 1294M2584 1275 2621 1276M2584 1275 2584 1294M2584 1275 2621 1294M2621 1276 2643 1276M2621 1276 2621 1294M2621 1276 2643 1294M2643 1276 2652 1277M2643 1276 2643 1294M2643 1276 2652 1294M2652 1277 2652 1277M2652 1277 2652 1294M2652 1277 2652 1280M1148 1294 1148 1294M1148 1308 1148 1311M1148 1294 1157 1294M1148 1294 1148 1311M1148 1294 1157 1312M1157 1294 1179 1294M1157 1294 1157 1312M1157 1294 1179 1312M1179 1294 1216 1294M1179 1294 1179 1312M1179 1294 1216 1313M1216 1294 1268 1294M1216 1294 1216 1313M1216 1294 1268 1313M1268 1294 1334 1294M1268 1294 1268 1313M1268 1294 1334 1313M1334 1294 1414 1294M1334 1294 1334 1313M1334 1294 1414 1314M1414 1294 1507 1294M1414 1294 1414 1314M1414 1294 1507 1314M1507 1294 1611 1294M1507 1294 1507 1314M1507 1294 1611 1314M1611 1294 1723 1294M1611 1294 1611 1314M1611 1294 1723 1315M1723 1294 1841 1294M1723 1294 1723 1315M1723 1294 1841 1315M1841 1294 1959 1294M1841 1294 1841 1315M1841 1294 1959 1315M1959 1294 2077 1294M1959 1294 1959 1315M1959 1294 2077 1315M2077 1294 2189 1294M2077 1294 2077 1315M2077 1294 2189 1314M2189 1294 2293 1294M2189 1294 2189 1314M2189 1294 2293 1314M2293 1294 2386 1294M2293 1294 2293 1314M2293 1294 2386 1314M2386 1294 2466 1294M2386 1294 2386 1314M2386 1294 2466 1313M2466 1294 2532 1294M2466 1294 2466 1313M2466 1294 2532 1313M2532 1294 2584 1294M2532 1294 2532 1313M2532 1294 2584 1313M2584 1294 2621 1294M2584 1294 2584 1313M2584 1294 2621 1312M2621 1294 2643 1294M2621 1294 2621 1312M2621 1294 2643 1312M2643 1294 2652 1294M2643 1294 2643 1312M2643 1294 2652 1311M2652 1294 2652 1294M2652 1294 2652 1311M2652 1294 2652 1297M1148 1311 1148 1311M1147 1325 1147 1328M1148 1311 1157 1312M1148 1311 1147 1328M1148 1311 1156 1329M1157 1312 1179 1312M1157 1312 1156 1329M1157 1312 1179 1330M1179 1312 1216 1313M1179 1312 1179 1330M1179 1312 1215 1331M1216 1313 1268 1313M1216 1313 1215 1331M1216 1313 1267 1332M1268 1313 1334 1313M1268 1313 1267 1332M1268 1313 1333 1333M1334 1313 1414 1314M1334 1313 1333 1333M1334 1313 1414 1334M1414 1314 1507 1314M1414 1314 1414 1334M1414 1314 1507 1334M1507 1314 1611 1314M1507 1314 1507 1334M1507 1314 1611 1335M1611 1314 1723 1315M1611 1314 1611 1335M1611 1314 1723 1335M1723 1315 1841 1315M1723 1315 1723 1335M1723 1315 1840 1336M1841 1315 1959 1315M1841 1315 1840 1336M1841 1315 1960 1336M1959 1315 2077 1315M1959 1315 1960 1336M1959 1315 2077 1335M2077 1315 2189 1314M2077 1315 2077 1335M2077 1315 2189 1335M2189 1314 2293 1314M2189 1314 2189 1335M2189 1314 2293 1334M2293 1314 2386 1314M2293 1314 2293 1334M2293 1314 2386 1334M2386 1314 2466 1313M2386 1314 2386 1334M2386 1314 2467 1333M2466 1313 2532 1313M2466 1313 2467 1333M2466 1313 2533 1332M2532 1313 2584 1313M2532 1313 2533 1332M2532 1313 2585 1331M2584 1313 2621 1312M2584 1313 2585 1331M2584 1313 2621 1330M2621 1312 2643 1312M2621 1312 2621 1330M2621 1312 2644 1329M2643 1312 2652 1311M2643 1312 2644 1329M2643 1312 2653 1328M2652 1311 2652 1311M2652 1311 2653 1328M2652 1311 2652 1314M1147 1328 1147 1328M1146 1342 1146 1345M1147 1328 1156 1329M1147 1328 1146 1345M1147 1328 1155 1347M1156 1329 1179 1330M1156 1329 1155 1347M1156 1329 1178 1348M1179 1330 1215 1331M1179 1330 1178 1348M1179 1330 1214 1350M1215 1331 1267 1332M1215 1331 1214 1350M1215 1331 1266 1351M1267 1332 1333 1333M1267 1332 1266 1351M1267 1332 1333 1352M1333 1333 1414 1334M1333 1333 1333 1352M1333 1333 1413 1354M1414 1334 1507 1334M1414 1334 1413 1354M1414 1334 1506 1355M1507 1334 1611 1335M1507 1334 1506 1355M1507 1334 1611 1355M1611 1335 1723 1335M1611 1335 1611 1355M1611 1335 1723 1356M1723 1335 1840 1336M1723 1335 1723 1356M1723 1335 1840 1356M1840 1336 1960 1336M1840 1336 1840 1356M1840 1336 1960 1356M1960 1336 2077 1335M1960 1336 1960 1356M1960 1336 2077 1356M2077 1335 2189 1335M2077 1335 2077 1356M2077 1335 2189 1355M2189 1335 2293 1334M2189 1335 2189 1355M2189 1335 2294 1355M2293 1334 2386 1334M2293 1334 2294 1355M2293 1334 2387 1354M2386 1334 2467 1333M2386 1334 2387 1354M2386 1334 2467 1352M2467 1333 2533 1332M2467 1333 2467 1352M2467 1333 2534 1351M2533 1332 2585 1331M2533 1332 2534 1351M2533 1332 2586 1350M2585 1331 2621 1330M2585 1331 2586 1350M2585 1331 2622 1348M2621 1330 2644 1329M2621 1330 2622 1348M2621 1330 2645 1347M2644 1329 2653 1328M2644 1329 2645 1347M2644 1329 2654 1345M2653 1328 2653 1328M2653 1328 2654 1345M2653 1328 2653 1331M1146 1345 1146 1345M1145 1359 1145 1362M1146 1345 1155 1347M1146 1345 1145 1362M1146 1345 1154 1364M1155 1347 1178 1348M1155 1347 1154 1364M1155 1347 1176 1366M1178 1348 1214 1350M1178 1348 1176 1366M1178 1348 1213 1368M1214 1350 1266 1351M1214 1350 1213 1368M1214 1350 1265 1370M1266 1351 1333 1352M1266 1351 1265 1370M1266 1351 1331 1372M1333 1352 1413 1354M1333 1352 1331 1372M1333 1352 1412 1373M1413 1354 1506 1355M1413 1354 1412 1373M1413 1354 1506 1375M1506 1355 1611 1355M1506 1355 1506 1375M1506 1355 1610 1376M1611 1355 1723 1356M1611 1355 1610 1376M1611 1355 1722 1377M1723 1356 1840 1356M1723 1356 1722 1377M1723 1356 1840 1377M1840 1356 1960 1356M1840 1356 1840 1377M1840 1356 1960 1377M1960 1356 2077 1356M1960 1356 1960 1377M1960 1356 2078 1377M2077 1356 2189 1355M2077 1356 2078 1377M2077 1356 2190 1376M2189 1355 2294 1355M2189 1355 2190 1376M2189 1355 2294 1375M2294 1355 2387 1354M2294 1355 2294 1375M2294 1355 2388 1373M2387 1354 2467 1352M2387 1354 2388 1373M2387 1354 2469 1372M2467 1352 2534 1351M2467 1352 2469 1372M2467 1352 2535 1370M2534 1351 2586 1350M2534 1351 2535 1370M2534 1351 2587 1368M2586 1350 2622 1348M2586 1350 2587 1368M2586 1350 2624 1366M2622 1348 2645 1347M2622 1348 2624 1366M2622 1348 2646 1364M2645 1347 2654 1345M2645 1347 2646 1364M2645 1347 2655 1362M2654 1345 2654 1345M2654 1345 2655 1362M2654 1345 2654 1348M1145 1362 1145 1362M1144 1375 1143 1379M1145 1362 1154 1364M1145 1362 1143 1379M1145 1362 1152 1382M1154 1364 1176 1366M1154 1364 1152 1382M1154 1364 1175 1384M1176 1366 1213 1368M1176 1366 1175 1384M1176 1366 1211 1387M1213 1368 1265 1370M1213 1368 1211 1387M1213 1368 1263 1389M1265 1370 1331 1372M1265 1370 1263 1389M1265 1370 1330 1391M1331 1372 1412 1373M1331 1372 1330 1391M1331 1372 1411 1393M1412 1373 1506 1375M1412 1373 1411 1393M1412 1373 1505 1395M1506 1375 1610 1376M1506 1375 1505 1395M1506 1375 1609 1397M1610 1376 1722 1377M1610 1376 1609 1397M1610 1376 1722 1397M1722 1377 1840 1377M1722 1377 1722 1397M1722 1377 1840 1398M1840 1377 1960 1377M1840 1377 1840 1398M1840 1377 1960 1398M1960 1377 2078 1377M1960 1377 1960 1398M1960 1377 2078 1397M2078 1377 2190 1376M2078 1377 2078 1397M2078 1377 2191 1397M2190 1376 2294 1375M2190 1376 2191 1397M2190 1376 2295 1395M2294 1375 2388 1373M2294 1375 2295 1395M2294 1375 2389 1393M2388 1373 2469 1372M2388 1373 2389 1393M2388 1373 2470 1391M2469 1372 2535 1370M2469 1372 2470 1391M2469 1372 2537 1389M2535 1370 2587 1368M2535 1370 2537 1389M2535 1370 2589 1387M2587 1368 2624 1366M2587 1368 2589 1387M2587 1368 2625 1384M2624 1366 2646 1364M2624 1366 2625 1384M2624 1366 2648 1382M2646 1364 2655 1362M2646 1364 2648 1382M2646 1364 2657 1379M2655 1362 2655 1362M2655 1362 2657 1379M2655 1362 2655 1365M1143 1379 1143 1379M1142 1392 1141 1396M1143 1379 1152 1382M1143 1379 1141 1396M1143 1379 1150 1399M1152 1382 1175 1384M1152 1382 1150 1399M1152 1382 1172 1402M1175 1384 1211 1387M1175 1384 1172 1402M1175 1384 1209 1405M1211 1387 1263 1389M1211 1387 1209 1405M1211 1387 1261 1408M1263 1389 1330 1391M1263 1389 1261 1408M1263 1389 1328 1411M1330 1391 1411 1393M1330 1391 1328 1411M1330 1391 1409 1413M1411 1393 1505 1395M1411 1393 1409 1413M1411 1393 1503 1415M1505 1395 1609 1397M1505 1395 1503 1415M1505 1395 1608 1417M1609 1397 1722 1397M1609 1397 1608 1417M1609 1397 1721 1418M1722 1397 1840 1398M1722 1397 1721 1418M1722 1397 1840 1419M1840 1398 1960 1398M1840 1398 1840 1419M1840 1398 1960 1419M1960 1398 2078 1397M1960 1398 1960 1419M1960 1398 2079 1418M2078 1397 2191 1397M2078 1397 2079 1418M2078 1397 2192 1417M2191 1397 2295 1395M2191 1397 2192 1417M2191 1397 2297 1415M2295 1395 2389 1393M2295 1395 2297 1415M2295 1395 2391 1413M2389 1393 2470 1391M2389 1393 2391 1413M2389 1393 2472 1411M2470 1391 2537 1389M2470 1391 2472 1411M2470 1391 2539 1408M2537 1389 2589 1387M2537 1389 2539 1408M2537 1389 2591 1405M2589 1387 2625 1384M2589 1387 2591 1405M2589 1387 2628 1402M2625 1384 2648 1382M2625 1384 2628 1402M2625 1384 2650 1399M2648 1382 2657 1379M2648 1382 2650 1399M2648 1382 2659 1396M2657 1379 2657 1379M2657 1379 2659 1396M2657 1379 2657 1382M1141 1396 1141 1396M1139 1409 1139 1413M1141 1396 1150 1399M1141 1396 1139 1413M1141 1396 1147 1417M1150 1399 1172 1402M1150 1399 1147 1417M1150 1399 1170 1420M1172 1402 1209 1405M1172 1402 1170 1420M1172 1402 1207 1424M1209 1405 1261 1408M1209 1405 1207 1424M1209 1405 1259 1427M1261 1408 1328 1411M1261 1408 1259 1427M1261 1408 1326 1431M1328 1411 1409 1413M1328 1411 1326 1431M1328 1411 1407 1433M1409 1413 1503 1415M1409 1413 1407 1433M1409 1413 1502 1436M1503 1415 1608 1417M1503 1415 1502 1436M1503 1415 1607 1438M1608 1417 1721 1418M1608 1417 1607 1438M1608 1417 1721 1439M1721 1418 1840 1419M1721 1418 1721 1439M1721 1418 1840 1440M1840 1419 1960 1419M1840 1419 1840 1440M1840 1419 1960 1440M1960 1419 2079 1418M1960 1419 1960 1440M1960 1419 2079 1439M2079 1418 2192 1417M2079 1418 2079 1439M2079 1418 2193 1438M2192 1417 2297 1415M2192 1417 2193 1438M2192 1417 2298 1436M2297 1415 2391 1413M2297 1415 2298 1436M2297 1415 2393 1433M2391 1413 2472 1411M2391 1413 2393 1433M2391 1413 2474 1431M2472 1411 2539 1408M2472 1411 2474 1431M2472 1411 2541 1427M2539 1408 2591 1405M2539 1408 2541 1427M2539 1408 2593 1424M2591 1405 2628 1402M2591 1405 2593 1424M2591 1405 2630 1420M2628 1402 2650 1399M2628 1402 2630 1420M2628 1402 2653 1417M2650 1399 2659 1396M2650 1399 2653 1417M2650 1399 2661 1413M2659 1396 2659 1396M2659 1396 2661 1413M2659 1396 2659 1399M1139 1412 1139 1413M1136 1426 1136 1430M1139 1413 1147 1417M1139 1413 1136 1430M1139 1413 1145 1434M1147 1417 1170 1420M1147 1417 1145 1434M1147 1417 1167 1438M1170 1420 1207 1424M1170 1420 1167 1438M1170 1420 1204 1443M1207 1424 1259 1427M1207 1424 1204 1443M1207 1424 1256 1446M1259 1427 1326 1431M1259 1427 1256 1446M1259 1427 1324 1450M1326 1431 1407 1433M1326 1431 1324 1450M1326 1431 1405 1453M1407 1433 1502 1436M1407 1433 1405 1453M1407 1433 1500 1456M1502 1436 1607 1438M1502 1436 1500 1456M1502 1436 1606 1458M1607 1438 1721 1439M1607 1438 1606 1458M1607 1438 1720 1460M1721 1439 1840 1440M1721 1439 1720 1460M1721 1439 1839 1461M1840 1440 1960 1440M1840 1440 1839 1461M1840 1440 1961 1461M1960 1440 2079 1439M1960 1440 1961 1461M1960 1440 2080 1460M2079 1439 2193 1438M2079 1439 2080 1460M2079 1439 2194 1458M2193 1438 2298 1436M2193 1438 2194 1458M2193 1438 2300 1456M2298 1436 2393 1433M2298 1436 2300 1456M2298 1436 2395 1453M2393 1433 2474 1431M2393 1433 2395 1453M2393 1433 2476 1450M2474 1431 2541 1427M2474 1431 2476 1450M2474 1431 2544 1446M2541 1427 2593 1424M2541 1427 2544 1446M2541 1427 2596 1443M2593 1424 2630 1420M2593 1424 2596 1443M2593 1424 2633 1438M2630 1420 2653 1417M2630 1420 2633 1438M2630 1420 2655 1434M2653 1417 2661 1413M2653 1417 2655 1434M2653 1417 2664 1430M2661 1413 2661 1412M2661 1413 2664 1430M2661 1413 2662 1416M1136 1429 1136 1430M1133 1443 1133 1447M1136 1430 1145 1434M1136 1430 1133 1447M1136 1430 1141 1452M1145 1434 1167 1438M1145 1434 1141 1452M1145 1434 1164 1457M1167 1438 1204 1443M1167 1438 1164 1457M1167 1438 1201 1461M1204 1443 1256 1446M1204 1443 1201 1461M1204 1443 1253 1466M1256 1446 1324 1450M1256 1446 1253 1466M1256 1446 1321 1470M1324 1450 1405 1453M1324 1450 1321 1470M1324 1450 1403 1474M1405 1453 1500 1456M1405 1453 1403 1474M1405 1453 1498 1477M1500 1456 1606 1458M1500 1456 1498 1477M1500 1456 1604 1479M1606 1458 1720 1460M1606 1458 1604 1479M1606 1458 1719 1481M1720 1460 1839 1461M1720 1460 1719 1481M1720 1460 1839 1482M1839 1461 1961 1461M1839 1461 1839 1482M1839 1461 1961 1482M1961 1461 2080 1460M1961 1461 1961 1482M1961 1461 2081 1481M2080 1460 2194 1458M2080 1460 2081 1481M2080 1460 2196 1479M2194 1458 2300 1456M2194 1458 2196 1479M2194 1458 2302 1477M2300 1456 2395 1453M2300 1456 2302 1477M2300 1456 2397 1474M2395 1453 2476 1450M2395 1453 2397 1474M2395 1453 2479 1470M2476 1450 2544 1446M2476 1450 2479 1470M2476 1450 2547 1466M2544 1446 2596 1443M2544 1446 2547 1466M2544 1446 2599 1461M2596 1443 2633 1438M2596 1443 2599 1461M2596 1443 2636 1457M2633 1438 2655 1434M2633 1438 2636 1457M2633 1438 2659 1452M2655 1434 2664 1430M2655 1434 2659 1452M2655 1434 2667 1447M2664 1430 2664 1429M2664 1430 2667 1447M2664 1430 2665 1433M1133 1446 1133 1447M1130 1460 1129 1464M1133 1447 1141 1452M1133 1447 1129 1464M1133 1447 1138 1469M1141 1452 1164 1457M1141 1452 1138 1469M1141 1452 1160 1475M1164 1457 1201 1461M1164 1457 1160 1475M1164 1457 1197 1480M1201 1461 1253 1466M1201 1461 1197 1480M1201 1461 1250 1485M1253 1466 1321 1470M1253 1466 1250 1485M1253 1466 1318 1490M1321 1470 1403 1474M1321 1470 1318 1490M1321 1470 1400 1494M1403 1474 1498 1477M1403 1474 1400 1494M1403 1474 1496 1497M1498 1477 1604 1479M1498 1477 1496 1497M1498 1477 1602 1500M1604 1479 1719 1481M1604 1479 1602 1500M1604 1479 1718 1502M1719 1481 1839 1482M1719 1481 1718 1502M1719 1481 1839 1503M1839 1482 1961 1482M1839 1482 1839 1503M1839 1482 1961 1503M1961 1482 2081 1481M1961 1482 1961 1503M1961 1482 2082 1502M2081 1481 2196 1479M2081 1481 2082 1502M2081 1481 2198 1500M2196 1479 2302 1477M2196 1479 2198 1500M2196 1479 2304 1497M2302 1477 2397 1474M2302 1477 2304 1497M2302 1477 2400 1494M2397 1474 2479 1470M2397 1474 2400 1494M2397 1474 2482 1490M2479 1470 2547 1466M2479 1470 2482 1490M2479 1470 2550 1485M2547 1466 2599 1461M2547 1466 2550 1485M2547 1466 2603 1480M2599 1461 2636 1457M2599 1461 2603 1480M2599 1461 2640 1475M2636 1457 2659 1452M2636 1457 2640 1475M2636 1457 2662 1469M2659 1452 2667 1447M2659 1452 2662 1469M2659 1452 2671 1464M2667 1447 2667 1446M2667 1447 2671 1464M2667 1447 2668 1450M1129 1463 1129 1464M1126 1476 1125 1481M1129 1464 1138 1469M1129 1464 1125 1481M1129 1464 1134 1487M1138 1469 1160 1475M1138 1469 1134 1487M1138 1469 1156 1493M1160 1475 1197 1480M1160 1475 1156 1493M1160 1475 1193 1499M1197 1480 1250 1485M1197 1480 1193 1499M1197 1480 1246 1504M1250 1485 1318 1490M1250 1485 1246 1504M1250 1485 1314 1509M1318 1490 1400 1494M1318 1490 1314 1509M1318 1490 1397 1514M1400 1494 1496 1497M1400 1494 1397 1514M1400 1494 1493 1518M1496 1497 1602 1500M1496 1497 1493 1518M1496 1497 1601 1521M1602 1500 1718 1502M1602 1500 1601 1521M1602 1500 1717 1523M1718 1502 1839 1503M1718 1502 1717 1523M1718 1502 1838 1524M1839 1503 1961 1503M1839 1503 1838 1524M1839 1503 1962 1524M1961 1503 2082 1502M1961 1503 1962 1524M1961 1503 2083 1523M2082 1502 2198 1500M2082 1502 2083 1523M2082 1502 2199 1521M2198 1500 2304 1497M2198 1500 2199 1521M2198 1500 2307 1518M2304 1497 2400 1494M2304 1497 2307 1518M2304 1497 2403 1514M2400 1494 2482 1490M2400 1494 2403 1514M2400 1494 2486 1509M2482 1490 2550 1485M2482 1490 2486 1509M2482 1490 2554 1504M2550 1485 2603 1480M2550 1485 2554 1504M2550 1485 2607 1499M2603 1480 2640 1475M2603 1480 2607 1499M2603 1480 2644 1493M2640 1475 2662 1469M2640 1475 2644 1493M2640 1475 2666 1487M2662 1469 2671 1464M2662 1469 2666 1487M2662 1469 2675 1481M2671 1464 2671 1463M2671 1464 2675 1481M2671 1464 2672 1467M1125 1480 1125 1481M1122 1493 1121 1499M1125 1481 1134 1487M1125 1481 1121 1499M1125 1481 1129 1505M1134 1487 1156 1493M1134 1487 1129 1505M1134 1487 1152 1511M1156 1493 1193 1499M1156 1493 1152 1511M1156 1493 1189 1517M1193 1499 1246 1504M1193 1499 1189 1517M1193 1499 1242 1523M1246 1504 1314 1509M1246 1504 1242 1523M1246 1504 1311 1529M1314 1509 1397 1514M1314 1509 1311 1529M1314 1509 1394 1534M1397 1514 1493 1518M1397 1514 1394 1534M1397 1514 1491 1539M1493 1518 1601 1521M1493 1518 1491 1539M1493 1518 1599 1542M1601 1521 1717 1523M1601 1521 1599 1542M1601 1521 1716 1544M1717 1523 1838 1524M1717 1523 1716 1544M1717 1523 1838 1546M1838 1524 1962 1524M1838 1524 1838 1546M1838 1524 1962 1546M1962 1524 2083 1523M1962 1524 1962 1546M1962 1524 2084 1544M2083 1523 2199 1521M2083 1523 2084 1544M2083 1523 2201 1542M2199 1521 2307 1518M2199 1521 2201 1542M2199 1521 2309 1539M2307 1518 2403 1514M2307 1518 2309 1539M2307 1518 2406 1534M2403 1514 2486 1509M2403 1514 2406 1534M2403 1514 2489 1529M2486 1509 2554 1504M2486 1509 2489 1529M2486 1509 2558 1523M2554 1504 2607 1499M2554 1504 2558 1523M2554 1504 2611 1517M2607 1499 2644 1493M2607 1499 2611 1517M2607 1499 2648 1511M2644 1493 2666 1487M2644 1493 2648 1511M2644 1493 2671 1505M2666 1487 2675 1481M2666 1487 2671 1505M2666 1487 2679 1499M2675 1481 2675 1480M2675 1481 2679 1499M2675 1481 2676 1484M1121 1497 1121 1499M1118 1510 1116 1516M1121 1499 1129 1505M1121 1499 1116 1516M1121 1499 1125 1522M1129 1505 1152 1511M1129 1505 1125 1522M1129 1505 1147 1529M1152 1511 1189 1517M1152 1511 1147 1529M1152 1511 1185 1536M1189 1517 1242 1523M1189 1517 1185 1536M1189 1517 1238 1543M1242 1523 1311 1529M1242 1523 1238 1543M1242 1523 1307 1549M1311 1529 1394 1534M1311 1529 1307 1549M1311 1529 1390 1555M1394 1534 1491 1539M1394 1534 1390 1555M1394 1534 1488 1559M1491 1539 1599 1542M1491 1539 1488 1559M1491 1539 1596 1563M1599 1542 1716 1544M1599 1542 1596 1563M1599 1542 1714 1566M1716 1544 1838 1546M1716 1544 1714 1566M1716 1544 1837 1567M1838 1546 1962 1546M1838 1546 1837 1567M1838 1546 1963 1567M1962 1546 2084 1544M1962 1546 1963 1567M1962 1546 2086 1566M2084 1544 2201 1542M2084 1544 2086 1566M2084 1544 2204 1563M2201 1542 2309 1539M2201 1542 2204 1563M2201 1542 2312 1559M2309 1539 2406 1534M2309 1539 2312 1559M2309 1539 2410 1555M2406 1534 2489 1529M2406 1534 2410 1555M2406 1534 2493 1549M2489 1529 2558 1523M2489 1529 2493 1549M2489 1529 2562 1543M2558 1523 2611 1517M2558 1523 2562 1543M2558 1523 2615 1536M2611 1517 2648 1511M2611 1517 2615 1536M2611 1517 2653 1529M2648 1511 2671 1505M2648 1511 2653 1529M2648 1511 2675 1522M2671 1505 2679 1499M2671 1505 2675 1522M2671 1505 2684 1516M2679 1499 2679 1497M2679 1499 2684 1516M2679 1499 2680 1501M1116 1514 1116 1516M1113 1527 1111 1533M1116 1516 1125 1522M1116 1516 1111 1533M1116 1516 1119 1540M1125 1522 1147 1529M1125 1522 1119 1540M1125 1522 1142 1548M1147 1529 1185 1536M1147 1529 1142 1548M1147 1529 1180 1555M1185 1536 1238 1543M1185 1536 1180 1555M1185 1536 1233 1562M1238 1543 1307 1549M1238 1543 1233 1562M1238 1543 1302 1569M1307 1549 1390 1555M1307 1549 1302 1569M1307 1549 1386 1575M1390 1555 1488 1559M1390 1555 1386 1575M1390 1555 1484 1580M1488 1559 1596 1563M1488 1559 1484 1580M1488 1559 1594 1584M1596 1563 1714 1566M1596 1563 1594 1584M1596 1563 1713 1587M1714 1566 1837 1567M1714 1566 1713 1587M1714 1566 1837 1589M1837 1567 1963 1567M1837 1567 1837 1589M1837 1567 1963 1589M1963 1567 2086 1566M1963 1567 1963 1589M1963 1567 2087 1587M2086 1566 2204 1563M2086 1566 2087 1587M2086 1566 2206 1584M2204 1563 2312 1559M2204 1563 2206 1584M2204 1563 2316 1580M2312 1559 2410 1555M2312 1559 2316 1580M2312 1559 2414 1575M2410 1555 2493 1549M2410 1555 2414 1575M2410 1555 2498 1569M2493 1549 2562 1543M2493 1549 2498 1569M2493 1549 2567 1562M2562 1543 2615 1536M2562 1543 2567 1562M2562 1543 2620 1555M2615 1536 2653 1529M2615 1536 2620 1555M2615 1536 2658 1548M2653 1529 2675 1522M2653 1529 2658 1548M2653 1529 2681 1540M2675 1522 2684 1516M2675 1522 2681 1540M2675 1522 2689 1533M2684 1516 2684 1514M2684 1516 2689 1533M2684 1516 2685 1518M1112 1531 1111 1533M1108 1543 1106 1550M1111 1533 1119 1540M1111 1533 1106 1550M1111 1533 1114 1558M1119 1540 1142 1548M1119 1540 1114 1558M1119 1540 1136 1566M1142 1548 1180 1555M1142 1548 1136 1566M1142 1548 1174 1574M1180 1555 1233 1562M1180 1555 1174 1574M1180 1555 1228 1582M1233 1562 1302 1569M1233 1562 1228 1582M1233 1562 1298 1589M1302 1569 1386 1575M1302 1569 1298 1589M1302 1569 1382 1596M1386 1575 1484 1580M1386 1575 1382 1596M1386 1575 1481 1601M1484 1580 1594 1584M1484 1580 1481 1601M1484 1580 1592 1606M1594 1584 1713 1587M1594 1584 1592 1606M1594 1584 1711 1609M1713 1587 1837 1589M1713 1587 1711 1609M1713 1587 1836 1610M1837 1589 1963 1589M1837 1589 1836 1610M1837 1589 1964 1610M1963 1589 2087 1587M1963 1589 1964 1610M1963 1589 2089 1609M2087 1587 2206 1584M2087 1587 2089 1609M2087 1587 2208 1606M2206 1584 2316 1580M2206 1584 2208 1606M2206 1584 2319 1601M2316 1580 2414 1575M2316 1580 2319 1601M2316 1580 2418 1596M2414 1575 2498 1569M2414 1575 2418 1596M2414 1575 2502 1589M2498 1569 2567 1562M2498 1569 2502 1589M2498 1569 2572 1582M2567 1562 2620 1555M2567 1562 2572 1582M2567 1562 2626 1574M2620 1555 2658 1548M2620 1555 2626 1574M2620 1555 2664 1566M2658 1548 2681 1540M2658 1548 2664 1566M2658 1548 2686 1558M2681 1540 2689 1533M2681 1540 2686 1558M2681 1540 2694 1550M2689 1533 2688 1531M2689 1533 2694 1550M2689 1533 2690 1535M1106 1548 1106 1550M1102 1560 1100 1567M1106 1550 1114 1558M1106 1550 1100 1567M1106 1550 1108 1576M1114 1558 1136 1566M1114 1558 1108 1576M1114 1558 1131 1584M1136 1566 1174 1574M1136 1566 1131 1584M1136 1566 1169 1593M1174 1574 1228 1582M1174 1574 1169 1593M1174 1574 1223 1601M1228 1582 1298 1589M1228 1582 1223 1601M1228 1582 1293 1609M1298 1589 1382 1596M1298 1589 1293 1609M1298 1589 1378 1616M1382 1596 1481 1601M1382 1596 1378 1616M1382 1596 1477 1622M1481 1601 1592 1606M1481 1601 1477 1622M1481 1601 1589 1627M1592 1606 1711 1609M1592 1606 1589 1627M1592 1606 1710 1630M1711 1609 1836 1610M1711 1609 1710 1630M1711 1609 1836 1632M1836 1610 1964 1610M1836 1610 1836 1632M1836 1610 1964 1632M1964 1610 2089 1609M1964 1610 1964 1632M1964 1610 2090 1630M2089 1609 2208 1606M2089 1609 2090 1630M2089 1609 2211 1627M2208 1606 2319 1601M2208 1606 2211 1627M2208 1606 2323 1622M2319 1601 2418 1596M2319 1601 2323 1622M2319 1601 2422 1616M2418 1596 2502 1589M2418 1596 2422 1616M2418 1596 2507 1609M2502 1589 2572 1582M2502 1589 2507 1609M2502 1589 2577 1601M2572 1582 2626 1574M2572 1582 2577 1601M2572 1582 2631 1593M2626 1574 2664 1566M2626 1574 2631 1593M2626 1574 2669 1584M2664 1566 2686 1558M2664 1566 2669 1584M2664 1566 2692 1576M2686 1558 2694 1550M2686 1558 2692 1576M2686 1558 2700 1567M2694 1550 2694 1548M2694 1550 2700 1567M2694 1550 2695 1552M1101 1565 1100 1567M1097 1577 1094 1584M1100 1567 1108 1576M1100 1567 1094 1584M1100 1567 1102 1594M1108 1576 1131 1584M1108 1576 1102 1594M1108 1576 1124 1603M1131 1584 1169 1593M1131 1584 1124 1603M1131 1584 1163 1612M1169 1593 1223 1601M1169 1593 1163 1612M1169 1593 1217 1621M1223 1601 1293 1609M1223 1601 1217 1621M1223 1601 1287 1629M1293 1609 1378 1616M1293 1609 1287 1629M1293 1609 1373 1637M1378 1616 1477 1622M1378 1616 1373 1637M1378 1616 1474 1643M1477 1622 1589 1627M1477 1622 1474 1643M1477 1622 1586 1649M1589 1627 1710 1630M1589 1627 1586 1649M1589 1627 1708 1652M1710 1630 1836 1632M1710 1630 1708 1652M1710 1630 1835 1654M1836 1632 1964 1632M1836 1632 1835 1654M1836 1632 1965 1654M1964 1632 2090 1630M1964 1632 1965 1654M1964 1632 2092 1652M2090 1630 2211 1627M2090 1630 2092 1652M2090 1630 2214 1649M2211 1627 2323 1622M2211 1627 2214 1649M2211 1627 2326 1643M2323 1622 2422 1616M2323 1622 2326 1643M2323 1622 2427 1637M2422 1616 2507 1609M2422 1616 2427 1637M2422 1616 2513 1629M2507 1609 2577 1601M2507 1609 2513 1629M2507 1609 2583 1621M2577 1601 2631 1593M2577 1601 2583 1621M2577 1601 2637 1612M2631 1593 2669 1584M2631 1593 2637 1612M2631 1593 2676 1603M2669 1584 2692 1576M2669 1584 2676 1603M2669 1584 2698 1594M2692 1576 2700 1567M2692 1576 2698 1594M2692 1576 2706 1584M2700 1567 2699 1565M2700 1567 2706 1584M2700 1567 2701 1570M1095 1582 1094 1584M1090 1593 1088 1602M1094 1584 1102 1594M1094 1584 1088 1602M1094 1584 1096 1611M1102 1594 1124 1603M1102 1594 1096 1611M1102 1594 1118 1621M1124 1603 1163 1612M1124 1603 1118 1621M1124 1603 1156 1631M1163 1612 1217 1621M1163 1612 1156 1631M1163 1612 1211 1641M1217 1621 1287 1629M1217 1621 1211 1641M1217 1621 1282 1650M1287 1629 1373 1637M1287 1629 1282 1650M1287 1629 1368 1658M1373 1637 1474 1643M1373 1637 1368 1658M1373 1637 1470 1665M1474 1643 1586 1649M1474 1643 1470 1665M1474 1643 1583 1670M1586 1649 1708 1652M1586 1649 1583 1670M1586 1649 1706 1674M1708 1652 1835 1654M1708 1652 1706 1674M1708 1652 1835 1676M1835 1654 1965 1654M1835 1654 1835 1676M1835 1654 1965 1676M1965 1654 2092 1652M1965 1654 1965 1676M1965 1654 2094 1674M2092 1652 2214 1649M2092 1652 2094 1674M2092 1652 2217 1670M2214 1649 2326 1643M2214 1649 2217 1670M2214 1649 2330 1665M2326 1643 2427 1637M2326 1643 2330 1665M2326 1643 2432 1658M2427 1637 2513 1629M2427 1637 2432 1658M2427 1637 2518 1650M2513 1629 2583 1621M2513 1629 2518 1650M2513 1629 2589 1641M2583 1621 2637 1612M2583 1621 2589 1641M2583 1621 2644 1631M2637 1612 2676 1603M2637 1612 2644 1631M2637 1612 2682 1621M2676 1603 2698 1594M2676 1603 2682 1621M2676 1603 2704 1611M2698 1594 2706 1584M2698 1594 2704 1611M2698 1594 2712 1602M2706 1584 2705 1582M2706 1584 2712 1602M2706 1584 2707 1587M1089 1599 1088 1602M1084 1610 1081 1619M1088 1602 1096 1611M1088 1602 1081 1619M1088 1602 1089 1629M1096 1611 1118 1621M1096 1611 1089 1629M1096 1611 1111 1640M1118 1621 1156 1631M1118 1621 1111 1640M1118 1621 1150 1650M1156 1631 1211 1641M1156 1631 1150 1650M1156 1631 1204 1661M1211 1641 1282 1650M1211 1641 1204 1661M1211 1641 1276 1670M1282 1650 1368 1658M1282 1650 1276 1670M1282 1650 1363 1679M1368 1658 1470 1665M1368 1658 1363 1679M1368 1658 1465 1686M1470 1665 1583 1670M1470 1665 1465 1686M1470 1665 1580 1692M1583 1670 1706 1674M1583 1670 1580 1692M1583 1670 1704 1696M1706 1674 1835 1676M1706 1674 1704 1696M1706 1674 1834 1698M1835 1676 1965 1676M1835 1676 1834 1698M1835 1676 1966 1698M1965 1676 2094 1674M1965 1676 1966 1698M1965 1676 2096 1696M2094 1674 2217 1670M2094 1674 2096 1696M2094 1674 2220 1692M2217 1670 2330 1665M2217 1670 2220 1692M2217 1670 2335 1686M2330 1665 2432 1658M2330 1665 2335 1686M2330 1665 2437 1679M2432 1658 2518 1650M2432 1658 2437 1679M2432 1658 2524 1670M2518 1650 2589 1641M2518 1650 2524 1670M2518 1650 2596 1661M2589 1641 2644 1631M2589 1641 2596 1661M2589 1641 2650 1650M2644 1631 2682 1621M2644 1631 2650 1650M2644 1631 2689 1640M2682 1621 2704 1611M2682 1621 2689 1640M2682 1621 2711 1629M2704 1611 2712 1602M2704 1611 2711 1629M2704 1611 2719 1619M2712 1602 2711 1599M2712 1602 2719 1619M2712 1602 2713 1604M1082 1615 1081 1619M1077 1627 1075 1636M1081 1619 1089 1629M1081 1619 1075 1636M1081 1619 1082 1647M1089 1629 1111 1640M1089 1629 1082 1647M1089 1629 1104 1659M1111 1640 1150 1650M1111 1640 1104 1659M1111 1640 1143 1670M1150 1650 1204 1661M1150 1650 1143 1670M1150 1650 1198 1681M1204 1661 1276 1670M1204 1661 1198 1681M1204 1661 1270 1691M1276 1670 1363 1679M1276 1670 1270 1691M1276 1670 1358 1700M1363 1679 1465 1686M1363 1679 1358 1700M1363 1679 1461 1708M1465 1686 1580 1692M1465 1686 1461 1708M1465 1686 1577 1714M1580 1692 1704 1696M1580 1692 1577 1714M1580 1692 1702 1718M1704 1696 1834 1698M1704 1696 1702 1718M1704 1696 1833 1721M1834 1698 1966 1698M1834 1698 1833 1721M1834 1698 1967 1721M1966 1698 2096 1696M1966 1698 1967 1721M1966 1698 2098 1718M2096 1696 2220 1692M2096 1696 2098 1718M2096 1696 2223 1714M2220 1692 2335 1686M2220 1692 2223 1714M2220 1692 2339 1708M2335 1686 2437 1679M2335 1686 2339 1708M2335 1686 2442 1700M2437 1679 2524 1670M2437 1679 2442 1700M2437 1679 2530 1691M2524 1670 2596 1661M2524 1670 2530 1691M2524 1670 2602 1681M2596 1661 2650 1650M2596 1661 2602 1681M2596 1661 2657 1670M2650 1650 2689 1640M2650 1650 2657 1670M2650 1650 2696 1659M2689 1640 2711 1629M2689 1640 2696 1659M2689 1640 2718 1647M2711 1629 2719 1619M2711 1629 2718 1647M2711 1629 2725 1636M2719 1619 2718 1615M2719 1619 2725 1636M2719 1619 2720 1621M1075 1632 1075 1636M1071 1644 1067 1653M1075 1636 1082 1647M1075 1636 1067 1653M1075 1636 1074 1665M1082 1647 1104 1659M1082 1647 1074 1665M1082 1647 1097 1677M1104 1659 1143 1670M1104 1659 1097 1677M1104 1659 1135 1689M1143 1670 1198 1681M1143 1670 1135 1689M1143 1670 1191 1701M1198 1681 1270 1691M1198 1681 1191 1701M1198 1681 1263 1711M1270 1691 1358 1700M1270 1691 1263 1711M1270 1691 1352 1721M1358 1700 1461 1708M1358 1700 1352 1721M1358 1700 1456 1730M1461 1708 1577 1714M1461 1708 1456 1730M1461 1708 1573 1736M1577 1714 1702 1718M1577 1714 1573 1736M1577 1714 1700 1741M1702 1718 1833 1721M1702 1718 1700 1741M1702 1718 1833 1743M1833 1721 1967 1721M1833 1721 1833 1743M1833 1721 1967 1743M1967 1721 2098 1718M1967 1721 1967 1743M1967 1721 2100 1741M2098 1718 2223 1714M2098 1718 2100 1741M2098 1718 2227 1736M2223 1714 2339 1708M2223 1714 2227 1736M2223 1714 2344 1730M2339 1708 2442 1700M2339 1708 2344 1730M2339 1708 2448 1721M2442 1700 2530 1691M2442 1700 2448 1721M2442 1700 2537 1711M2530 1691 2602 1681M2530 1691 2537 1711M2530 1691 2609 1701M2602 1681 2657 1670M2602 1681 2609 1701M2602 1681 2665 1689M2657 1670 2696 1659M2657 1670 2665 1689M2657 1670 2703 1677M2696 1659 2718 1647M2696 1659 2703 1677M2696 1659 2726 1665M2718 1647 2725 1636M2718 1647 2726 1665M2718 1647 2733 1653M2725 1636 2725 1632M2725 1636 2733 1653M2725 1636 2727 1638M1068 1649 1067 1653M1063 1660 1060 1671M1067 1653 1074 1665M1067 1653 1060 1671M1067 1653 1067 1683M1074 1665 1097 1677M1074 1665 1067 1683M1074 1665 1089 1696M1097 1677 1135 1689M1097 1677 1089 1696M1097 1677 1128 1709M1135 1689 1191 1701M1135 1689 1128 1709M1135 1689 1184 1721M1191 1701 1263 1711M1191 1701 1184 1721M1191 1701 1257 1732M1263 1711 1352 1721M1263 1711 1257 1732M1263 1711 1346 1743M1352 1721 1456 1730M1352 1721 1346 1743M1352 1721 1451 1751M1456 1730 1573 1736M1456 1730 1451 1751M1456 1730 1569 1758M1573 1736 1700 1741M1573 1736 1569 1758M1573 1736 1697 1763M1700 1741 1833 1743M1700 1741 1697 1763M1700 1741 1832 1766M1833 1743 1967 1743M1833 1743 1832 1766M1833 1743 1968 1766M1967 1743 2100 1741M1967 1743 1968 1766M1967 1743 2103 1763M2100 1741 2227 1736M2100 1741 2103 1763M2100 1741 2231 1758M2227 1736 2344 1730M2227 1736 2231 1758M2227 1736 2349 1751M2344 1730 2448 1721M2344 1730 2349 1751M2344 1730 2454 1743M2448 1721 2537 1711M2448 1721 2454 1743M2448 1721 2543 1732M2537 1711 2609 1701M2537 1711 2543 1732M2537 1711 2616 1721M2609 1701 2665 1689M2609 1701 2616 1721M2609 1701 2672 1709M2665 1689 2703 1677M2665 1689 2672 1709M2665 1689 2711 1696M2703 1677 2726 1665M2703 1677 2711 1696M2703 1677 2733 1683M2726 1665 2733 1653M2726 1665 2733 1683M2726 1665 2740 1671M2733 1653 2732 1649M2733 1653 2740 1671M2733 1653 2734 1655M1061 1666 1060 1671M1056 1677 1052 1688M1060 1671 1067 1683M1060 1671 1052 1688M1060 1671 1059 1701M1067 1683 1089 1696M1067 1683 1059 1701M1067 1683 1081 1715M1089 1696 1128 1709M1089 1696 1081 1715M1089 1696 1120 1728M1128 1709 1184 1721M1128 1709 1120 1728M1128 1709 1176 1741M1184 1721 1257 1732M1184 1721 1176 1741M1184 1721 1250 1753M1257 1732 1346 1743M1257 1732 1250 1753M1257 1732 1340 1764M1346 1743 1451 1751M1346 1743 1340 1764M1346 1743 1446 1773M1451 1751 1569 1758M1451 1751 1446 1773M1451 1751 1566 1781M1569 1758 1697 1763M1569 1758 1566 1781M1569 1758 1695 1786M1697 1763 1832 1766M1697 1763 1695 1786M1697 1763 1831 1789M1832 1766 1968 1766M1832 1766 1831 1789M1832 1766 1969 1789M1968 1766 2103 1763M1968 1766 1969 1789M1968 1766 2105 1786M2103 1763 2231 1758M2103 1763 2105 1786M2103 1763 2234 1781M2231 1758 2349 1751M2231 1758 2234 1781M2231 1758 2354 1773M2349 1751 2454 1743M2349 1751 2354 1773M2349 1751 2460 1764M2454 1743 2543 1732M2454 1743 2460 1764M2454 1743 2550 1753M2543 1732 2616 1721M2543 1732 2550 1753M2543 1732 2624 1741M2616 1721 2672 1709M2616 1721 2624 1741M2616 1721 2680 1728M2672 1709 2711 1696M2672 1709 2680 1728M2672 1709 2719 1715M2711 1696 2733 1683M2711 1696 2719 1715M2711 1696 2741 1701M2733 1683 2740 1671M2733 1683 2741 1701M2733 1683 2748 1688M2740 1671 2739 1666M2740 1671 2748 1688M2740 1671 2742 1672M1053 1683 1052 1688M1048 1694 1044 1705M1052 1688 1059 1701M1052 1688 1044 1705M1052 1688 1050 1719M1059 1701 1081 1715M1059 1701 1050 1719M1059 1701 1072 1733M1081 1715 1120 1728M1081 1715 1072 1733M1081 1715 1111 1748M1120 1728 1176 1741M1120 1728 1111 1748M1120 1728 1168 1761M1176 1741 1250 1753M1176 1741 1168 1761M1176 1741 1242 1774M1250 1753 1340 1764M1250 1753 1242 1774M1250 1753 1334 1786M1340 1764 1446 1773M1340 1764 1334 1786M1340 1764 1441 1796M1446 1773 1566 1781M1446 1773 1441 1796M1446 1773 1562 1804M1566 1781 1695 1786M1566 1781 1562 1804M1566 1781 1693 1809M1695 1786 1831 1789M1695 1786 1693 1809M1695 1786 1830 1812M1831 1789 1969 1789M1831 1789 1830 1812M1831 1789 1970 1812M1969 1789 2105 1786M1969 1789 1970 1812M1969 1789 2107 1809M2105 1786 2234 1781M2105 1786 2107 1809M2105 1786 2238 1804M2234 1781 2354 1773M2234 1781 2238 1804M2234 1781 2359 1796M2354 1773 2460 1764M2354 1773 2359 1796M2354 1773 2466 1786M2460 1764 2550 1753M2460 1764 2466 1786M2460 1764 2558 1774M2550 1753 2624 1741M2550 1753 2558 1774M2550 1753 2632 1761M2624 1741 2680 1728M2624 1741 2632 1761M2624 1741 2689 1748M2680 1728 2719 1715M2680 1728 2689 1748M2680 1728 2728 1733M2719 1715 2741 1701M2719 1715 2728 1733M2719 1715 2750 1719M2741 1701 2748 1688M2741 1701 2750 1719M2741 1701 2756 1705M2748 1688 2747 1683M2748 1688 2756 1705M2748 1688 2750 1690M1045 1700 1044 1705M1040 1710 1035 1723M1044 1705 1050 1719M1044 1705 1035 1723M1044 1705 1042 1737M1050 1719 1072 1733M1050 1719 1042 1737M1050 1719 1064 1752M1072 1733 1111 1748M1072 1733 1064 1752M1072 1733 1103 1767M1111 1748 1168 1761M1111 1748 1103 1767M1111 1748 1160 1782M1168 1761 1242 1774M1168 1761 1160 1782M1168 1761 1235 1795M1242 1774 1334 1786M1242 1774 1235 1795M1242 1774 1327 1808M1334 1786 1441 1796M1334 1786 1327 1808M1334 1786 1435 1818M1441 1796 1562 1804M1441 1796 1435 1818M1441 1796 1557 1826M1562 1804 1693 1809M1562 1804 1557 1826M1562 1804 1690 1832M1693 1809 1830 1812M1693 1809 1690 1832M1693 1809 1829 1835M1830 1812 1970 1812M1830 1812 1829 1835M1830 1812 1971 1835M1970 1812 2107 1809M1970 1812 1971 1835M1970 1812 2110 1832M2107 1809 2238 1804M2107 1809 2110 1832M2107 1809 2243 1826M2238 1804 2359 1796M2238 1804 2243 1826M2238 1804 2365 1818M2359 1796 2466 1786M2359 1796 2365 1818M2359 1796 2473 1808M2466 1786 2558 1774M2466 1786 2473 1808M2466 1786 2565 1795M2558 1774 2632 1761M2558 1774 2565 1795M2558 1774 2640 1782M2632 1761 2689 1748M2632 1761 2640 1782M2632 1761 2697 1767M2689 1748 2728 1733M2689 1748 2697 1767M2689 1748 2736 1752M2728 1733 2750 1719M2728 1733 2736 1752M2728 1733 2758 1737M2750 1719 2756 1705M2750 1719 2758 1737M2750 1719 2765 1723M2756 1705 2755 1700M2756 1705 2765 1723M2756 1705 2758 1707"/>
<path d="M849 1909 V1818" stroke="#40e040" stroke-width="2"/><path d="M840 1818 L849 1796 L857 1818z" fill="#10b010" stroke="#083" stroke-width="1"/>
<path d="M849 1909 H942" stroke="#e02040" stroke-width="2"/><path d="M940 1900 L962 1908 L940 1917z" fill="#d01020" stroke="#600" stroke-width="1"/>
<circle cx="849" cy="1909" r="8" fill="#e8e800"/>
<text x="853" y="1818" font-family="Liberation Sans" font-size="31" fill="#000">Z</text>
<text x="851" y="1909" font-family="Liberation Sans" font-size="31" fill="#000">Y</text>
<text x="945" y="1911" font-family="Liberation Sans" font-size="31" fill="#000">X</text>
<defs><linearGradient id="leg" x1="0" y1="1" x2="0" y2="0"><stop offset="0" stop-color="#3b4cc0"/><stop offset="0.125" stop-color="#6282ea"/><stop offset="0.25" stop-color="#8db0fe"/><stop offset="0.375" stop-color="#b8d0f9"/><stop offset="0.5" stop-color="#dddddd"/><stop offset="0.625" stop-color="#f5c4ad"/><stop offset="0.75" stop-color="#f49a7b"/><stop offset="0.875" stop-color="#de604d"/><stop offset="1" stop-color="#b40426"/></linearGradient></defs>
<rect x="2987" y="1048" width="15.6" height="542" fill="url(#leg)"/>
<path d="M2999 1046.5 H3011" stroke="#222" stroke-width="1.5"/>
<text x="3017" y="1051.5" font-family="Liberation Sans" font-size="15" fill="#222">5.4e-01</text>
<path d="M2999 1068.3 H3011" stroke="#222" stroke-width="1.5"/>
<text x="3017" y="1073.3" font-family="Liberation Sans" font-size="15" fill="#222">0.5</text>
<path d="M2999 1118.4 H3011" stroke="#222" stroke-width="1.5"/>
<text x="3017" y="1123.4" font-family="Liberation Sans" font-size="15" fill="#222">0.4</text>
<path d="M2999 1168.5 H3011" stroke="#222" stroke-width="1.5"/>
<text x="3017" y="1173.5" font-family="Liberation Sans" font-size="15" fill="#222">0.3</text>
<path d="M2999 1218.6 H3011" stroke="#222" stroke-width="1.5"/>
<text x="3017" y="1223.6" font-family="Liberation Sans" font-size="15" fill="#222">0.2</text>
<path d="M2999 1268.7 H3011" stroke="#222" stroke-width="1.5"/>
<text x="3017" y="1273.7" font-family="Liberation Sans" font-size="15" fill="#222">0.1</text>
<path d="M2999 1318.8 H3011" stroke="#222" stroke-width="1.5"/>
<text x="3017" y="1323.8" font-family="Liberation Sans" font-size="15" fill="#222">0</text>
<path d="M2999 1368.9 H3011" stroke="#222" stroke-width="1.5"/>
<text x="3017" y="1373.9" font-family="Liberation Sans" font-size="15" fill="#222">-0.1</text>
<path d="M2999 1419.0 H3011" stroke="#222" stroke-width="1.5"/>
<text x="3017" y="1424.0" font-family="Liberation Sans" font-size="15" fill="#222">-0.2</text>
<path d="M2999 1469.1 H3011" stroke="#222" stroke-width="1.5"/>
<text x="3017" y="1474.1" font-family="Liberation Sans" font-size="15" fill="#222">-0.3</text>
<path d="M2999 1519.2 H3011" stroke="#222" stroke-width="1.5"/>
<text x="3017" y="1524.2" font-family="Liberation Sans" font-size="15" fill="#222">-0.4</text>
<path d="M2999 1569.3 H3011" stroke="#222" stroke-width="1.5"/>
<text x="3017" y="1574.3" font-family="Liberation Sans" font-size="15" fill="#222">-0.5</text>
<path d="M2999 1590.5 H3011" stroke="#222" stroke-width="1.5"/>
<text x="3017" y="1595.5" font-family="Liberation Sans" font-size="15" fill="#222">-5.4e-01</text>
<text transform="translate(3096 1349) rotate(-90)" font-family="Liberation Sans" font-size="15" fill="#222">surface Z</text>
</svg>
</body></html>
